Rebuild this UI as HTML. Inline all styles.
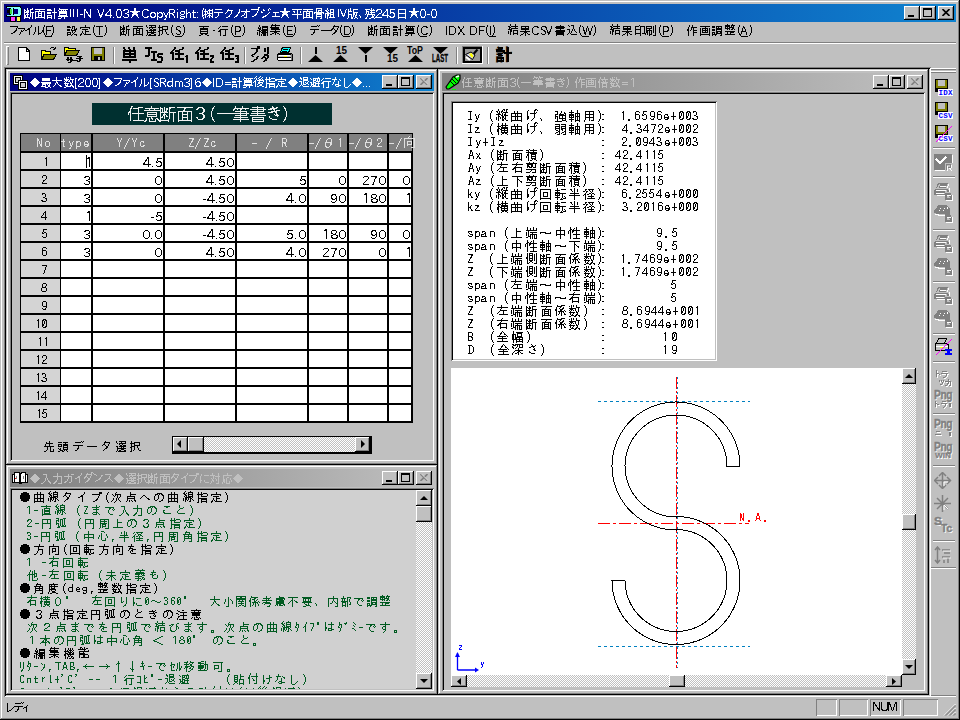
<!DOCTYPE html><html><head><meta charset="utf-8"><style>
html,body{margin:0;padding:0;}
body{width:960px;height:720px;overflow:hidden;position:relative;background:#c0c0c0;font-family:"Liberation Sans",sans-serif;font-size:12px;color:#000;}
div,svg{position:absolute;box-sizing:border-box;}
.t{white-space:pre;line-height:13px;}
.k{-webkit-text-stroke:0.15px currentColor;}
.j{font-family:"Liberation Sans",sans-serif;}
</style></head><body>
<div style="left:0px;top:0px;width:960px;height:720px;box-shadow:inset -1px -1px #000,inset 1px 1px #c0c0c0,inset -2px -2px #808080,inset 2px 2px #fff;background:#c0c0c0"></div>
<div style="left:4px;top:4px;width:952px;height:18px;background:linear-gradient(to right,#000080,#1084d0)"></div>
<svg style="left:5px;top:5px;width:17px;height:17px" viewBox="0 0 17 17" shape-rendering="crispEdges"><path d="M1 1 H14 Q17 1 17 5 V8 Q17 12 14 12 H1 V10 H4 V8 H2 V5 H4 V3 H1 Z" fill="#000"/><path d="M2 2 H13 Q16 2 16 5 V8 Q16 11 13 11 H2 V10 H6 V3 H2 Z" fill="#80ffff"/><rect x="9" y="4" width="4" height="5" fill="#000080"/><rect x="8" y="3" width="1" height="7" fill="#000"/><rect x="5" y="4" width="2" height="5" fill="#40e040"/><rect x="5" y="12" width="6" height="5" fill="#000"/><rect x="6" y="12" width="4" height="4" fill="#ff40ff"/><rect x="12" y="12" width="4" height="5" fill="#000"/><rect x="12" y="12" width="3" height="4" fill="#ffff40"/></svg>
<div style="left:904px;top:6px;width:16px;height:14px;box-shadow:inset -1px -1px #000,inset 1px 1px #fff,inset -2px -2px #808080,inset 2px 2px #c0c0c0;background:#c0c0c0;"></div>
<div style="left:908px;top:15px;width:6px;height:2px;background:#000"></div>
<div style="left:920px;top:6px;width:16px;height:14px;box-shadow:inset -1px -1px #000,inset 1px 1px #fff,inset -2px -2px #808080,inset 2px 2px #c0c0c0;background:#c0c0c0;"></div>
<div style="left:923px;top:8px;width:9px;height:9px;border:1px solid #000;border-top-width:2px;box-sizing:border-box"></div>
<div style="left:938px;top:6px;width:16px;height:14px;box-shadow:inset -1px -1px #000,inset 1px 1px #fff,inset -2px -2px #808080,inset 2px 2px #c0c0c0;background:#c0c0c0;"></div>
<svg style="left:942px;top:9px;width:8px;height:7px" viewBox="0 0 8 7"><path d="M0.5 0 L7.5 7 M7.5 0 L0.5 7" stroke="#000" stroke-width="1.6"/></svg>
<div style="left:4px;top:42px;width:952px;height:1px;background:#808080"></div>
<div style="left:4px;top:43px;width:952px;height:1px;background:#fff"></div>
<div style="left:6px;top:46px;width:3px;height:19px;box-shadow:inset 1px 1px #fff,inset -1px -1px #808080;"></div>
<div style="left:113px;top:47px;width:1px;height:17px;background:#808080"></div>
<div style="left:114px;top:47px;width:1px;height:17px;background:#fff"></div>
<div style="left:244px;top:47px;width:1px;height:17px;background:#808080"></div>
<div style="left:245px;top:47px;width:1px;height:17px;background:#fff"></div>
<div style="left:300px;top:47px;width:1px;height:17px;background:#808080"></div>
<div style="left:301px;top:47px;width:1px;height:17px;background:#fff"></div>
<div style="left:456px;top:47px;width:1px;height:17px;background:#808080"></div>
<div style="left:457px;top:47px;width:1px;height:17px;background:#fff"></div>
<div style="left:487px;top:47px;width:1px;height:17px;background:#808080"></div>
<div style="left:488px;top:47px;width:1px;height:17px;background:#fff"></div>
<svg style="left:18px;top:47px;width:12px;height:14px" viewBox="0 0 12 14" shape-rendering="crispEdges"><path d="M0.5 0.5 H8 L11.5 4 V13.5 H0.5 Z" fill="#fff" stroke="#000"/><path d="M8 0.5 V4 H11.5" fill="none" stroke="#000"/></svg>
<svg style="left:41px;top:47px;width:16px;height:14px" viewBox="0 0 16 14" shape-rendering="crispEdges"><path d="M9 2 C10 0 13 0 14 2 M14 2 l-2 0 M14 2 l0 -2" stroke="#000" fill="none"/><path d="M0.5 3.5 H4 L5 4.5 H9.5 V7.5 H3 L0.5 12.5 Z" fill="#ffff00" stroke="#000"/><path d="M3 7.5 H15.5 L12.5 12.5 H0.5 Z" fill="#808000" stroke="#000"/></svg>
<svg style="left:64px;top:47px;width:16px;height:10px" viewBox="0 0 16 10" shape-rendering="crispEdges"><path d="M0.5 0.5 H4 L5 1.5 H11.5 V3.5 H3 L0.5 8.5 Z" fill="#ffff00" stroke="#000"/><path d="M3 3.5 H15.5 L12.5 8.5 H0.5 Z" fill="#808000" stroke="#000"/></svg>
<svg style="left:91px;top:47px;width:14px;height:14px" viewBox="0 0 14 14" shape-rendering="crispEdges"><rect x="0" y="0" width="14" height="14" fill="#000"/><rect x="1" y="1" width="12" height="12" fill="#808000"/><rect x="3" y="1" width="8" height="6" fill="#c0c0c0"/><rect x="3" y="9" width="8" height="5" fill="#000"/><rect x="7" y="10" width="2" height="3" fill="#c0c0c0"/></svg>
<svg style="left:118px;top:44px;width:20px;height:20px" viewBox="0 0 20 20" shape-rendering="crispEdges"><path d="M5 3h2v2h-2zM10 3h2v2h-2zM15 3h2v2h-2zM6 5h2v1h-2zM11 5h2v1h-2zM15 5h2v1h-2zM5 6h13v8h-13zM4 15h15v2h-15zM11 17h2v2h-2z" fill="#000"/><path d="M7 8h4v1h-4z M13 8h3v1h-3z M7 11h4v1h-4z M13 11h3v1h-3z" fill="#c0c0c0"/></svg>
<svg style="left:142px;top:44px;width:22px;height:20px" viewBox="0 0 22 20" shape-rendering="crispEdges"><path d="M3 3h7v2h-7zM6 5h2v7h-2zM3 11h4v2h-4zM9 7h6v2h-6zM11 9h2v6h-2zM9 15h6v2h-6zM16 9h5v2h-5zM15 10h2v3h-2zM16 12h4v2h-4zM19 13h2v4h-2zM15 17h5v2h-5z" fill="#000"/></svg>
<svg style="left:168px;top:44px;width:22px;height:20px" viewBox="0 0 22 20" shape-rendering="crispEdges"><path d="M6 3h2v2h-2zM5 5h2v1h-2zM4 6h2v1h-2zM3 7h2v1h-2zM2 8h2v2h-2zM4 8h2v8h-2zM14 3h2v2h-2zM11 5h4v1h-4zM7 6h5v2h-5zM7 9h9v2h-9zM10 6h2v9h-2zM7 14h9v2h-9zM17 12h2v1h-2zM18 11h2v8h-2z" fill="#000"/></svg>
<svg style="left:193px;top:44px;width:22px;height:20px" viewBox="0 0 22 20" shape-rendering="crispEdges"><path d="M6 3h2v2h-2zM5 5h2v1h-2zM4 6h2v1h-2zM3 7h2v1h-2zM2 8h2v2h-2zM4 8h2v8h-2zM14 3h2v2h-2zM11 5h4v1h-4zM7 6h5v2h-5zM7 9h9v2h-9zM10 6h2v9h-2zM7 14h9v2h-9zM17 11h4v2h-4zM19 13h2v1h-2zM18 14h2v1h-2zM17 15h2v2h-2zM17 17h4v2h-4z" fill="#000"/></svg>
<svg style="left:218px;top:44px;width:22px;height:20px" viewBox="0 0 22 20" shape-rendering="crispEdges"><path d="M6 3h2v2h-2zM5 5h2v1h-2zM4 6h2v1h-2zM3 7h2v1h-2zM2 8h2v2h-2zM4 8h2v8h-2zM14 3h2v2h-2zM11 5h4v1h-4zM7 6h5v2h-5zM7 9h9v2h-9zM10 6h2v9h-2zM7 14h9v2h-9zM17 11h4v2h-4zM19 13h2v1h-2zM18 14h3v1h-3zM19 15h2v2h-2zM17 17h4v2h-4z" fill="#000"/></svg>
<svg style="left:492px;top:44px;width:21px;height:20px" viewBox="0 0 21 20" shape-rendering="crispEdges"><path d="M6 3h5v2h-5zM4 6h9v2h-9zM6 9h5v1h-5zM6 11h5v1h-5zM5 13h7v5h-7zM15 3h2v15h-2zM12 8h8v2h-8z" fill="#000"/><path d="M6 15h5v1h-5z" fill="#c0c0c0"/></svg>
<svg style="left:277px;top:47px;width:17px;height:15px" viewBox="0 0 17 15" shape-rendering="crispEdges"><path d="M5 0 H14 V1 L12 6 H3 V5 Z" fill="#000"/><path d="M6 1 H13 L11 5 H4 Z" fill="#00ffff"/><rect x="6" y="2" width="5" height="1" fill="#000"/><rect x="5" y="4" width="5" height="1" fill="#000"/><path d="M1 6 H14 L16 8 V14 H1 L0 13 V7 Z" fill="#000"/><rect x="1" y="8" width="13" height="2" fill="#c0c0c0"/><rect x="2" y="8" width="11" height="1" fill="#fff"/><rect x="7" y="9" width="3" height="1" fill="#ffff00"/><rect x="1" y="11" width="13" height="2" fill="#fff"/><rect x="14" y="7" width="1" height="6" fill="#808080"/></svg>
<svg style="left:308px;top:55px;width:15px;height:7px" viewBox="0 0 15 7"><path d="M7.5 0 L15 7 H0 Z" fill="#000"/></svg>
<div style="left:315px;top:47px;width:2px;height:7px;background:#000"></div>
<svg style="left:333px;top:55px;width:15px;height:7px" viewBox="0 0 15 7"><path d="M7.5 0 L15 7 H0 Z" fill="#000"/></svg>
<div id="t1" class="t" style="left:336px;top:46px;font-size:10px;line-height:9px;font-weight:bold;transform:scaleX(0.9888);transform-origin:0 0;">15</div>
<svg style="left:358px;top:47px;width:15px;height:7px" viewBox="0 0 15 7"><path d="M0 0 H15 L7.5 7 Z" fill="#000"/></svg>
<div style="left:365px;top:55px;width:2px;height:7px;background:#000"></div>
<svg style="left:383px;top:47px;width:15px;height:7px" viewBox="0 0 15 7"><path d="M0 0 H15 L7.5 7 Z" fill="#000"/></svg>
<div id="t2" class="t" style="left:387px;top:54px;font-size:10px;line-height:9px;font-weight:bold;transform:scaleX(0.9888);transform-origin:0 0;">15</div>
<div id="t3" class="t" style="left:407px;top:46px;font-size:10px;line-height:9px;font-weight:bold;transform:scaleX(0.8812);transform-origin:0 0;">ToP</div>
<svg style="left:408px;top:55px;width:15px;height:7px" viewBox="0 0 15 7"><path d="M7.5 0 L15 7 H0 Z" fill="#000"/></svg>
<svg style="left:433px;top:47px;width:15px;height:7px" viewBox="0 0 15 7"><path d="M0 0 H15 L7.5 7 Z" fill="#000"/></svg>
<div id="t4" class="t" style="left:432px;top:54px;font-size:10px;line-height:10px;font-weight:bold;-webkit-text-stroke:0.3px #000;transform:scaleX(0.6128);transform-origin:0 0;">LAST</div>
<div style="left:462px;top:46px;width:21px;height:18px;box-shadow:inset -1px -1px #fff,inset 1px 1px #808080;"></div>
<div style="left:463px;top:47px;width:19px;height:16px;border:2px solid #000;background:#989898"></div>
<svg style="left:465px;top:49px;width:15px;height:12px" viewBox="0 0 15 12"><path d="M12.5 0.5 L8.5 5" stroke="#000" stroke-width="2.2"/><path d="M0.5 5.5 L6 3 L10 6 L7.5 10.5 Z" fill="#d8d8f0" stroke="#000" stroke-width="1"/><path d="M1 8 L5 11" stroke="#fff" stroke-width="2"/><path d="M4 5 L6.5 4 L8.5 7 L7 9 Z" fill="#ffff00"/></svg>
<div id="t5" class="t" style="left:496px;top:46px;font-size:16px;line-height:17px;font-weight:bold;transform:scaleX(1.0000);transform-origin:0 0;"><span class="j">計</span></div>
<div style="left:4px;top:67px;width:927px;height:630px;box-shadow:inset 1px 1px #808080,inset -1px -1px #fff,inset 2px 2px #000,inset -2px -2px #c0c0c0"></div>
<div style="left:6px;top:69px;width:432px;height:396px;box-shadow:inset -1px -1px #000,inset 1px 1px #c0c0c0,inset -2px -2px #808080,inset 2px 2px #fff;background:#c0c0c0;"></div>
<div style="left:10px;top:73px;width:424px;height:18px;background:linear-gradient(to right,#000080,#1084d0)"></div>
<svg style="left:12px;top:74px;width:16px;height:16px" viewBox="0 0 16 16" shape-rendering="crispEdges"><rect x="1" y="1" width="10" height="10" fill="#000"/><rect x="2" y="2" width="8" height="8" fill="#fff"/><rect x="3" y="3" width="6" height="6" fill="#000"/><rect x="4" y="4" width="4" height="4" fill="#d0d0d0"/><rect x="6" y="6" width="10" height="10" fill="#000"/><rect x="7" y="7" width="8" height="8" fill="#fff"/><rect x="8" y="8" width="6" height="6" fill="#000"/><rect x="9" y="9" width="4" height="4" fill="#d0d0d0"/></svg>
<div style="left:382px;top:75px;width:16px;height:14px;box-shadow:inset -1px -1px #000,inset 1px 1px #fff,inset -2px -2px #808080,inset 2px 2px #c0c0c0;background:#c0c0c0;"></div>
<div style="left:386px;top:84px;width:6px;height:2px;background:#000"></div>
<div style="left:398px;top:75px;width:16px;height:14px;box-shadow:inset -1px -1px #000,inset 1px 1px #fff,inset -2px -2px #808080,inset 2px 2px #c0c0c0;background:#c0c0c0;"></div>
<div style="left:401px;top:77px;width:9px;height:9px;border:1px solid #000;border-top-width:2px;box-sizing:border-box"></div>
<div style="left:416px;top:75px;width:16px;height:14px;box-shadow:inset -1px -1px #000,inset 1px 1px #fff,inset -2px -2px #808080,inset 2px 2px #c0c0c0;background:#c0c0c0;"></div>
<svg style="left:420px;top:78px;width:8px;height:7px" viewBox="0 0 8 7"><path d="M0.5 0 L7.5 7 M7.5 0 L0.5 7" stroke="#808080" stroke-width="1.6"/><path d="M1.5 0 L8.5 7" stroke="#fff" stroke-width="0.8" opacity="0.9"/></svg>
<div style="left:10px;top:92px;width:424px;height:369px;box-shadow:inset 1px 1px #808080,inset -1px -1px #fff,inset 2px 2px #000,inset -2px -2px #c0c0c0;background:#c0c0c0"></div>
<div style="left:92px;top:103px;width:240px;height:22px;background:#003030"></div>
<div style="left:20px;top:133px;width:393px;height:290px;background:#000"></div>
<div style="left:21px;top:134px;width:391px;height:17px;background:#808080"></div>
<div style="left:60px;top:134px;width:1px;height:17px;background:#000"></div>
<div style="left:91px;top:134px;width:1px;height:17px;background:#000"></div>
<div style="left:92px;top:134px;width:1px;height:17px;background:#000"></div>
<div style="left:163px;top:134px;width:1px;height:17px;background:#000"></div>
<div style="left:164px;top:134px;width:1px;height:17px;background:#000"></div>
<div style="left:235px;top:134px;width:1px;height:17px;background:#000"></div>
<div style="left:236px;top:134px;width:1px;height:17px;background:#000"></div>
<div style="left:307px;top:134px;width:1px;height:17px;background:#000"></div>
<div style="left:308px;top:134px;width:1px;height:17px;background:#000"></div>
<div style="left:347px;top:134px;width:1px;height:17px;background:#000"></div>
<div style="left:348px;top:134px;width:1px;height:17px;background:#000"></div>
<div style="left:387px;top:134px;width:1px;height:17px;background:#000"></div>
<div style="left:388px;top:134px;width:1px;height:17px;background:#000"></div>
<div style="left:21px;top:153px;width:39px;height:16px;background:#d4d4d4"></div>
<div style="left:61px;top:153px;width:30px;height:16px;background:#fff"></div>
<div style="left:93px;top:153px;width:70px;height:16px;background:#fff"></div>
<div style="left:165px;top:153px;width:70px;height:16px;background:#fff"></div>
<div style="left:237px;top:153px;width:70px;height:16px;background:#fff"></div>
<div style="left:309px;top:153px;width:38px;height:16px;background:#fff"></div>
<div style="left:349px;top:153px;width:38px;height:16px;background:#fff"></div>
<div style="left:389px;top:153px;width:22px;height:16px;background:#fff"></div>
<div style="left:21px;top:171px;width:39px;height:16px;background:#d4d4d4"></div>
<div style="left:61px;top:171px;width:30px;height:16px;background:#fff"></div>
<div style="left:93px;top:171px;width:70px;height:16px;background:#fff"></div>
<div style="left:165px;top:171px;width:70px;height:16px;background:#fff"></div>
<div style="left:237px;top:171px;width:70px;height:16px;background:#fff"></div>
<div style="left:309px;top:171px;width:38px;height:16px;background:#fff"></div>
<div style="left:349px;top:171px;width:38px;height:16px;background:#fff"></div>
<div style="left:389px;top:171px;width:22px;height:16px;background:#fff"></div>
<div style="left:21px;top:189px;width:39px;height:16px;background:#d4d4d4"></div>
<div style="left:61px;top:189px;width:30px;height:16px;background:#fff"></div>
<div style="left:93px;top:189px;width:70px;height:16px;background:#fff"></div>
<div style="left:165px;top:189px;width:70px;height:16px;background:#fff"></div>
<div style="left:237px;top:189px;width:70px;height:16px;background:#fff"></div>
<div style="left:309px;top:189px;width:38px;height:16px;background:#fff"></div>
<div style="left:349px;top:189px;width:38px;height:16px;background:#fff"></div>
<div style="left:389px;top:189px;width:22px;height:16px;background:#fff"></div>
<div style="left:21px;top:207px;width:39px;height:16px;background:#d4d4d4"></div>
<div style="left:61px;top:207px;width:30px;height:16px;background:#fff"></div>
<div style="left:93px;top:207px;width:70px;height:16px;background:#fff"></div>
<div style="left:165px;top:207px;width:70px;height:16px;background:#fff"></div>
<div style="left:237px;top:207px;width:70px;height:16px;background:#fff"></div>
<div style="left:309px;top:207px;width:38px;height:16px;background:#fff"></div>
<div style="left:349px;top:207px;width:38px;height:16px;background:#fff"></div>
<div style="left:389px;top:207px;width:22px;height:16px;background:#fff"></div>
<div style="left:21px;top:225px;width:39px;height:16px;background:#d4d4d4"></div>
<div style="left:61px;top:225px;width:30px;height:16px;background:#fff"></div>
<div style="left:93px;top:225px;width:70px;height:16px;background:#fff"></div>
<div style="left:165px;top:225px;width:70px;height:16px;background:#fff"></div>
<div style="left:237px;top:225px;width:70px;height:16px;background:#fff"></div>
<div style="left:309px;top:225px;width:38px;height:16px;background:#fff"></div>
<div style="left:349px;top:225px;width:38px;height:16px;background:#fff"></div>
<div style="left:389px;top:225px;width:22px;height:16px;background:#fff"></div>
<div style="left:21px;top:243px;width:39px;height:16px;background:#d4d4d4"></div>
<div style="left:61px;top:243px;width:30px;height:16px;background:#fff"></div>
<div style="left:93px;top:243px;width:70px;height:16px;background:#fff"></div>
<div style="left:165px;top:243px;width:70px;height:16px;background:#fff"></div>
<div style="left:237px;top:243px;width:70px;height:16px;background:#fff"></div>
<div style="left:309px;top:243px;width:38px;height:16px;background:#fff"></div>
<div style="left:349px;top:243px;width:38px;height:16px;background:#fff"></div>
<div style="left:389px;top:243px;width:22px;height:16px;background:#fff"></div>
<div style="left:21px;top:261px;width:39px;height:16px;background:#d4d4d4"></div>
<div style="left:61px;top:261px;width:30px;height:16px;background:#fff"></div>
<div style="left:93px;top:261px;width:70px;height:16px;background:#fff"></div>
<div style="left:165px;top:261px;width:70px;height:16px;background:#fff"></div>
<div style="left:237px;top:261px;width:70px;height:16px;background:#fff"></div>
<div style="left:309px;top:261px;width:38px;height:16px;background:#fff"></div>
<div style="left:349px;top:261px;width:38px;height:16px;background:#fff"></div>
<div style="left:389px;top:261px;width:22px;height:16px;background:#fff"></div>
<div style="left:21px;top:279px;width:39px;height:16px;background:#d4d4d4"></div>
<div style="left:61px;top:279px;width:30px;height:16px;background:#fff"></div>
<div style="left:93px;top:279px;width:70px;height:16px;background:#fff"></div>
<div style="left:165px;top:279px;width:70px;height:16px;background:#fff"></div>
<div style="left:237px;top:279px;width:70px;height:16px;background:#fff"></div>
<div style="left:309px;top:279px;width:38px;height:16px;background:#fff"></div>
<div style="left:349px;top:279px;width:38px;height:16px;background:#fff"></div>
<div style="left:389px;top:279px;width:22px;height:16px;background:#fff"></div>
<div style="left:21px;top:297px;width:39px;height:16px;background:#d4d4d4"></div>
<div style="left:61px;top:297px;width:30px;height:16px;background:#fff"></div>
<div style="left:93px;top:297px;width:70px;height:16px;background:#fff"></div>
<div style="left:165px;top:297px;width:70px;height:16px;background:#fff"></div>
<div style="left:237px;top:297px;width:70px;height:16px;background:#fff"></div>
<div style="left:309px;top:297px;width:38px;height:16px;background:#fff"></div>
<div style="left:349px;top:297px;width:38px;height:16px;background:#fff"></div>
<div style="left:389px;top:297px;width:22px;height:16px;background:#fff"></div>
<div style="left:21px;top:315px;width:39px;height:16px;background:#d4d4d4"></div>
<div style="left:61px;top:315px;width:30px;height:16px;background:#fff"></div>
<div style="left:93px;top:315px;width:70px;height:16px;background:#fff"></div>
<div style="left:165px;top:315px;width:70px;height:16px;background:#fff"></div>
<div style="left:237px;top:315px;width:70px;height:16px;background:#fff"></div>
<div style="left:309px;top:315px;width:38px;height:16px;background:#fff"></div>
<div style="left:349px;top:315px;width:38px;height:16px;background:#fff"></div>
<div style="left:389px;top:315px;width:22px;height:16px;background:#fff"></div>
<div style="left:21px;top:333px;width:39px;height:16px;background:#d4d4d4"></div>
<div style="left:61px;top:333px;width:30px;height:16px;background:#fff"></div>
<div style="left:93px;top:333px;width:70px;height:16px;background:#fff"></div>
<div style="left:165px;top:333px;width:70px;height:16px;background:#fff"></div>
<div style="left:237px;top:333px;width:70px;height:16px;background:#fff"></div>
<div style="left:309px;top:333px;width:38px;height:16px;background:#fff"></div>
<div style="left:349px;top:333px;width:38px;height:16px;background:#fff"></div>
<div style="left:389px;top:333px;width:22px;height:16px;background:#fff"></div>
<div style="left:21px;top:351px;width:39px;height:16px;background:#d4d4d4"></div>
<div style="left:61px;top:351px;width:30px;height:16px;background:#fff"></div>
<div style="left:93px;top:351px;width:70px;height:16px;background:#fff"></div>
<div style="left:165px;top:351px;width:70px;height:16px;background:#fff"></div>
<div style="left:237px;top:351px;width:70px;height:16px;background:#fff"></div>
<div style="left:309px;top:351px;width:38px;height:16px;background:#fff"></div>
<div style="left:349px;top:351px;width:38px;height:16px;background:#fff"></div>
<div style="left:389px;top:351px;width:22px;height:16px;background:#fff"></div>
<div style="left:21px;top:369px;width:39px;height:16px;background:#d4d4d4"></div>
<div style="left:61px;top:369px;width:30px;height:16px;background:#fff"></div>
<div style="left:93px;top:369px;width:70px;height:16px;background:#fff"></div>
<div style="left:165px;top:369px;width:70px;height:16px;background:#fff"></div>
<div style="left:237px;top:369px;width:70px;height:16px;background:#fff"></div>
<div style="left:309px;top:369px;width:38px;height:16px;background:#fff"></div>
<div style="left:349px;top:369px;width:38px;height:16px;background:#fff"></div>
<div style="left:389px;top:369px;width:22px;height:16px;background:#fff"></div>
<div style="left:21px;top:387px;width:39px;height:16px;background:#d4d4d4"></div>
<div style="left:61px;top:387px;width:30px;height:16px;background:#fff"></div>
<div style="left:93px;top:387px;width:70px;height:16px;background:#fff"></div>
<div style="left:165px;top:387px;width:70px;height:16px;background:#fff"></div>
<div style="left:237px;top:387px;width:70px;height:16px;background:#fff"></div>
<div style="left:309px;top:387px;width:38px;height:16px;background:#fff"></div>
<div style="left:349px;top:387px;width:38px;height:16px;background:#fff"></div>
<div style="left:389px;top:387px;width:22px;height:16px;background:#fff"></div>
<div style="left:21px;top:405px;width:39px;height:16px;background:#d4d4d4"></div>
<div style="left:61px;top:405px;width:30px;height:16px;background:#fff"></div>
<div style="left:93px;top:405px;width:70px;height:16px;background:#fff"></div>
<div style="left:165px;top:405px;width:70px;height:16px;background:#fff"></div>
<div style="left:237px;top:405px;width:70px;height:16px;background:#fff"></div>
<div style="left:309px;top:405px;width:38px;height:16px;background:#fff"></div>
<div style="left:349px;top:405px;width:38px;height:16px;background:#fff"></div>
<div style="left:389px;top:405px;width:22px;height:16px;background:#fff"></div>
<div style="left:86px;top:155px;width:1px;height:13px;background:#000"></div>
<div style="left:172px;top:436px;width:200px;height:18px;background:#000"></div>
<div style="left:173px;top:437px;width:197px;height:15px;background-color:#fff;background-image:repeating-conic-gradient(#c0c0c0 0 25%,#fff 0 50%);background-size:2px 2px;"></div>
<div style="left:173px;top:437px;width:15px;height:15px;box-shadow:inset -1px -1px #000,inset 1px 1px #fff,inset -2px -2px #808080,inset 2px 2px #c0c0c0;background:#c0c0c0;"></div>
<svg style="left:177px;top:440px;width:6px;height:8px"><path d="M4 0 L0 4 L4 8z" fill="#000"/></svg>
<div style="left:188px;top:437px;width:16px;height:15px;box-shadow:inset -1px -1px #000,inset 1px 1px #fff,inset -2px -2px #808080,inset 2px 2px #c0c0c0;background:#c0c0c0;"></div>
<div style="left:355px;top:437px;width:15px;height:15px;box-shadow:inset -1px -1px #000,inset 1px 1px #fff,inset -2px -2px #808080,inset 2px 2px #c0c0c0;background:#c0c0c0;"></div>
<svg style="left:361px;top:440px;width:6px;height:8px"><path d="M0 0 L4 4 L0 8z" fill="#000"/></svg>
<div style="left:6px;top:465px;width:432px;height:230px;box-shadow:inset -1px -1px #000,inset 1px 1px #c0c0c0,inset -2px -2px #808080,inset 2px 2px #fff;background:#c0c0c0;"></div>
<div style="left:10px;top:469px;width:424px;height:18px;background:linear-gradient(to right,#808080,#c0c0c0)"></div>
<svg style="left:12px;top:471px;width:16px;height:14px" viewBox="0 0 16 14" shape-rendering="crispEdges"><path d="M2 1 H7 L8 2 L9 1 H14 V3 H16 V12 H10 L9 13 H7 L6 12 H0 V3 H2 Z" fill="#000"/><path d="M3 2 H6 L7 3 V11 H3 Z M9 3 L10 2 H13 V11 H9 Z" fill="#fff"/><path d="M1 4 H2 V11 H1 Z M14 4 H15 V11 H14 Z" fill="#fff"/><rect x="4" y="5" width="1" height="3" fill="#808080"/><rect x="11" y="5" width="1" height="3" fill="#808080"/><rect x="3" y="7" width="1" height="1" fill="#f00"/></svg>
<div style="left:382px;top:471px;width:16px;height:14px;box-shadow:inset -1px -1px #000,inset 1px 1px #fff,inset -2px -2px #808080,inset 2px 2px #c0c0c0;background:#c0c0c0;"></div>
<div style="left:386px;top:480px;width:6px;height:2px;background:#000"></div>
<div style="left:398px;top:471px;width:16px;height:14px;box-shadow:inset -1px -1px #000,inset 1px 1px #fff,inset -2px -2px #808080,inset 2px 2px #c0c0c0;background:#c0c0c0;"></div>
<div style="left:401px;top:473px;width:9px;height:9px;border:1px solid #000;border-top-width:2px;box-sizing:border-box"></div>
<div style="left:416px;top:471px;width:16px;height:14px;box-shadow:inset -1px -1px #000,inset 1px 1px #fff,inset -2px -2px #808080,inset 2px 2px #c0c0c0;background:#c0c0c0;"></div>
<svg style="left:420px;top:474px;width:8px;height:7px" viewBox="0 0 8 7"><path d="M0.5 0 L7.5 7 M7.5 0 L0.5 7" stroke="#808080" stroke-width="1.6"/><path d="M1.5 0 L8.5 7" stroke="#fff" stroke-width="0.8" opacity="0.9"/></svg>
<div style="left:10px;top:488px;width:424px;height:203px;box-shadow:inset 1px 1px #808080,inset -1px -1px #fff,inset 2px 2px #000,inset -2px -2px #c0c0c0;background:#d0d0d0"></div>
<div style="left:416px;top:490px;width:16px;height:199px;background-color:#fff;background-image:repeating-conic-gradient(#c0c0c0 0 25%,#fff 0 50%);background-size:2px 2px;"></div>
<div style="left:416px;top:490px;width:16px;height:16px;box-shadow:inset -1px -1px #000,inset 1px 1px #fff,inset -2px -2px #808080,inset 2px 2px #c0c0c0;background:#c0c0c0;"></div>
<svg style="left:420px;top:496px;width:8px;height:5px"><path d="M0 4 L4 0 L8 4z" fill="#000"/></svg>
<div style="left:416px;top:506px;width:16px;height:16px;box-shadow:inset -1px -1px #000,inset 1px 1px #fff,inset -2px -2px #808080,inset 2px 2px #c0c0c0;background:#c0c0c0;"></div>
<div style="left:416px;top:673px;width:16px;height:16px;box-shadow:inset -1px -1px #000,inset 1px 1px #fff,inset -2px -2px #808080,inset 2px 2px #c0c0c0;background:#c0c0c0;"></div>
<svg style="left:420px;top:679px;width:8px;height:5px"><path d="M0 0 L4 4 L8 0z" fill="#000"/></svg>
<div style="left:438px;top:69px;width:491px;height:626px;box-shadow:inset -1px -1px #000,inset 1px 1px #c0c0c0,inset -2px -2px #808080,inset 2px 2px #fff;background:#c0c0c0;"></div>
<div style="left:442px;top:73px;width:483px;height:18px;background:linear-gradient(to right,#808080,#c0c0c0)"></div>
<svg style="left:444px;top:73px;width:17px;height:17px" viewBox="0 0 17 17"><path d="M3 16 L2 14 L9 4 L13 2 L16 2 L16 6 L14 10 L5 16 Z" fill="#00ff00" stroke="#000" stroke-width="1.2"/><path d="M6 8 L11 13 M8 6 L12 10 M10 4 L14 8" stroke="#000" stroke-width="1"/><path d="M12 4 L15 3" stroke="#fff" stroke-width="1.5"/><rect x="8" y="16" width="4" height="1" fill="#00ff00"/></svg>
<div style="left:873px;top:75px;width:16px;height:14px;box-shadow:inset -1px -1px #000,inset 1px 1px #fff,inset -2px -2px #808080,inset 2px 2px #c0c0c0;background:#c0c0c0;"></div>
<div style="left:877px;top:84px;width:6px;height:2px;background:#000"></div>
<div style="left:889px;top:75px;width:16px;height:14px;box-shadow:inset -1px -1px #000,inset 1px 1px #fff,inset -2px -2px #808080,inset 2px 2px #c0c0c0;background:#c0c0c0;"></div>
<div style="left:892px;top:77px;width:9px;height:9px;border:1px solid #000;border-top-width:2px;box-sizing:border-box"></div>
<div style="left:907px;top:75px;width:16px;height:14px;box-shadow:inset -1px -1px #000,inset 1px 1px #fff,inset -2px -2px #808080,inset 2px 2px #c0c0c0;background:#c0c0c0;"></div>
<svg style="left:911px;top:78px;width:8px;height:7px" viewBox="0 0 8 7"><path d="M0.5 0 L7.5 7 M7.5 0 L0.5 7" stroke="#808080" stroke-width="1.6"/><path d="M1.5 0 L8.5 7" stroke="#fff" stroke-width="0.8" opacity="0.9"/></svg>
<div style="left:442px;top:92px;width:483px;height:599px;box-shadow:inset 1px 1px #808080,inset -1px -1px #fff,inset 2px 2px #000,inset -2px -2px #c0c0c0;background:#c0c0c0"></div>
<div style="left:451px;top:101px;width:266px;height:260px;box-shadow:inset 1px 1px #808080,inset -1px -1px #fff,inset 2px 2px #000,inset -2px -2px #c0c0c0;background:#fff"></div>
<div style="left:451px;top:368px;width:451px;height:307px;background:#fff"></div>
<div style="left:902px;top:368px;width:14px;height:307px;background-color:#fff;background-image:repeating-conic-gradient(#c0c0c0 0 25%,#fff 0 50%);background-size:2px 2px;"></div>
<div style="left:902px;top:368px;width:14px;height:16px;box-shadow:inset -1px -1px #000,inset 1px 1px #fff,inset -2px -2px #808080,inset 2px 2px #c0c0c0;background:#c0c0c0;"></div>
<svg style="left:905px;top:374px;width:8px;height:5px"><path d="M0 4 L4 0 L8 4z" fill="#000"/></svg>
<div style="left:902px;top:514px;width:14px;height:16px;box-shadow:inset -1px -1px #000,inset 1px 1px #fff,inset -2px -2px #808080,inset 2px 2px #c0c0c0;background:#c0c0c0;"></div>
<div style="left:902px;top:659px;width:14px;height:16px;box-shadow:inset -1px -1px #000,inset 1px 1px #fff,inset -2px -2px #808080,inset 2px 2px #c0c0c0;background:#c0c0c0;"></div>
<svg style="left:905px;top:665px;width:8px;height:5px"><path d="M0 0 L4 4 L8 0z" fill="#000"/></svg>
<div style="left:451px;top:675px;width:451px;height:12px;background-color:#fff;background-image:repeating-conic-gradient(#c0c0c0 0 25%,#fff 0 50%);background-size:2px 2px;"></div>
<div style="left:451px;top:675px;width:16px;height:12px;box-shadow:inset -1px -1px #000,inset 1px 1px #fff,inset -2px -2px #808080,inset 2px 2px #c0c0c0;background:#c0c0c0;"></div>
<svg style="left:457px;top:678px;width:5px;height:7px"><path d="M4 0 L0 3.5 L4 7z" fill="#000"/></svg>
<div style="left:669px;top:675px;width:16px;height:12px;box-shadow:inset -1px -1px #000,inset 1px 1px #fff,inset -2px -2px #808080,inset 2px 2px #c0c0c0;background:#c0c0c0;"></div>
<div style="left:886px;top:675px;width:16px;height:12px;box-shadow:inset -1px -1px #000,inset 1px 1px #fff,inset -2px -2px #808080,inset 2px 2px #c0c0c0;background:#c0c0c0;"></div>
<svg style="left:892px;top:678px;width:5px;height:7px"><path d="M0 0 L4 3.5 L0 7z" fill="#000"/></svg>
<svg style="left:0;top:0;width:960px;height:720px" viewBox="0 0 960 720"><line x1="598" y1="401.5" x2="750" y2="401.5" stroke="#0080c0" stroke-width="1" stroke-dasharray="3 3"/><line x1="598" y1="646.5" x2="750" y2="646.5" stroke="#0080c0" stroke-width="1" stroke-dasharray="3 3"/><line x1="677.5" y1="377" x2="677.5" y2="668" stroke="#0080c0" stroke-width="1" stroke-dasharray="2 3"/><line x1="676.5" y1="377" x2="676.5" y2="668" stroke="#ff0000" stroke-width="1" stroke-dasharray="12 2 2 2"/><line x1="598" y1="523.5" x2="749" y2="523.5" stroke="#ff0000" stroke-width="1" stroke-dasharray="12 3 3 3"/><path d="M740.0 466.0 L739.9 461.8 L739.5 457.6 L738.8 453.5 L737.8 449.4 L736.6 445.4 L735.1 441.5 L733.4 437.7 L731.4 434.0 L729.2 430.4 L726.8 427.0 L724.1 423.8 L721.3 420.7 L718.2 417.9 L715.0 415.2 L711.6 412.8 L708.0 410.6 L704.3 408.6 L700.5 406.9 L696.6 405.4 L692.6 404.2 L688.5 403.2 L684.4 402.5 L680.2 402.1 L676.0 402.0 L671.8 402.1 L667.6 402.5 L663.5 403.2 L659.4 404.2 L655.4 405.4 L651.5 406.9 L647.7 408.6 L644.0 410.6 L640.4 412.8 L637.0 415.2 L633.8 417.9 L630.7 420.7 L627.9 423.8 L625.2 427.0 L622.8 430.4 L620.6 434.0 L618.6 437.7 L616.9 441.5 L615.4 445.4 L614.2 449.4 L613.2 453.5 L612.5 457.6 L612.1 461.8 L612.0 466.0 L612.1 470.2 L612.5 474.4 L613.2 478.5 L614.2 482.6 L615.4 486.6 L616.9 490.5 L618.6 494.3 L620.6 498.0 L622.8 501.6 L625.2 505.0 L627.9 508.2 L630.7 511.3 L633.8 514.1 L637.0 516.8 L640.4 519.2 L644.0 521.4 L647.7 523.4 L651.5 525.1 L655.4 526.6 L659.4 527.8 L663.5 528.8 L667.6 529.5 L671.8 529.9 L676.0 530.0 L676.0 529.5 L679.3 529.6 L682.7 529.9 L685.9 530.5 L689.2 531.2 L692.4 532.2 L695.5 533.4 L698.6 534.8 L701.5 536.3 L704.3 538.1 L707.0 540.0 L709.6 542.2 L712.1 544.4 L714.3 546.9 L716.5 549.5 L718.4 552.2 L720.2 555.0 L721.7 557.9 L723.1 561.0 L724.3 564.1 L725.3 567.3 L726.0 570.6 L726.6 573.8 L726.9 577.2 L727.0 580.5 L726.9 583.8 L726.6 587.2 L726.0 590.4 L725.3 593.7 L724.3 596.9 L723.1 600.0 L721.7 603.1 L720.2 606.0 L718.4 608.8 L716.5 611.5 L714.3 614.1 L712.1 616.6 L709.6 618.8 L707.0 621.0 L704.3 622.9 L701.5 624.7 L698.6 626.2 L695.5 627.6 L692.4 628.8 L689.2 629.8 L685.9 630.5 L682.7 631.1 L679.3 631.4 L676.0 631.5 L672.7 631.4 L669.3 631.1 L666.1 630.5 L662.8 629.8 L659.6 628.8 L656.5 627.6 L653.4 626.2 L650.5 624.7 L647.7 622.9 L645.0 621.0 L642.4 618.8 L639.9 616.6 L637.7 614.1 L635.5 611.5 L633.6 608.8 L631.8 606.0 L630.3 603.1 L628.9 600.0 L627.7 596.9 L626.7 593.7 L626.0 590.4 L625.4 587.2 L625.1 583.8 L625.0 580.5 L612.0 580.5 L612.1 584.7 L612.5 588.9 L613.2 593.0 L614.2 597.1 L615.4 601.1 L616.9 605.0 L618.6 608.8 L620.6 612.5 L622.8 616.1 L625.2 619.5 L627.9 622.7 L630.7 625.8 L633.8 628.6 L637.0 631.3 L640.4 633.7 L644.0 635.9 L647.7 637.9 L651.5 639.6 L655.4 641.1 L659.4 642.3 L663.5 643.3 L667.6 644.0 L671.8 644.4 L676.0 644.5 L680.2 644.4 L684.4 644.0 L688.5 643.3 L692.6 642.3 L696.6 641.1 L700.5 639.6 L704.3 637.9 L708.0 635.9 L711.6 633.7 L715.0 631.3 L718.2 628.6 L721.3 625.8 L724.1 622.7 L726.8 619.5 L729.2 616.1 L731.4 612.5 L733.4 608.8 L735.1 605.0 L736.6 601.1 L737.8 597.1 L738.8 593.0 L739.5 588.9 L739.9 584.7 L740.0 580.5 L739.9 576.3 L739.5 572.1 L738.8 568.0 L737.8 563.9 L736.6 559.9 L735.1 556.0 L733.4 552.2 L731.4 548.5 L729.2 544.9 L726.8 541.5 L724.1 538.3 L721.3 535.2 L718.2 532.4 L715.0 529.7 L711.6 527.3 L708.0 525.1 L704.3 523.1 L700.5 521.4 L696.6 519.9 L692.6 518.7 L688.5 517.7 L684.4 517.0 L680.2 516.6 L676.0 516.5 L676.0 517.0 L672.7 516.9 L669.3 516.6 L666.1 516.0 L662.8 515.3 L659.6 514.3 L656.5 513.1 L653.4 511.7 L650.5 510.2 L647.7 508.4 L645.0 506.5 L642.4 504.3 L639.9 502.1 L637.7 499.6 L635.5 497.0 L633.6 494.3 L631.8 491.5 L630.3 488.6 L628.9 485.5 L627.7 482.4 L626.7 479.2 L626.0 475.9 L625.4 472.7 L625.1 469.3 L625.0 466.0 L625.1 462.7 L625.4 459.3 L626.0 456.1 L626.7 452.8 L627.7 449.6 L628.9 446.5 L630.3 443.4 L631.8 440.5 L633.6 437.7 L635.5 435.0 L637.7 432.4 L639.9 429.9 L642.4 427.7 L645.0 425.5 L647.7 423.6 L650.5 421.8 L653.4 420.3 L656.5 418.9 L659.6 417.7 L662.8 416.7 L666.1 416.0 L669.3 415.4 L672.7 415.1 L676.0 415.0 L679.3 415.1 L682.7 415.4 L685.9 416.0 L689.2 416.7 L692.4 417.7 L695.5 418.9 L698.6 420.3 L701.5 421.8 L704.3 423.6 L707.0 425.5 L709.6 427.7 L712.1 429.9 L714.3 432.4 L716.5 435.0 L718.4 437.7 L720.2 440.5 L721.7 443.4 L723.1 446.5 L724.3 449.6 L725.3 452.8 L726.0 456.1 L726.6 459.3 L726.9 462.7 L727.0 466.0 Z" fill="none" stroke="#000" stroke-width="1" shape-rendering="crispEdges"/></svg>
<svg style="left:450px;top:640px;width:40px;height:34px" viewBox="0 0 40 34"><path d="M7.5 30 V13 M7.5 30 H26" stroke="#0000ff" stroke-width="1.3" fill="none"/><path d="M5 17 L7.5 12 L10 17z M25 27.5 L29 30 L25 32.5z" fill="#0000ff"/></svg>
<div style="left:931px;top:567px;width:25px;height:1px;background:#808080"></div>
<div style="left:931px;top:568px;width:25px;height:1px;background:#fff"></div>
<div style="left:816px;top:699px;width:21px;height:17px;box-shadow:inset 1px 1px #808080,inset -1px -1px #fff;"></div>
<div style="left:839px;top:699px;width:29px;height:17px;box-shadow:inset 1px 1px #808080,inset -1px -1px #fff;"></div>
<div style="left:870px;top:699px;width:31px;height:17px;box-shadow:inset 1px 1px #808080,inset -1px -1px #fff;"></div>
<div style="left:903px;top:699px;width:35px;height:17px;box-shadow:inset 1px 1px #808080,inset -1px -1px #fff;"></div>
<div style="left:931px;top:68px;width:25px;height:1px;background:#fff"></div>
<div style="left:931px;top:69px;width:25px;height:1px;background:#808080"></div>
<div style="left:931px;top:71px;width:25px;height:1px;background:#fff"></div>
<div style="left:931px;top:72px;width:25px;height:1px;background:#808080"></div>
<svg style="left:935px;top:79px;width:18px;height:17px" viewBox="0 0 18 17" shape-rendering="crispEdges"><rect x="0" y="0" width="13" height="13" fill="#000"/><rect x="1" y="1" width="11" height="11" fill="#808000"/><rect x="3" y="1" width="7" height="6" fill="#c0c0c0"/><rect x="1" y="9" width="11" height="4" fill="#000"/><rect x="3" y="10" width="15" height="7" fill="#fff"/><text x="3.5" y="16.3" font-family="Liberation Mono" font-weight="bold" font-size="7.5" fill="#0000ff" textLength="14">IDX</text></svg>
<svg style="left:935px;top:102px;width:18px;height:17px" viewBox="0 0 18 17" shape-rendering="crispEdges"><rect x="0" y="0" width="13" height="13" fill="#000"/><rect x="1" y="1" width="11" height="11" fill="#808000"/><rect x="3" y="1" width="7" height="6" fill="#c0c0c0"/><rect x="1" y="9" width="11" height="4" fill="#000"/><rect x="3" y="10" width="15" height="7" fill="#fff"/><text x="3.5" y="16.3" font-family="Liberation Mono" font-weight="bold" font-size="7.5" fill="#0000ff" textLength="14">CSV</text></svg>
<svg style="left:935px;top:125px;width:18px;height:17px" viewBox="0 0 18 17" shape-rendering="crispEdges"><rect x="0" y="0" width="13" height="13" fill="#000"/><rect x="1" y="1" width="11" height="11" fill="#808000"/><rect x="3" y="1" width="7" height="6" fill="#c0c0c0"/><rect x="1" y="9" width="11" height="4" fill="#000"/><rect x="3" y="10" width="15" height="7" fill="#fff"/><text x="3.5" y="16.3" font-family="Liberation Mono" font-weight="bold" font-size="7.5" fill="#0000ff" textLength="14">CSV</text><path d="M1 17 L17 1" stroke="#ff00ff" stroke-width="1" shape-rendering="auto"/></svg>
<div style="left:933px;top:147px;width:22px;height:1px;background:#808080"></div>
<div style="left:933px;top:148px;width:22px;height:1px;background:#fff"></div>
<svg style="left:934px;top:154px;width:19px;height:17px" viewBox="0 0 19 17" shape-rendering="crispEdges"><rect x="0" y="0" width="18" height="16" fill="#808080"/><rect x="18" y="1" width="1" height="16" fill="#fff"/><rect x="1" y="16" width="18" height="1" fill="#fff"/><path d="M2 5 L6 9 L12 3" stroke="#fff" stroke-width="2" fill="none"/><rect x="11" y="9" width="8" height="8" fill="#c0c0c0"/><path d="M12.5 16 V10.5 H16.5 V13 H12.5 M14.5 13 L17 16" stroke="#808080" fill="none"/><path d="M13.5 17 V11.5 M17.5 11 V14 M15.5 14 L18 17" stroke="#fff" fill="none"/></svg>
<div style="left:933px;top:176px;width:22px;height:1px;background:#808080"></div>
<div style="left:933px;top:177px;width:22px;height:1px;background:#fff"></div>
<svg style="left:934px;top:183px;width:19px;height:18px" viewBox="0 0 19 18" shape-rendering="crispEdges"><path d="M4 0 H14 V1 H5 L3 5 H2 Z" fill="#808080"/><path d="M6 2 H13 M5 4 H12" stroke="#808080" stroke-width="1.2"/><path d="M6 3 H12 M15 1 L13 5" stroke="#fff"/><path d="M1 6 H14 V7 H1 Z M0 7 H2 V12 H0 Z M2 8 H11 V10 H2 Z M2 11 H11 V12 H2 Z M13 7 H15 V9 H13Z" fill="#808080"/><path d="M2 7.5 H12 M2 10.5 H10 M3 12.5 H11 M15 5 V9" stroke="#fff"/><path d="M11 10 H18 V17 H11 Z" fill="#c0c0c0"/><path d="M17 11 H12 V16 H17 V13 H15" stroke="#808080" stroke-width="1.3" fill="none"/><path d="M18 12 V17 H12 M13 12 H17" stroke="#fff" fill="none"/></svg>
<svg style="left:934px;top:205px;width:19px;height:18px" viewBox="0 0 19 18" shape-rendering="crispEdges"><path d="M4 0 H13 L14 2 L16 4 V12 H11 V9 H4 L0 8 V5 L3 2 Z" fill="#808080"/><rect x="6" y="3" width="1" height="1" fill="#fff"/><rect x="5" y="5" width="1" height="1" fill="#fff"/><rect x="10" y="3" width="1" height="1" fill="#fff"/><rect x="9" y="5" width="1" height="1" fill="#fff"/><rect x="13" y="2" width="1" height="2" fill="#fff"/><path d="M1 9 H5 M4 10 H11" stroke="#fff"/><path d="M11 10 H18 V17 H11 Z" fill="#c0c0c0"/><path d="M17 11 H12 V16 H17 V13 H15" stroke="#808080" stroke-width="1.3" fill="none"/><path d="M18 12 V17 H12 M13 12 H17" stroke="#fff" fill="none"/></svg>
<div style="left:933px;top:229px;width:22px;height:1px;background:#808080"></div>
<div style="left:933px;top:230px;width:22px;height:1px;background:#fff"></div>
<svg style="left:934px;top:235px;width:19px;height:18px" viewBox="0 0 19 18" shape-rendering="crispEdges"><path d="M4 0 H14 V1 H5 L3 5 H2 Z" fill="#808080"/><path d="M6 2 H13 M5 4 H12" stroke="#808080" stroke-width="1.2"/><path d="M6 3 H12 M15 1 L13 5" stroke="#fff"/><path d="M1 6 H14 V7 H1 Z M0 7 H2 V12 H0 Z M2 8 H11 V10 H2 Z M2 11 H11 V12 H2 Z M13 7 H15 V9 H13Z" fill="#808080"/><path d="M2 7.5 H12 M2 10.5 H10 M3 12.5 H11 M15 5 V9" stroke="#fff"/><path d="M11 10 H18 V17 H11 Z" fill="#c0c0c0"/><path d="M17 11 H12 V16 H17 V13 H15" stroke="#808080" stroke-width="1.3" fill="none"/><path d="M18 12 V17 H12 M13 12 H17" stroke="#fff" fill="none"/></svg>
<svg style="left:934px;top:258px;width:19px;height:18px" viewBox="0 0 19 18" shape-rendering="crispEdges"><path d="M4 0 H13 L14 2 L16 4 V12 H11 V9 H4 L0 8 V5 L3 2 Z" fill="#808080"/><rect x="6" y="3" width="1" height="1" fill="#fff"/><rect x="5" y="5" width="1" height="1" fill="#fff"/><rect x="10" y="3" width="1" height="1" fill="#fff"/><rect x="9" y="5" width="1" height="1" fill="#fff"/><rect x="13" y="2" width="1" height="2" fill="#fff"/><path d="M1 9 H5 M4 10 H11" stroke="#fff"/><path d="M11 10 H18 V17 H11 Z" fill="#c0c0c0"/><path d="M17 11 H12 V16 H17 V13 H15" stroke="#808080" stroke-width="1.3" fill="none"/><path d="M18 12 V17 H12 M13 12 H17" stroke="#fff" fill="none"/></svg>
<div style="left:933px;top:281px;width:22px;height:1px;background:#808080"></div>
<div style="left:933px;top:282px;width:22px;height:1px;background:#fff"></div>
<svg style="left:934px;top:287px;width:19px;height:18px" viewBox="0 0 19 18" shape-rendering="crispEdges"><path d="M4 0 H14 V1 H5 L3 5 H2 Z" fill="#808080"/><path d="M6 2 H13 M5 4 H12" stroke="#808080" stroke-width="1.2"/><path d="M6 3 H12 M15 1 L13 5" stroke="#fff"/><path d="M1 6 H14 V7 H1 Z M0 7 H2 V12 H0 Z M2 8 H11 V10 H2 Z M2 11 H11 V12 H2 Z M13 7 H15 V9 H13Z" fill="#808080"/><path d="M2 7.5 H12 M2 10.5 H10 M3 12.5 H11 M15 5 V9" stroke="#fff"/><path d="M11 10 H18 V17 H11 Z" fill="#c0c0c0"/><path d="M17 11 H12 V16 H17 V13 H15" stroke="#808080" stroke-width="1.3" fill="none"/><path d="M18 12 V17 H12 M13 12 H17" stroke="#fff" fill="none"/></svg>
<svg style="left:934px;top:310px;width:19px;height:18px" viewBox="0 0 19 18" shape-rendering="crispEdges"><path d="M4 0 H13 L14 2 L16 4 V12 H11 V9 H4 L0 8 V5 L3 2 Z" fill="#808080"/><rect x="6" y="3" width="1" height="1" fill="#fff"/><rect x="5" y="5" width="1" height="1" fill="#fff"/><rect x="10" y="3" width="1" height="1" fill="#fff"/><rect x="9" y="5" width="1" height="1" fill="#fff"/><rect x="13" y="2" width="1" height="2" fill="#fff"/><path d="M1 9 H5 M4 10 H11" stroke="#fff"/><path d="M11 10 H18 V17 H11 Z" fill="#c0c0c0"/><path d="M17 11 H12 V16 H17 V13 H15" stroke="#808080" stroke-width="1.3" fill="none"/><path d="M18 12 V17 H12 M13 12 H17" stroke="#fff" fill="none"/></svg>
<div style="left:933px;top:333px;width:22px;height:1px;background:#808080"></div>
<div style="left:933px;top:334px;width:22px;height:1px;background:#fff"></div>
<svg style="left:934px;top:338px;width:19px;height:17px" viewBox="0 0 19 17" shape-rendering="crispEdges"><path d="M4.5 0.5 H12.5 L10.5 5.5 H2.5 Z" fill="#c0c0c0" stroke="#000"/><path d="M1.5 5.5 H13.5 L14.5 7.5 V12.5 H1.5 V7.5 Z" fill="#c0c0c0" stroke="#000"/><rect x="2" y="8" width="12" height="1" fill="#fff"/><rect x="6" y="9" width="4" height="1" fill="#ffff00"/><rect x="11" y="11" width="7" height="2" fill="#0000ff"/><rect x="13" y="13" width="3" height="2" fill="#0000ff"/><rect x="11" y="15" width="7" height="2" fill="#0000ff"/><path d="M2 17 L18 1" stroke="#ff00ff" stroke-width="1" shape-rendering="auto"/></svg>
<div style="left:933px;top:361px;width:22px;height:1px;background:#808080"></div>
<div style="left:933px;top:362px;width:22px;height:1px;background:#fff"></div>
<div id="t6" class="t" style="left:934px;top:390px;color:#808080;text-shadow:1px 1px #fff;font-weight:bold;-webkit-text-stroke:0.4px #808080;font-family:'Liberation Sans';font-size:12px;line-height:11px;letter-spacing:-0.5px;transform:scaleX(0.8502);transform-origin:0 0;">Png</div>
<div style="left:933px;top:413px;width:22px;height:1px;background:#808080"></div>
<div style="left:933px;top:414px;width:22px;height:1px;background:#fff"></div>
<div id="t7" class="t" style="left:934px;top:419px;color:#808080;text-shadow:1px 1px #fff;font-weight:bold;-webkit-text-stroke:0.4px #808080;font-family:'Liberation Sans';font-size:12px;line-height:11px;letter-spacing:-0.5px;transform:scaleX(0.8502);transform-origin:0 0;">Png</div>
<div id="t8" class="t" style="left:934px;top:442px;color:#808080;text-shadow:1px 1px #fff;font-weight:bold;-webkit-text-stroke:0.4px #808080;font-family:'Liberation Sans';font-size:12px;line-height:11px;letter-spacing:-0.5px;transform:scaleX(0.8502);transform-origin:0 0;">Png</div>
<div id="t9" class="t" style="left:935px;top:452px;color:#808080;text-shadow:1px 1px #fff;font-weight:bold;-webkit-text-stroke:0.4px #808080;font-size:8px;line-height:8px;-webkit-text-stroke:0.2px #808080;transform:scaleX(1.0281);transform-origin:0 0;">WIN</div>
<div style="left:933px;top:465px;width:22px;height:1px;background:#808080"></div>
<div style="left:933px;top:466px;width:22px;height:1px;background:#fff"></div>
<svg style="left:934px;top:472px;width:18px;height:17px" viewBox="0 0 18 17"><path d="M8.5 1 V16 M1 8.5 H16" stroke="#808080" stroke-width="1.5"/><path d="M5 4 L8.5 0.5 L12 4 M5 13 L8.5 16.5 L12 13 M4 5 L0.5 8.5 L4 12 M13 5 L16.5 8.5 L13 12" stroke="#808080" stroke-width="1.5" fill="none"/><path d="M10 10 V14 M10 10 H14" stroke="#fff"/></svg>
<svg style="left:934px;top:495px;width:18px;height:17px" viewBox="0 0 18 17"><path d="M8.5 0 V17 M0 8.5 H17 M3 3 L14 14 M14 3 L3 14" stroke="#808080" stroke-width="1.5"/><path d="M10 10 L14 14 M10 10 V15" stroke="#fff"/></svg>
<div id="t10" class="t" style="left:934px;top:517px;color:#808080;text-shadow:1px 1px #fff;font-weight:bold;-webkit-text-stroke:0.4px #808080;font-family:'Liberation Sans';font-size:10px;line-height:10px;transform:scaleX(1.1991);transform-origin:0 0;">S</div>
<div id="t11" class="t" style="left:941px;top:523px;color:#808080;text-shadow:1px 1px #fff;font-weight:bold;-webkit-text-stroke:0.4px #808080;font-family:'Liberation Sans';font-size:10px;line-height:11px;transform:scaleX(1.0057);transform-origin:0 0;">Tc</div>
<div style="left:933px;top:540px;width:22px;height:1px;background:#808080"></div>
<div style="left:933px;top:541px;width:22px;height:1px;background:#fff"></div>
<svg style="left:934px;top:546px;width:18px;height:18px" viewBox="0 0 18 18"><path d="M3.5 1 V17 M1 4 L3.5 1 L6 4 M1 14 L3.5 17 L6 14" stroke="#808080" stroke-width="1.5" fill="none"/><path d="M8 4 H16 M10 7 H16 M8 11 H16 M10 14 V17 M14 11 V17" stroke="#808080" stroke-width="1.5"/><path d="M9 5 H17 M9 12 H17" stroke="#fff" stroke-width="0.8"/></svg>
<div style="left:931px;top:695px;width:25px;height:1px;background:#808080"></div>
<div style="left:930px;top:696px;width:26px;height:1px;background:#fff"></div>
<svg style="left:943px;top:703px;width:13px;height:13px" viewBox="0 0 13 13"><path d="M1 12.5 L12.5 1 M5 12.5 L12.5 5 M9 12.5 L12.5 9" stroke="#fff" stroke-width="1"/><path d="M2 12.5 L12.5 2 M3 12.5 L12.5 3 M6 12.5 L12.5 6 M7 12.5 L12.5 7 M10 12.5 L12.5 10 M11 12.5 L12.5 11" stroke="#808080" stroke-width="1"/></svg><svg style="left:0;top:0;width:960px;height:720px" viewBox="0 0 960 720" shape-rendering="crispEdges"><defs><path id="g0" d="M4 -10h1v2h-1zM9 -10h1v1h-1zM1 -9h1v1h-1zM7 -9h3v1h-3zM1 -8h2v1h-2zM4 -8h2v1h-2zM7 -8h1v2h-1zM1 -7h1v1h-1zM3 -7h3v1h-3zM1 -6h5v1h-5zM7 -6h4v1h-4zM1 -5h1v2h-1zM4 -5h1v1h-1zM7 -5h1v4h-1zM9 -5h1v6h-1zM3 -4h3v1h-3zM1 -3h2v2h-2zM4 -3h1v2h-1zM1 -1h6v1h-6zM1 0h1v1h-1zM6 0h1v1h-1z"/><path id="g1" d="M1 -9h10v1h-10zM5 -8h1v1h-1zM1 -7h10v1h-10zM1 -6h1v5h-1zM4 -6h1v1h-1zM7 -6h1v1h-1zM10 -6h1v5h-1zM4 -5h4v1h-4zM4 -4h1v1h-1zM7 -4h1v1h-1zM4 -3h4v1h-4zM4 -2h1v1h-1zM7 -2h1v1h-1zM1 -1h10v1h-10zM1 0h1v1h-1zM10 0h1v1h-1z"/><path id="g2" d="M8 -10h1v4h-1zM1 -9h4v1h-4zM1 -8h5v1h-5zM1 -6h4v2h-4zM6 -6h5v1h-5zM8 -5h1v6h-1zM1 -3h5v1h-5zM1 -2h1v1h-1zM5 -2h1v1h-1zM1 -1h5v1h-5zM1 0h1v1h-1zM5 0h1v1h-1z"/><path id="g3" d="M2 -10h1v1h-1zM2 -9h9v1h-9zM1 -8h1v1h-1zM4 -8h1v1h-1zM6 -8h1v1h-1zM8 -8h1v1h-1zM2 -7h8v3h-8zM2 -4h1v1h-1zM9 -4h1v1h-1zM2 -3h8v1h-8zM1 -2h10v1h-10zM4 -1h1v1h-1zM7 -1h1v2h-1zM1 0h3v1h-3z"/><path id="g4" d="M2 -9h1v8h-1zM5 -9h1v8h-1zM9 -9h1v8h-1z"/><path id="g5" d="M1 -4h3v1h-3z"/><path id="g6" d="M1 -9h2v2h-2zM7 -9h1v6h-1zM1 -7h1v7h-1zM3 -7h1v1h-1zM3 -6h2v1h-2zM4 -5h1v1h-1zM5 -4h1v1h-1zM5 -3h3v1h-3zM6 -2h2v1h-2zM7 -1h1v1h-1z"/><path id="g7" d="M-1 -9h1v1h-1zM5 -9h1v3h-1zM0 -8h1v3h-1zM4 -6h1v2h-1zM1 -5h1v2h-1zM3 -4h2v1h-2zM1 -3h3v1h-3zM2 -2h2v1h-2zM2 -1h1v1h-1z"/><path id="g8" d="M4 -9h2v2h-2zM3 -7h1v1h-1zM5 -7h1v4h-1zM2 -6h1v1h-1zM1 -5h1v1h-1zM0 -4h2v1h-2zM0 -3h7v1h-7zM5 -2h1v2h-1z"/><path id="g9" d="M1 -1h1v1h-1z"/><path id="g10" d="M2 -9h4v1h-4zM2 -8h1v1h-1zM5 -8h1v1h-1zM1 -7h1v5h-1zM6 -7h1v5h-1zM2 -2h1v1h-1zM5 -2h1v1h-1zM2 -1h4v1h-4z"/><path id="g11" d="M2 -9h4v1h-4zM1 -8h2v1h-2zM6 -8h1v2h-1zM5 -6h2v1h-2zM3 -5h2v1h-2zM5 -4h2v1h-2zM6 -3h1v2h-1zM1 -2h1v1h-1zM2 -1h4v1h-4z"/><path id="g12" d="M5 -10h2v3h-2zM1 -7h10v1h-10zM3 -6h6v1h-6zM4 -5h4v1h-4zM3 -4h6v1h-6zM3 -3h2v1h-2zM7 -3h2v1h-2zM3 -2h1v1h-1zM8 -2h1v1h-1zM2 -1h1v1h-1zM9 -1h1v1h-1z"/><path id="g13" d="M3 -9h4v1h-4zM2 -8h1v1h-1zM6 -8h2v1h-2zM1 -7h1v5h-1zM2 -2h1v1h-1zM6 -2h2v1h-2zM3 -1h4v1h-4z"/><path id="g14" d="M2 -6h4v1h-4zM1 -5h2v1h-2zM5 -5h2v1h-2zM1 -4h1v2h-1zM6 -4h1v2h-1zM1 -2h2v1h-2zM5 -2h2v1h-2zM2 -1h4v1h-4z"/><path id="g15" d="M1 -6h1v1h-1zM3 -6h3v1h-3zM1 -5h2v1h-2zM5 -5h2v1h-2zM1 -4h1v2h-1zM6 -4h1v2h-1zM1 -2h2v1h-2zM5 -2h2v1h-2zM1 -1h1v3h-1zM3 -1h3v1h-3z"/><path id="g16" d="M0 -6h1v1h-1zM5 -6h1v1h-1zM1 -5h1v2h-1zM4 -5h1v2h-1zM2 -3h2v2h-2zM3 -1h1v1h-1zM2 0h1v1h-1zM1 1h2v1h-2z"/><path id="g17" d="M1 -9h5v1h-5zM1 -8h1v3h-1zM6 -8h1v2h-1zM5 -6h2v1h-2zM1 -5h4v1h-4zM1 -4h1v4h-1zM4 -4h2v1h-2zM5 -3h1v1h-1zM6 -2h1v2h-1z"/><path id="g18" d="M1 -9h1v1h-1zM1 -6h1v6h-1z"/><path id="g19" d="M2 -7h4v1h-4zM1 -6h1v2h-1zM5 -6h1v2h-1zM2 -4h3v1h-3zM1 -3h1v1h-1zM2 -2h4v1h-4zM1 -1h1v1h-1zM5 -1h1v1h-1zM1 0h4v1h-4z"/><path id="g20" d="M1 -9h1v4h-1zM3 -6h2v1h-2zM1 -5h2v1h-2zM5 -5h1v5h-1zM1 -4h1v4h-1z"/><path id="g21" d="M1 -8h1v2h-1zM0 -6h4v1h-4zM1 -5h1v4h-1zM1 -1h3v1h-3z"/><path id="g22" d="M1 -6h1v1h-1zM1 -1h1v1h-1z"/><path id="g23" d="M1 -10h1v2h-1zM3 -9h1v2h-1zM7 -9h1v1h-1zM10 -9h1v1h-1zM0 -8h1v5h-1zM6 -8h5v1h-5zM2 -7h4v1h-4zM7 -7h1v2h-1zM10 -7h1v2h-1zM3 -6h1v2h-1zM5 -6h1v1h-1zM5 -5h6v1h-6zM2 -4h3v1h-3zM7 -4h1v1h-1zM10 -4h1v2h-1zM0 -3h2v1h-2zM3 -3h1v3h-1zM6 -3h3v1h-3zM0 -2h1v1h-1zM5 -2h1v1h-1zM7 -2h1v2h-1zM9 -2h2v1h-2zM1 -1h1v2h-1zM10 -1h1v1h-1z"/><path id="g24" d="M2 -9h7v1h-7zM1 -6h9v1h-9zM5 -5h1v3h-1zM4 -2h1v1h-1zM2 -1h2v1h-2z"/><path id="g25" d="M4 -9h1v1h-1zM3 -8h6v1h-6zM3 -7h1v1h-1zM7 -7h1v3h-1zM2 -6h1v1h-1zM1 -5h1v1h-1zM6 -4h1v1h-1zM5 -3h1v1h-1zM4 -2h2v1h-2zM2 -1h2v1h-2z"/><path id="g26" d="M6 -9h1v3h-1zM5 -6h2v1h-2zM5 -5h1v1h-1zM4 -4h1v1h-1zM3 -3h2v1h-2zM2 -2h2v1h-2zM1 -1h1v1h-1z"/><path id="g27" d="M6 -9h1v2h-1zM1 -7h9v1h-9zM5 -6h2v1h-2zM4 -5h1v2h-1zM6 -5h1v4h-1zM2 -3h2v1h-2zM1 -2h1v1h-1zM4 -1h3v1h-3z"/><path id="g28" d="M8 -11h2v1h-2zM8 -10h1v1h-1zM1 -9h8v1h-8zM8 -8h1v1h-1zM7 -7h1v2h-1zM6 -5h1v1h-1zM5 -4h2v1h-2zM4 -3h2v1h-2zM2 -2h2v1h-2z"/><path id="g29" d="M9 -10h1v1h-1zM3 -9h1v1h-1zM8 -9h1v2h-1zM10 -9h1v1h-1zM3 -8h2v1h-2zM1 -7h1v1h-1zM1 -6h2v1h-2zM9 -6h1v1h-1zM8 -5h1v1h-1zM7 -4h1v1h-1zM5 -3h2v1h-2zM3 -2h3v1h-3zM2 -1h2v1h-2z"/><path id="g30" d="M2 -6h6v1h-6zM4 -5h1v3h-1zM1 -2h8v1h-8z"/><path id="g31" d="M1 -9h10v1h-10zM6 -8h1v4h-1zM2 -7h2v1h-2zM9 -7h1v2h-1zM3 -6h1v1h-1zM1 -4h10v1h-10zM6 -3h1v4h-1z"/><path id="g32" d="M3 -10h6v1h-6zM3 -9h1v3h-1zM8 -9h1v1h-1zM5 -8h4v1h-4zM5 -7h1v1h-1zM8 -7h1v1h-1zM1 -6h10v1h-10zM1 -5h1v1h-1zM3 -5h6v2h-6zM10 -5h1v1h-1zM3 -3h1v1h-1zM8 -3h1v1h-1zM3 -2h6v1h-6zM3 -1h1v2h-1zM8 -1h1v1h-1zM7 0h2v1h-2z"/><path id="g33" d="M3 -10h1v2h-1zM6 -9h4v1h-4zM1 -8h2v1h-2zM4 -8h1v1h-1zM6 -8h1v2h-1zM9 -8h1v2h-1zM2 -7h2v1h-2zM3 -6h2v1h-2zM6 -6h4v1h-4zM1 -5h6v1h-6zM9 -5h1v1h-1zM1 -4h1v4h-1zM3 -4h2v2h-2zM6 -4h4v1h-4zM6 -3h1v2h-1zM9 -3h1v2h-1zM3 -2h1v3h-1zM5 -1h6v1h-6z"/><path id="g34" d="M2 -9h1v8h-1zM4 -9h1v2h-1zM10 -9h1v1h-1zM9 -8h1v3h-1zM5 -7h1v2h-1zM5 -5h2v1h-2zM8 -5h1v2h-1zM6 -4h1v1h-1zM6 -3h3v1h-3zM7 -2h1v1h-1z"/><path id="g35" d="M3 -10h1v3h-1zM1 -9h1v2h-1zM6 -9h5v1h-5zM6 -8h1v2h-1zM1 -7h4v1h-4zM1 -6h1v2h-1zM6 -6h5v1h-5zM6 -5h2v2h-2zM9 -5h1v2h-1zM1 -4h4v1h-4zM1 -3h1v3h-1zM4 -3h1v2h-1zM6 -3h1v2h-1zM8 -3h2v1h-2zM8 -2h1v1h-1zM4 -1h2v2h-2zM8 -1h2v1h-2zM0 0h1v1h-1zM7 0h1v1h-1zM10 0h1v1h-1z"/><path id="g36" d="M1 -3h1v1h-1zM2 -2h1v2h-1z"/><path id="g37" d="M7 -10h1v2h-1zM1 -9h5v1h-5zM9 -9h1v1h-1zM2 -8h1v1h-1zM6 -8h5v1h-5zM2 -7h3v1h-3zM7 -7h1v1h-1zM2 -6h1v2h-1zM4 -6h1v2h-1zM6 -6h5v1h-5zM7 -5h1v1h-1zM1 -4h1v1h-1zM3 -4h8v1h-8zM3 -3h1v2h-1zM8 -3h1v1h-1zM10 -3h1v1h-1zM8 -2h2v1h-2zM2 -1h1v1h-1zM7 -1h3v1h-3zM11 -1h1v1h-1zM1 0h2v1h-2zM5 0h2v1h-2zM10 0h1v1h-1z"/><path id="g38" d="M2 -9h4v1h-4zM1 -8h2v1h-2zM6 -8h1v3h-1zM1 -7h1v1h-1zM4 -5h2v1h-2zM3 -4h1v1h-1zM2 -3h1v1h-1zM1 -2h1v1h-1zM1 -1h6v1h-6z"/><path id="g39" d="M1 -9h5v1h-5zM1 -8h1v2h-1zM1 -6h4v1h-4zM1 -5h1v1h-1zM4 -5h2v1h-2zM5 -4h1v2h-1zM0 -2h2v1h-2zM4 -2h2v1h-2zM1 -1h4v1h-4z"/><path id="g40" d="M2 -9h8v1h-8zM2 -8h1v3h-1zM9 -8h1v3h-1zM2 -5h8v1h-8zM2 -4h1v3h-1zM9 -4h1v3h-1zM2 -1h8v1h-8zM2 0h1v1h-1zM9 0h1v1h-1z"/><path id="g41" d="M1 -9h8v1h-8zM8 -8h1v1h-1zM7 -7h1v2h-1zM6 -5h2v1h-2zM5 -4h2v1h-2zM4 -3h2v1h-2zM2 -2h2v1h-2z"/><path id="g42" d="M1 -7h7v1h-7zM7 -6h1v1h-1zM4 -5h1v1h-1zM6 -5h1v1h-1zM4 -4h2v1h-2zM3 -3h1v2h-1zM2 -1h1v1h-1z"/><path id="g43" d="M7 -10h1v2h-1zM6 -8h1v1h-1zM4 -7h2v1h-2zM3 -6h3v1h-3zM1 -5h2v1h-2zM5 -5h1v5h-1z"/><path id="g44" d="M6 -9h1v7h-1zM3 -8h1v5h-1zM10 -5h1v2h-1zM2 -3h1v2h-1zM9 -3h1v1h-1zM6 -2h3v1h-3zM1 -1h1v1h-1zM6 -1h1v1h-1z"/><path id="g45" d="M2 -10h1v2h-1zM1 -8h1v6h-1zM2 -2h1v2h-1zM3 0h1v1h-1z"/><path id="g46" d="M1 -9h6v1h-6zM1 -8h1v3h-1zM1 -5h5v1h-5zM1 -4h1v4h-1z"/><path id="g47" d="M1 -10h1v2h-1zM2 -8h1v6h-1zM1 -2h1v2h-1zM0 0h1v1h-1z"/><path id="g48" d="M1 -9h3v1h-3zM6 -9h3v1h-3zM1 -8h4v1h-4zM6 -8h1v2h-1zM8 -8h1v2h-1zM10 -7h1v1h-1zM1 -6h3v2h-3zM5 -6h1v1h-1zM8 -6h3v1h-3zM5 -5h5v1h-5zM6 -4h1v2h-1zM9 -4h1v1h-1zM1 -3h4v1h-4zM8 -3h1v1h-1zM1 -2h1v1h-1zM4 -2h1v1h-1zM7 -2h1v1h-1zM1 -1h4v1h-4zM6 -1h1v1h-1zM8 -1h3v1h-3zM1 0h1v1h-1zM5 0h1v1h-1zM10 0h1v1h-1z"/><path id="g49" d="M6 -10h1v2h-1zM1 -8h10v1h-10zM1 -7h1v1h-1zM10 -7h1v1h-1zM3 -6h6v1h-6zM6 -5h1v1h-1zM3 -4h1v2h-1zM6 -4h4v1h-4zM6 -3h1v2h-1zM2 -2h1v1h-1zM4 -2h1v1h-1zM1 -1h2v1h-2zM5 -1h7v1h-7zM1 0h1v1h-1z"/><path id="g50" d="M0 -9h7v1h-7zM3 -8h1v8h-1z"/><path id="g51" d="M1 -10h1v2h-1zM4 -10h7v1h-7zM6 -9h1v1h-1zM10 -9h1v1h-1zM2 -8h1v1h-1zM4 -8h7v1h-7zM4 -7h1v1h-1zM7 -7h1v1h-1zM5 -6h2v1h-2zM8 -6h3v1h-3zM1 -5h2v1h-2zM4 -5h7v1h-7zM2 -4h1v1h-1zM6 -4h1v1h-1zM8 -4h1v1h-1zM2 -3h9v1h-9zM2 -2h1v2h-1zM6 -2h3v1h-3zM4 -1h2v1h-2zM9 -1h2v1h-2zM1 0h1v1h-1zM3 0h8v1h-8z"/><path id="g52" d="M2 -10h1v2h-1zM5 -9h6v1h-6zM1 -8h5v1h-5zM10 -8h1v2h-1zM2 -7h1v2h-1zM5 -7h1v1h-1zM5 -6h6v1h-6zM2 -5h4v1h-4zM8 -5h1v2h-1zM1 -4h2v1h-2zM5 -4h1v3h-1zM2 -3h1v3h-1zM9 -3h1v2h-1zM4 -1h1v1h-1zM10 -1h2v1h-2zM1 0h2v1h-2z"/><path id="g53" d="M2 -9h3v1h-3zM1 -8h1v2h-1zM5 -8h1v1h-1zM1 -6h2v1h-2zM3 -5h2v1h-2zM4 -4h2v1h-2zM5 -3h1v2h-1zM1 -2h1v1h-1zM2 -1h3v1h-3z"/><path id="g54" d="M1 -9h10v1h-10zM5 -8h1v1h-1zM2 -7h8v2h-8zM2 -5h1v1h-1zM9 -5h1v1h-1zM2 -4h8v1h-8zM2 -3h1v1h-1zM9 -3h1v1h-1zM2 -2h8v1h-8zM3 -1h2v1h-2zM7 -1h2v1h-2zM1 0h2v1h-2zM9 0h2v1h-2z"/><path id="g55" d="M2 -5h2v1h-2z"/><path id="g56" d="M3 -9h1v1h-1zM5 -9h6v1h-6zM2 -8h1v1h-1zM1 -7h1v1h-1zM3 -6h8v1h-8zM2 -5h2v1h-2zM8 -5h1v5h-1zM1 -4h3v1h-3zM3 -3h1v4h-1zM6 0h3v1h-3z"/><path id="g57" d="M1 -9h5v1h-5zM1 -8h1v4h-1zM5 -8h2v1h-2zM6 -7h1v2h-1zM5 -5h2v1h-2zM1 -4h5v1h-5zM1 -3h1v3h-1z"/><path id="g58" d="M2 -10h1v2h-1zM5 -9h6v2h-6zM1 -8h1v1h-1zM3 -8h1v1h-1zM1 -7h3v1h-3zM5 -7h1v1h-1zM10 -7h1v1h-1zM2 -6h2v1h-2zM5 -6h6v1h-6zM0 -5h3v1h-3zM4 -5h7v1h-7zM2 -4h2v1h-2zM5 -4h4v1h-4zM10 -4h1v1h-1zM0 -3h1v3h-1zM2 -3h1v4h-1zM4 -3h7v1h-7zM5 -2h4v1h-4zM10 -2h1v3h-1zM4 -1h1v2h-1zM6 -1h3v2h-3z"/><path id="g59" d="M3 -11h1v1h-1zM6 -11h1v1h-1zM2 -10h9v1h-9zM2 -9h1v1h-1zM6 -9h1v1h-1zM1 -8h9v1h-9zM2 -7h8v1h-8zM2 -6h9v1h-9zM6 -5h1v1h-1zM1 -4h10v1h-10zM5 -3h3v1h-3zM3 -2h2v1h-2zM6 -2h1v2h-1zM8 -2h2v1h-2zM1 -1h2v1h-2zM10 -1h1v1h-1z"/><path id="g60" d="M1 -9h6v1h-6zM1 -8h1v3h-1zM1 -5h5v1h-5zM1 -4h1v3h-1zM1 -1h6v1h-6z"/><path id="g61" d="M8 -10h1v1h-1zM10 -10h1v1h-1zM2 -9h6v1h-6zM9 -9h1v1h-1zM1 -6h9v1h-9zM5 -5h1v2h-1zM4 -3h2v1h-2zM4 -2h1v1h-1zM2 -1h2v1h-2z"/><path id="g62" d="M1 -5h10v1h-10z"/><path id="g63" d="M4 -10h1v1h-1zM3 -9h6v1h-6zM3 -8h1v1h-1zM8 -8h1v1h-1zM2 -7h2v1h-2zM7 -7h1v2h-1zM1 -6h2v1h-2zM4 -6h1v1h-1zM1 -5h1v1h-1zM5 -5h2v2h-2zM4 -3h2v1h-2zM3 -2h2v1h-2zM2 -1h1v1h-1z"/><path id="g64" d="M1 -9h5v1h-5zM1 -8h1v7h-1zM6 -8h1v1h-1zM7 -7h1v5h-1zM6 -2h1v1h-1zM1 -1h5v1h-5z"/><path id="g65" d="M1 -9h1v9h-1z"/><path id="g66" d="M1 -9h1v1h-1zM6 -9h1v2h-1zM1 -8h2v1h-2zM2 -7h1v1h-1zM5 -7h1v1h-1zM3 -6h2v3h-2zM2 -3h1v1h-1zM5 -3h1v1h-1zM1 -2h2v1h-2zM6 -2h1v1h-1zM1 -1h1v1h-1zM6 -1h2v1h-2z"/><path id="g67" d="M3 -11h1v2h-1zM8 -11h1v2h-1zM1 -9h2v1h-2zM4 -9h7v1h-7zM2 -8h2v1h-2zM8 -8h1v1h-1zM2 -7h1v1h-1zM4 -7h7v1h-7zM1 -6h4v1h-4zM3 -5h2v2h-2zM6 -5h5v1h-5zM1 -4h1v3h-1zM6 -4h1v2h-1zM10 -4h1v2h-1zM3 -3h1v3h-1zM6 -2h5v1h-5zM6 -1h1v1h-1zM10 -1h1v1h-1z"/><path id="g68" d="M2 -9h8v1h-8zM2 -8h1v1h-1zM6 -8h1v1h-1zM9 -8h1v1h-1zM2 -7h8v2h-8zM6 -5h1v1h-1zM1 -4h10v1h-10zM5 -3h3v1h-3zM4 -2h1v1h-1zM6 -2h1v3h-1zM8 -2h1v1h-1zM2 -1h2v1h-2zM9 -1h2v1h-2zM1 0h1v1h-1z"/><path id="g69" d="M6 -10h1v1h-1zM2 -9h8v1h-8zM1 -8h10v1h-10zM2 -7h8v1h-8zM6 -6h1v1h-1zM2 -5h9v1h-9zM1 -4h10v1h-10zM2 -3h8v3h-8zM2 0h1v1h-1zM9 0h1v1h-1z"/><path id="g70" d="M2 -10h1v1h-1zM5 -10h3v1h-3zM3 -9h1v1h-1zM7 -9h1v3h-1zM1 -6h3v1h-3zM6 -6h1v2h-1zM8 -6h1v2h-1zM3 -5h1v3h-1zM5 -4h1v2h-1zM9 -4h1v1h-1zM10 -3h1v1h-1zM2 -2h1v1h-1zM4 -2h1v1h-1zM1 -1h1v1h-1zM5 -1h6v1h-6z"/><path id="g71" d="M0 -9h1v1h-1zM5 -9h1v2h-1zM10 -9h1v2h-1zM1 -8h1v3h-1zM4 -7h1v4h-1zM6 -7h1v3h-1zM9 -7h1v3h-1zM1 -5h2v1h-2zM2 -4h1v1h-1zM7 -4h2v4h-2zM2 -3h2v2h-2zM3 -1h1v1h-1z"/><path id="g72" d="M5 -10h1v1h-1zM1 -9h4v1h-4zM6 -9h5v1h-5zM1 -8h1v2h-1zM6 -8h1v2h-1zM10 -8h1v6h-1zM1 -6h6v1h-6zM1 -5h1v3h-1zM6 -5h1v3h-1zM1 -2h6v1h-6zM8 -2h3v1h-3zM1 -1h1v1h-1zM6 -1h1v2h-1z"/><path id="g73" d="M9 -10h1v10h-1zM0 -9h6v1h-6zM7 -9h1v7h-1zM0 -8h1v1h-1zM5 -8h1v1h-1zM0 -7h6v1h-6zM0 -6h1v1h-1zM3 -6h1v1h-1zM0 -5h6v1h-6zM0 -4h2v2h-2zM3 -4h1v3h-1zM5 -4h1v3h-1zM-1 -2h1v2h-1zM1 -2h1v2h-1zM3 -1h3v1h-3zM3 0h1v1h-1zM7 0h3v1h-3z"/><path id="g74" d="M3 -10h1v2h-1zM6 -10h1v2h-1zM2 -8h1v2h-1zM5 -8h6v1h-6zM5 -7h1v2h-1zM7 -7h1v2h-1zM1 -6h2v2h-2zM4 -5h1v1h-1zM7 -5h4v1h-4zM2 -4h1v5h-1zM7 -4h1v1h-1zM7 -3h4v1h-4zM7 -2h1v3h-1z"/><path id="g75" d="M1 -9h10v1h-10zM6 -8h1v1h-1zM1 -7h1v6h-1zM3 -7h6v1h-6zM10 -7h1v6h-1zM3 -6h1v1h-1zM6 -6h1v1h-1zM8 -6h1v1h-1zM3 -5h6v1h-6zM3 -4h1v1h-1zM6 -4h1v1h-1zM8 -4h1v1h-1zM3 -3h6v1h-6zM1 -1h10v1h-10zM1 0h1v1h-1zM10 0h1v1h-1z"/><path id="g76" d="M1 -9h3v2h-3zM5 -9h6v1h-6zM5 -8h1v1h-1zM7 -8h1v1h-1zM10 -8h1v1h-1zM5 -7h6v2h-6zM1 -6h3v2h-3zM5 -5h1v1h-1zM10 -5h1v1h-1zM5 -4h6v1h-6zM1 -3h3v1h-3zM5 -3h2v1h-2zM9 -3h2v1h-2zM1 -2h1v1h-1zM3 -2h1v1h-1zM5 -2h6v1h-6zM1 -1h5v1h-5zM10 -1h1v1h-1zM1 0h1v1h-1zM4 0h1v1h-1zM9 0h2v1h-2z"/><path id="g77" d="M3 -11h1v1h-1zM8 -11h1v1h-1zM1 -10h5v2h-5zM7 -10h4v1h-4zM7 -9h1v1h-1zM9 -9h1v1h-1zM1 -8h1v1h-1zM3 -8h1v1h-1zM5 -8h5v1h-5zM1 -7h5v1h-5zM8 -7h2v1h-2zM3 -6h1v1h-1zM5 -6h1v1h-1zM7 -6h2v1h-2zM10 -6h1v1h-1zM1 -4h10v1h-10zM3 -3h1v2h-1zM6 -3h4v1h-4zM6 -2h1v1h-1zM1 -1h10v1h-10z"/><path id="g78" d="M2 -9h1v1h-1zM2 -8h2v1h-2zM1 -7h1v3h-1zM3 -7h1v1h-1zM4 -6h1v2h-1zM0 -4h5v1h-5zM0 -3h1v2h-1zM5 -3h1v3h-1zM-1 -1h1v1h-1z"/><path id="g79" d="M2 -6h2v2h-2zM5 -6h2v2h-2zM1 -4h7v1h-7zM2 -3h2v1h-2zM5 -3h2v2h-2zM3 -1h3v1h-3z"/><path id="g80" d="M1 -3h7v1h-7z"/><path id="g81" d="M2 -7h5v1h-5zM4 -6h2v1h-2zM1 -5h7v1h-7zM4 -4h2v2h-2zM2 -2h3v1h-3z"/><path id="g82" d="M8 -9h3v2h-3zM2 -7h9v1h-9zM7 -6h2v3h-2zM6 -3h2v1h-2zM5 -2h2v1h-2zM3 -1h3v1h-3z"/><path id="g83" d="M6 -8h2v7h-2zM3 -7h2v4h-2zM5 -1h2v1h-2z"/><path id="g84" d="M2 -8h2v1h-2zM3 -7h2v1h-2zM8 -7h2v1h-2zM7 -6h2v2h-2zM5 -4h3v1h-3zM4 -3h2v1h-2zM2 -2h3v1h-3z"/><path id="g85" d="M4 -9h2v1h-2zM4 -8h5v1h-5zM3 -7h2v1h-2zM7 -7h2v2h-2zM2 -6h4v1h-4zM1 -5h2v1h-2zM5 -5h3v1h-3zM5 -4h2v1h-2zM4 -3h3v1h-3zM3 -2h2v1h-2z"/><path id="g86" d="M5 -9h2v1h-2zM4 -8h4v1h-4zM3 -7h6v1h-6zM2 -6h8v1h-8zM1 -5h10v1h-10zM2 -4h8v1h-8zM3 -3h6v1h-6zM4 -2h4v1h-4zM5 -1h2v1h-2z"/><path id="g87" d="M2 -9h8v3h-8zM1 -5h10v1h-10zM2 -4h9v1h-9zM2 -3h4v1h-4zM7 -3h1v1h-1zM9 -3h1v1h-1zM2 -2h1v1h-1zM5 -2h1v1h-1zM8 -2h2v2h-2zM1 -1h5v1h-5zM5 0h3v1h-3zM10 0h1v1h-1z"/><path id="g88" d="M5 -10h1v3h-1zM1 -7h10v1h-10zM5 -6h1v1h-1zM5 -5h2v1h-2zM4 -4h1v2h-1zM6 -4h1v1h-1zM7 -3h1v1h-1zM3 -2h1v1h-1zM8 -2h2v1h-2zM2 -1h1v1h-1zM9 -1h2v1h-2z"/><path id="g89" d="M3 -10h1v2h-1zM5 -10h1v1h-1zM7 -10h1v2h-1zM1 -9h1v1h-1zM1 -8h5v1h-5zM7 -8h4v1h-4zM2 -7h3v1h-3zM6 -7h1v1h-1zM9 -7h1v3h-1zM1 -6h1v1h-1zM3 -6h1v1h-1zM5 -6h2v1h-2zM2 -5h1v1h-1zM7 -5h1v1h-1zM1 -4h5v1h-5zM7 -4h2v1h-2zM2 -3h1v1h-1zM4 -3h1v1h-1zM8 -3h1v1h-1zM2 -2h3v1h-3zM7 -2h3v1h-3zM3 -1h5v1h-5zM9 -1h2v1h-2zM1 0h2v1h-2zM10 0h1v1h-1z"/><path id="g90" d="M1 -9h2v1h-2zM1 -8h1v9h-1zM1 1h2v1h-2z"/><path id="g91" d="M0 -9h2v1h-2zM1 -8h1v9h-1zM0 1h2v1h-2z"/><path id="g92" d="M5 -9h1v3h-1zM1 -6h5v1h-5zM0 -5h2v1h-2zM5 -5h1v3h-1zM0 -4h1v2h-1zM0 -2h2v1h-2zM4 -2h2v1h-2zM1 -1h3v1h-3zM5 -1h1v1h-1z"/><path id="g93" d="M1 -6h4v1h-4zM6 -6h2v1h-2zM1 -5h1v5h-1zM5 -5h1v5h-1zM8 -5h1v5h-1z"/><path id="g94" d="M3 -9h3v1h-3zM2 -8h1v1h-1zM1 -7h1v2h-1zM3 -6h3v1h-3zM1 -5h2v1h-2zM5 -5h2v1h-2zM1 -4h1v2h-1zM6 -4h1v2h-1zM2 -2h1v1h-1zM5 -2h2v1h-2zM2 -1h4v1h-4z"/><path id="g95" d="M1 -5h6v1h-6zM1 -3h6v1h-6z"/><path id="g96" d="M3 -11h1v1h-1zM7 -11h1v1h-1zM2 -10h1v1h-1zM6 -10h1v1h-1zM9 -10h1v1h-1zM1 -9h1v1h-1zM3 -9h1v2h-1zM5 -9h1v1h-1zM8 -9h1v1h-1zM6 -8h2v1h-2zM9 -8h1v1h-1zM2 -7h1v1h-1zM4 -7h7v1h-7zM1 -6h2v1h-2zM6 -6h1v1h-1zM10 -6h1v1h-1zM0 -5h1v1h-1zM2 -5h1v5h-1zM5 -5h5v1h-5zM5 -4h2v1h-2zM9 -4h1v1h-1zM4 -3h1v1h-1zM7 -3h2v1h-2zM6 -2h3v1h-3zM4 -1h2v1h-2zM9 -1h2v1h-2z"/><path id="g97" d="M2 -10h1v2h-1zM5 -10h1v2h-1zM7 -9h4v1h-4zM1 -8h6v1h-6zM11 -8h1v2h-1zM2 -7h1v3h-1zM5 -7h1v1h-1zM5 -6h6v1h-6zM2 -4h9v1h-9zM2 -3h1v3h-1zM5 -3h6v1h-6zM5 -2h1v1h-1zM10 -2h1v1h-1zM5 -1h6v1h-6zM1 0h2v1h-2zM5 0h1v1h-1zM10 0h1v1h-1z"/><path id="g98" d="M2 -10h1v1h-1zM5 -10h5v1h-5zM2 -9h2v1h-2zM5 -9h1v1h-1zM9 -9h1v1h-1zM3 -8h1v1h-1zM5 -8h5v2h-5zM1 -6h3v1h-3zM5 -6h1v3h-1zM10 -6h1v1h-1zM3 -5h1v3h-1zM7 -5h1v1h-1zM9 -5h1v1h-1zM8 -4h2v1h-2zM5 -3h3v1h-3zM10 -3h1v1h-1zM2 -2h1v1h-1zM4 -2h1v1h-1zM1 -1h1v1h-1zM5 -1h6v1h-6z"/><path id="g99" d="M9 -10h1v1h-1zM1 -9h1v1h-1zM4 -9h7v1h-7zM2 -8h1v1h-1zM4 -8h1v1h-1zM6 -8h1v1h-1zM8 -8h1v2h-1zM10 -8h1v2h-1zM4 -7h3v1h-3zM4 -6h1v1h-1zM7 -6h4v1h-4zM1 -5h2v1h-2zM4 -5h3v1h-3zM9 -5h1v1h-1zM2 -4h1v1h-1zM4 -4h1v1h-1zM6 -4h5v1h-5zM2 -3h3v1h-3zM6 -3h1v1h-1zM9 -3h1v2h-1zM2 -2h1v1h-1zM4 -2h3v1h-3zM1 -1h1v1h-1zM3 -1h8v1h-8z"/><path id="g100" d="M4 -10h1v2h-1zM1 -8h5v1h-5zM8 -8h1v1h-1zM3 -7h1v2h-1zM9 -7h1v1h-1zM7 -6h1v3h-1zM2 -5h1v2h-1zM1 -3h1v1h-1zM4 -3h4v1h-4zM4 -2h1v1h-1zM7 -2h3v1h-3zM5 -1h3v1h-3z"/><path id="g101" d="M2 -9h1v9h-1zM8 -3h1v1h-1zM7 -2h1v1h-1zM6 -1h1v1h-1zM3 0h3v1h-3z"/><path id="g102" d="M4 -15h2v1h-2zM4 -14h1v1h-1zM11 -14h5v1h-5zM3 -13h2v1h-2zM6 -13h6v1h-6zM3 -12h1v2h-1zM11 -12h1v4h-1zM2 -10h2v1h-2zM1 -9h3v1h-3zM1 -8h1v2h-1zM3 -8h1v8h-1zM5 -8h12v1h-12zM11 -7h1v6h-1zM6 -1h11v1h-11z"/><path id="g103" d="M8 -15h1v2h-1zM2 -13h14v1h-14zM6 -12h1v1h-1zM11 -12h1v1h-1zM1 -11h16v1h-16zM4 -9h10v1h-10zM4 -8h1v1h-1zM13 -8h1v1h-1zM4 -7h10v1h-10zM4 -6h1v1h-1zM13 -6h1v1h-1zM4 -5h10v1h-10zM8 -4h1v1h-1zM3 -3h1v2h-1zM6 -3h1v3h-1zM8 -3h2v1h-2zM13 -3h2v1h-2zM9 -2h1v1h-1zM12 -2h1v2h-1zM14 -2h2v1h-2zM2 -1h2v1h-2zM15 -1h2v1h-2zM1 0h2v1h-2zM6 0h7v1h-7zM16 0h1v1h-1z"/><path id="g104" d="M1 -14h1v1h-1zM5 -14h1v4h-1zM10 -14h6v1h-6zM1 -13h3v1h-3zM7 -13h2v2h-2zM10 -13h2v1h-2zM1 -12h1v3h-1zM3 -12h1v3h-1zM10 -12h1v3h-1zM7 -11h1v1h-1zM5 -10h3v1h-3zM1 -9h8v1h-8zM10 -9h7v1h-7zM1 -8h1v4h-1zM5 -8h1v1h-1zM10 -8h1v6h-1zM14 -8h1v9h-1zM4 -7h3v1h-3zM4 -6h2v1h-2zM7 -6h1v1h-1zM3 -5h1v1h-1zM5 -5h1v3h-1zM7 -5h2v1h-2zM1 -4h3v1h-3zM1 -3h1v2h-1zM9 -2h1v1h-1zM1 -1h9v1h-9zM1 0h1v1h-1zM9 0h1v1h-1z"/><path id="g105" d="M1 -14h16v1h-16zM8 -13h2v1h-2zM8 -12h1v1h-1zM7 -11h2v1h-2zM2 -10h14v1h-14zM2 -9h1v8h-1zM6 -9h1v2h-1zM11 -9h1v2h-1zM15 -9h1v8h-1zM6 -7h6v1h-6zM6 -6h1v2h-1zM11 -6h1v2h-1zM6 -4h6v1h-6zM6 -3h1v2h-1zM11 -3h1v2h-1zM2 -1h14v1h-14zM2 0h1v1h-1zM15 0h1v1h-1z"/><path id="g106" d="M6 -14h5v1h-5zM5 -13h2v1h-2zM10 -13h2v1h-2zM4 -12h2v1h-2zM11 -12h2v3h-2zM10 -9h2v1h-2zM7 -8h4v1h-4zM10 -7h2v1h-2zM11 -6h2v3h-2zM4 -4h2v1h-2zM5 -3h1v1h-1zM10 -3h2v1h-2zM6 -2h5v1h-5z"/><path id="g107" d="M6 -15h1v1h-1zM5 -14h1v1h-1zM4 -13h2v1h-2zM4 -12h1v2h-1zM3 -10h1v6h-1zM4 -4h1v2h-1zM4 -2h2v1h-2zM5 -1h1v1h-1zM6 0h1v1h-1z"/><path id="g108" d="M1 -8h16v1h-16z"/><path id="g109" d="M3 -15h1v2h-1zM10 -15h1v2h-1zM2 -13h15v1h-15zM1 -12h2v1h-2zM5 -12h1v1h-1zM8 -12h2v1h-2zM13 -12h1v1h-1zM1 -11h1v1h-1zM8 -11h1v1h-1zM3 -10h12v1h-12zM8 -9h1v1h-1zM14 -9h1v1h-1zM1 -8h16v1h-16zM8 -7h1v1h-1zM14 -7h1v1h-1zM3 -6h12v1h-12zM8 -5h1v1h-1zM2 -4h14v1h-14zM8 -3h1v1h-1zM1 -2h16v1h-16zM8 -1h1v2h-1z"/><path id="g110" d="M8 -15h1v1h-1zM3 -14h12v1h-12zM8 -13h1v1h-1zM14 -13h1v1h-1zM1 -12h16v1h-16zM8 -11h1v1h-1zM14 -11h1v1h-1zM3 -10h12v1h-12zM8 -9h1v1h-1zM2 -8h14v1h-14zM8 -7h1v1h-1zM1 -6h16v1h-16zM3 -4h12v1h-12zM3 -3h1v1h-1zM14 -3h1v1h-1zM3 -2h12v1h-12zM3 -1h1v1h-1zM14 -1h1v1h-1zM3 0h12v1h-12z"/><path id="g111" d="M7 -15h1v1h-1zM7 -14h2v1h-2zM11 -14h2v1h-2zM5 -13h7v1h-7zM3 -12h4v1h-4zM8 -12h2v1h-2zM9 -11h1v1h-1zM11 -11h4v1h-4zM6 -10h6v1h-6zM3 -9h5v1h-5zM10 -9h2v1h-2zM11 -8h1v1h-1zM9 -7h1v1h-1zM11 -7h2v1h-2zM10 -6h4v1h-4zM4 -5h1v2h-1zM12 -5h1v1h-1zM5 -3h2v1h-2zM7 -2h5v1h-5z"/><path id="g112" d="M2 -15h1v1h-1zM3 -14h1v1h-1zM3 -13h2v1h-2zM4 -12h1v2h-1zM5 -10h1v6h-1zM4 -4h1v2h-1zM3 -2h2v1h-2zM3 -1h1v1h-1zM2 0h1v1h-1z"/><path id="g113" d="M1 -10h1v1h-1zM5 -10h1v6h-1zM1 -9h2v2h-2zM1 -7h1v6h-1zM3 -7h1v3h-1zM4 -4h2v2h-2zM5 -2h1v1h-1z"/><path id="g114" d="M2 -7h3v1h-3zM1 -6h1v4h-1zM5 -6h1v4h-1zM2 -2h3v1h-3z"/><path id="g115" d="M3 -9h1v2h-1zM1 -7h4v1h-4zM3 -6h1v4h-1zM3 -2h2v1h-2z"/><path id="g116" d="M1 -7h1v2h-1zM5 -7h1v1h-1zM4 -6h1v3h-1zM2 -5h1v2h-1zM2 -3h2v1h-2zM3 -2h1v1h-1zM2 -1h1v1h-1zM1 0h2v1h-2z"/><path id="g117" d="M1 -7h4v1h-4zM1 -6h2v1h-2zM5 -6h1v4h-1zM1 -5h1v3h-1zM1 -2h4v1h-4zM1 -1h1v2h-1z"/><path id="g118" d="M2 -7h3v1h-3zM1 -6h1v2h-1zM4 -6h1v1h-1zM5 -5h1v1h-1zM1 -4h5v1h-5zM1 -3h1v1h-1zM4 -3h2v1h-2zM2 -2h3v1h-3z"/><path id="g119" d="M1 -10h1v2h-1zM5 -10h1v2h-1zM2 -8h1v2h-1zM4 -8h1v2h-1zM3 -6h1v5h-1z"/><path id="g120" d="M5 -10h1v1h-1zM4 -9h1v2h-1zM3 -7h1v2h-1zM2 -5h1v2h-1zM1 -3h1v2h-1zM0 -1h1v2h-1z"/><path id="g121" d="M2 -7h3v1h-3zM1 -6h1v4h-1zM4 -6h1v1h-1zM4 -3h2v1h-2zM2 -2h3v1h-3z"/><path id="g122" d="M1 -10h5v1h-5zM4 -9h2v1h-2zM4 -8h1v1h-1zM3 -7h2v1h-2zM3 -6h1v1h-1zM2 -5h1v2h-1zM1 -3h1v1h-1zM1 -2h5v1h-5z"/><path id="g123" d="M1 -5h5v1h-5z"/><path id="g124" d="M1 -10h4v1h-4zM1 -9h1v3h-1zM5 -9h1v3h-1zM1 -6h4v1h-4zM1 -5h1v4h-1zM3 -5h2v1h-2zM4 -4h1v2h-1zM5 -2h1v1h-1z"/><path id="g125" d="M6 -10h3v1h-3zM5 -9h1v1h-1zM9 -9h1v3h-1zM4 -8h1v2h-1zM3 -6h7v1h-7zM3 -5h1v3h-1zM8 -5h2v2h-2zM8 -3h1v1h-1zM3 -2h2v1h-2zM7 -2h1v1h-1zM4 -1h3v1h-3z"/><path id="g126" d="M3 -10h1v1h-1zM2 -9h2v1h-2zM3 -8h1v7h-1z"/><path id="g127" d="M2 -10h3v1h-3zM1 -9h1v2h-1zM5 -9h1v3h-1zM4 -6h1v1h-1zM2 -5h2v1h-2zM2 -4h1v1h-1zM1 -3h1v1h-1zM1 -2h5v1h-5z"/><path id="g128" d="M6 -12h1v1h-1zM5 -11h1v1h-1zM1 -10h11v1h-11zM1 -9h1v9h-1zM11 -9h1v8h-1zM4 -7h5v1h-5zM4 -6h1v2h-1zM8 -6h1v2h-1zM4 -4h5v1h-5zM4 -3h1v1h-1zM8 -1h4v1h-4z"/><path id="g129" d="M3 -10h2v1h-2zM2 -9h3v1h-3zM4 -8h1v8h-1z"/><path id="g130" d="M4 -10h2v2h-2zM3 -8h1v1h-1zM5 -8h1v5h-1zM2 -7h2v1h-2zM2 -6h1v1h-1zM1 -5h1v1h-1zM0 -4h2v1h-2zM0 -3h8v1h-8zM5 -2h1v2h-1z"/><path id="g131" d="M1 -1h1v1h-1z"/><path id="g132" d="M2 -9h5v1h-5zM2 -8h1v2h-1zM1 -6h1v1h-1zM3 -6h3v1h-3zM1 -5h2v1h-2zM5 -5h2v1h-2zM6 -4h1v2h-1zM1 -2h1v1h-1zM5 -2h2v1h-2zM2 -1h4v1h-4z"/><path id="g133" d="M3 -9h3v1h-3zM2 -8h1v1h-1zM6 -8h1v1h-1zM1 -7h1v5h-1zM7 -7h1v5h-1zM2 -2h1v1h-1zM6 -2h1v1h-1zM3 -1h3v1h-3z"/><path id="g134" d="M2 -9h4v1h-4zM1 -8h2v1h-2zM6 -8h1v2h-1zM5 -6h2v1h-2zM3 -5h2v1h-2zM5 -4h2v1h-2zM6 -3h1v2h-1zM1 -2h1v1h-1zM2 -1h4v1h-4z"/><path id="g135" d="M2 -9h4v1h-4zM1 -8h1v1h-1zM6 -8h1v2h-1zM5 -6h1v1h-1zM4 -5h1v1h-1zM3 -4h1v1h-1zM2 -3h1v1h-1zM1 -2h1v1h-1zM1 -1h6v1h-6z"/><path id="g136" d="M1 -9h6v1h-6zM5 -8h2v1h-2zM5 -7h1v1h-1zM4 -6h1v3h-1zM3 -3h1v2h-1zM2 -1h2v1h-2z"/><path id="g137" d="M1 -10h3v1h-3zM1 -9h1v1h-1zM4 -9h1v3h-1zM2 -6h2v1h-2zM4 -5h2v1h-2zM5 -4h1v2h-1zM0 -3h2v1h-2zM1 -2h4v1h-4z"/><path id="g138" d="M1 -4h3v1h-3z"/><path id="g139" d="M2 -9h4v1h-4zM1 -8h2v1h-2zM5 -8h1v1h-1zM1 -7h1v2h-1zM6 -7h1v2h-1zM1 -5h2v1h-2zM5 -5h2v1h-2zM2 -4h3v1h-3zM6 -4h1v2h-1zM1 -2h1v1h-1zM5 -2h1v1h-1zM2 -1h3v1h-3z"/><path id="g140" d="M2 -9h4v1h-4zM1 -8h1v2h-1zM6 -8h1v2h-1zM1 -6h2v1h-2zM5 -6h1v1h-1zM3 -5h3v1h-3zM1 -4h2v1h-2zM6 -4h2v1h-2zM1 -3h1v1h-1zM7 -3h1v1h-1zM1 -2h2v1h-2zM6 -2h2v1h-2zM2 -1h5v1h-5z"/><path id="g141" d="M4 -10h1v1h-1zM3 -9h2v1h-2zM2 -8h1v2h-1zM4 -8h1v4h-1zM1 -6h1v1h-1zM0 -5h1v1h-1zM0 -4h6v1h-6zM4 -3h1v2h-1z"/><path id="g142" d="M1 -10h4v1h-4zM1 -9h1v2h-1zM0 -7h1v1h-1zM2 -7h2v1h-2zM0 -6h2v1h-2zM4 -6h1v4h-1zM0 -3h1v1h-1zM1 -2h3v1h-3z"/><path id="g143" d="M2 -10h3v1h-3zM1 -9h1v2h-1zM5 -9h1v1h-1zM1 -7h4v1h-4zM1 -6h1v4h-1zM5 -6h1v4h-1zM2 -2h3v1h-3z"/><path id="g144" d="M1 -10h5v1h-5zM5 -9h1v1h-1zM4 -8h1v3h-1zM3 -5h1v3h-1zM2 -2h1v1h-1z"/><path id="g145" d="M2 -10h3v1h-3zM1 -9h1v3h-1zM5 -9h1v2h-1zM4 -7h1v1h-1zM1 -6h4v1h-4zM0 -5h1v3h-1zM5 -5h1v3h-1zM1 -2h4v1h-4z"/><path id="g146" d="M2 -10h3v1h-3zM1 -9h1v4h-1zM5 -9h1v4h-1zM2 -5h4v1h-4zM5 -4h1v1h-1zM1 -3h1v1h-1zM4 -3h1v1h-1zM2 -2h3v1h-3z"/><path id="g147" d="M2 -10h3v1h-3zM1 -9h2v1h-2zM4 -9h2v1h-2zM1 -8h1v3h-1zM3 -8h1v3h-1zM5 -8h1v5h-1zM1 -5h2v2h-2zM1 -3h1v1h-1zM4 -3h2v1h-2zM2 -2h3v1h-3z"/><path id="g148" d="M6 -10h1v2h-1zM3 -9h1v1h-1zM3 -8h7v1h-7zM2 -7h1v2h-1zM6 -7h1v2h-1zM1 -5h10v1h-10zM4 -4h1v3h-1zM7 -4h1v4h-1zM10 -2h1v2h-1zM3 -1h1v1h-1zM1 0h2v1h-2zM7 0h4v1h-4z"/><path id="g149" d="M1 -9h4v1h-4zM6 -9h5v1h-5zM8 -8h1v1h-1zM1 -7h4v1h-4zM6 -7h5v2h-5zM1 -6h1v1h-1zM4 -6h1v1h-1zM1 -5h4v1h-4zM6 -5h1v1h-1zM10 -5h1v1h-1zM6 -4h5v1h-5zM1 -3h1v1h-1zM3 -3h1v1h-1zM6 -3h1v1h-1zM10 -3h1v1h-1zM2 -2h2v1h-2zM6 -2h5v1h-5zM3 -1h3v1h-3zM7 -1h1v1h-1zM9 -1h1v1h-1zM1 0h2v1h-2zM5 0h2v1h-2zM10 0h1v1h-1z"/><path id="g150" d="M9 -10h1v1h-1zM11 -10h1v1h-1zM3 -9h6v1h-6zM10 -9h1v1h-1zM1 -6h10v1h-10zM6 -5h1v2h-1zM5 -3h2v1h-2zM5 -2h1v1h-1zM3 -1h2v1h-2z"/><path id="g151" d="M1 -5h10v1h-10z"/><path id="g152" d="M5 -10h1v1h-1zM4 -9h6v1h-6zM4 -8h1v1h-1zM9 -8h1v1h-1zM3 -7h2v1h-2zM8 -7h1v2h-1zM2 -6h1v1h-1zM5 -6h1v1h-1zM6 -5h2v2h-2zM5 -3h2v1h-2zM4 -2h1v1h-1zM3 -1h1v1h-1z"/><path id="g153" d="M1 -10h1v2h-1zM4 -10h7v1h-7zM6 -9h1v1h-1zM10 -9h1v1h-1zM2 -8h1v1h-1zM4 -8h7v1h-7zM4 -7h1v1h-1zM7 -7h1v1h-1zM5 -6h2v1h-2zM8 -6h3v1h-3zM1 -5h2v1h-2zM4 -5h7v1h-7zM2 -4h1v1h-1zM6 -4h1v1h-1zM8 -4h1v1h-1zM2 -3h9v1h-9zM2 -2h1v2h-1zM6 -2h3v1h-3zM4 -1h2v1h-2zM9 -1h2v1h-2zM1 0h1v1h-1zM3 0h8v1h-8z"/><path id="g154" d="M2 -10h1v2h-1zM5 -9h6v1h-6zM1 -8h5v1h-5zM10 -8h1v2h-1zM2 -7h1v2h-1zM5 -7h1v1h-1zM5 -6h6v1h-6zM2 -5h4v1h-4zM8 -5h1v2h-1zM1 -4h2v1h-2zM5 -4h1v3h-1zM2 -3h1v3h-1zM9 -3h1v2h-1zM4 -1h1v1h-1zM10 -1h2v1h-2zM1 0h2v1h-2z"/><path id="g155" d="M3 -9h4v1h-4zM6 -8h1v3h-1zM5 -5h1v3h-1zM7 -5h1v2h-1zM8 -3h1v1h-1zM4 -2h1v1h-1zM8 -2h2v1h-2zM3 -1h1v1h-1zM9 -1h2v1h-2zM1 0h2v1h-2zM10 0h1v1h-1z"/><path id="g156" d="M5 -10h1v3h-1zM1 -7h9v1h-9zM5 -6h1v3h-1zM9 -6h1v6h-1zM4 -3h1v1h-1zM3 -2h2v1h-2zM2 -1h2v1h-2zM1 0h2v1h-2zM6 0h4v1h-4z"/><path id="g157" d="M5 -9h1v2h-1zM8 -9h3v1h-3zM1 -7h8v1h-8zM5 -6h1v2h-1zM8 -6h1v5h-1zM4 -4h1v2h-1zM2 -2h2v1h-2zM1 -1h2v1h-2zM6 -1h2v1h-2z"/><path id="g158" d="M8 -11h2v1h-2zM4 -10h1v1h-1zM8 -10h1v1h-1zM10 -10h1v1h-1zM3 -9h6v1h-6zM3 -8h1v1h-1zM8 -8h1v1h-1zM2 -7h2v1h-2zM7 -7h1v2h-1zM1 -6h2v1h-2zM4 -6h1v1h-1zM1 -5h1v1h-1zM5 -5h2v2h-2zM4 -3h2v1h-2zM3 -2h2v1h-2zM2 -1h1v1h-1z"/><path id="g159" d="M1 -9h2v1h-2zM3 -8h1v1h-1zM8 -8h2v1h-2zM8 -7h1v1h-1zM7 -6h1v1h-1zM6 -5h2v1h-2zM5 -4h2v1h-2zM3 -3h2v1h-2zM2 -2h1v1h-1z"/><path id="g160" d="M2 -9h6v1h-6zM7 -8h1v1h-1zM6 -7h1v2h-1zM5 -5h2v1h-2zM4 -4h1v1h-1zM7 -4h1v1h-1zM2 -3h2v1h-2zM8 -3h1v1h-1zM1 -2h2v1h-2zM9 -2h1v1h-1z"/><path id="g161" d="M8 -10h3v2h-3zM1 -8h8v1h-8zM8 -7h1v1h-1zM7 -6h1v2h-1zM6 -4h1v1h-1zM5 -3h2v1h-2zM4 -2h2v1h-2zM2 -1h2v1h-2z"/><path id="g162" d="M2 -9h1v2h-1zM5 -8h5v1h-5zM1 -7h1v4h-1zM1 -3h2v1h-2zM5 -3h1v2h-1zM1 -2h1v2h-1zM6 -1h4v1h-4z"/><path id="g163" d="M3 -10h1v2h-1zM9 -10h1v3h-1zM1 -8h5v1h-5zM4 -7h1v3h-1zM6 -7h5v1h-5zM9 -6h1v6h-1zM2 -5h1v1h-1zM6 -5h1v1h-1zM3 -4h1v1h-1zM7 -4h1v2h-1zM3 -3h2v1h-2zM2 -2h1v2h-1zM4 -2h1v1h-1zM1 0h1v1h-1zM7 0h3v1h-3z"/><path id="g164" d="M6 -10h1v2h-1zM2 -8h9v1h-9zM2 -7h1v3h-1zM6 -6h2v1h-2zM5 -5h1v5h-1zM9 -5h1v2h-1zM2 -4h2v3h-2zM10 -3h1v2h-1zM8 -2h1v2h-1zM1 -1h1v2h-1zM3 -1h1v1h-1zM5 0h4v1h-4z"/><path id="g165" d="M4 -10h4v1h-4zM2 -9h8v2h-8zM1 -7h10v4h-10zM2 -3h8v2h-8zM4 -1h4v1h-4z"/><path id="g166" d="M4 -10h1v2h-1zM7 -10h1v2h-1zM1 -8h10v1h-10zM1 -7h1v3h-1zM4 -7h1v3h-1zM7 -7h1v3h-1zM10 -7h1v3h-1zM1 -4h10v1h-10zM1 -3h1v2h-1zM4 -3h1v2h-1zM7 -3h1v2h-1zM10 -3h1v2h-1zM1 -1h10v1h-10zM1 0h1v1h-1zM10 0h1v1h-1z"/><path id="g167" d="M3 -11h1v1h-1zM8 -11h1v1h-1zM2 -10h1v1h-1zM6 -10h5v1h-5zM1 -9h2v1h-2zM4 -9h1v1h-1zM6 -9h1v1h-1zM10 -9h1v1h-1zM2 -8h2v1h-2zM6 -8h5v1h-5zM3 -7h2v1h-2zM6 -7h1v1h-1zM10 -7h1v1h-1zM2 -6h1v1h-1zM4 -6h1v1h-1zM6 -6h5v1h-5zM3 -5h6v1h-6zM10 -5h1v1h-1zM1 -4h1v3h-1zM3 -4h2v2h-2zM6 -4h1v2h-1zM8 -4h2v1h-2zM8 -3h1v2h-1zM10 -3h1v1h-1zM3 -2h1v2h-1zM5 -2h1v1h-1zM11 -2h1v1h-1zM7 -1h2v1h-2z"/><path id="g168" d="M8 -10h1v2h-1zM7 -8h1v1h-1zM5 -7h2v1h-2zM4 -6h3v1h-3zM2 -5h2v1h-2zM6 -5h1v5h-1z"/><path id="g169" d="M9 -10h3v2h-3zM2 -8h8v1h-8zM9 -7h1v1h-1zM8 -6h1v2h-1zM7 -4h1v1h-1zM6 -3h2v1h-2zM5 -2h2v1h-2zM3 -1h2v1h-2z"/><path id="g170" d="M4 -10h1v1h-1zM3 -9h1v2h-1zM2 -7h1v5h-1zM3 -2h1v2h-1zM4 0h1v1h-1z"/><path id="g171" d="M5 -10h1v1h-1zM4 -9h1v1h-1zM1 -8h1v1h-1zM4 -8h6v1h-6zM2 -7h1v1h-1zM4 -7h1v1h-1zM6 -7h1v3h-1zM9 -7h1v2h-1zM3 -6h1v1h-1zM8 -5h1v1h-1zM2 -4h1v2h-1zM5 -4h1v3h-1zM7 -4h1v2h-1zM1 -2h1v1h-1zM8 -2h1v1h-1zM0 -1h1v1h-1zM4 -1h1v1h-1zM9 -1h1v1h-1zM3 0h1v1h-1z"/><path id="g172" d="M5 -10h1v2h-1zM5 -8h6v1h-6zM5 -7h1v1h-1zM2 -6h8v1h-8zM2 -5h1v1h-1zM9 -5h1v1h-1zM2 -4h8v1h-8zM2 -3h1v2h-1zM9 -3h1v1h-1zM4 -2h1v2h-1zM6 -2h1v1h-1zM9 -2h2v1h-2zM1 -1h1v1h-1zM7 -1h1v1h-1zM10 -1h1v1h-1z"/><path id="g173" d="M4 -7h2v1h-2zM3 -6h1v1h-1zM6 -6h1v1h-1zM2 -5h1v1h-1zM7 -5h1v1h-1zM1 -4h1v1h-1zM8 -4h2v1h-2zM9 -3h2v1h-2z"/><path id="g174" d="M4 -9h5v1h-5zM2 -8h3v1h-3zM6 -8h1v1h-1zM8 -8h2v1h-2zM2 -7h1v1h-1zM5 -7h1v4h-1zM9 -7h2v1h-2zM1 -6h1v4h-1zM10 -6h1v3h-1zM4 -3h1v1h-1zM9 -3h1v1h-1zM2 -2h2v1h-2zM8 -2h2v1h-2zM6 -1h2v1h-2z"/><path id="g175" d="M2 -10h1v2h-1zM5 -10h1v2h-1zM7 -9h4v1h-4zM1 -8h6v1h-6zM11 -8h1v2h-1zM2 -7h1v3h-1zM5 -7h1v1h-1zM5 -6h6v1h-6zM2 -4h9v1h-9zM2 -3h1v3h-1zM5 -3h6v1h-6zM5 -2h1v1h-1zM10 -2h1v1h-1zM5 -1h6v1h-6zM1 0h2v1h-2zM5 0h1v1h-1zM10 0h1v1h-1z"/><path id="g176" d="M6 -10h1v2h-1zM1 -8h10v1h-10zM1 -7h1v1h-1zM10 -7h1v1h-1zM3 -6h6v1h-6zM6 -5h1v1h-1zM3 -4h1v2h-1zM6 -4h4v1h-4zM6 -3h1v2h-1zM2 -2h1v1h-1zM4 -2h1v1h-1zM1 -1h2v1h-2zM5 -1h7v1h-7zM1 0h1v1h-1z"/><path id="g177" d="M1 -10h1v1h-1zM2 -9h1v2h-1zM3 -7h1v5h-1zM2 -2h1v2h-1zM1 0h1v1h-1z"/><path id="g178" d="M2 -9h2v1h-2zM1 -8h1v1h-1zM3 -8h1v7h-1z"/><path id="g179" d="M1 -5h4v1h-4z"/><path id="g180" d="M6 -10h1v1h-1zM1 -9h10v1h-10zM6 -8h1v1h-1zM4 -7h6v1h-6zM2 -6h1v5h-1zM4 -6h1v1h-1zM9 -6h1v1h-1zM4 -5h6v2h-6zM4 -3h1v1h-1zM9 -3h1v1h-1zM4 -2h6v1h-6zM2 -1h9v1h-9zM2 0h1v1h-1z"/><path id="g181" d="M10 -10h1v1h-1zM9 -9h1v2h-1zM8 -7h1v5h-1zM9 -2h1v2h-1zM10 0h1v1h-1z"/><path id="g182" d="M1 -9h4v1h-4zM4 -8h1v1h-1zM3 -7h1v2h-1zM2 -5h1v2h-1zM1 -3h1v1h-1zM1 -2h4v1h-4z"/><path id="g183" d="M6 -10h1v2h-1zM9 -9h1v1h-1zM2 -8h7v1h-7zM6 -7h1v1h-1zM3 -6h6v1h-6zM6 -5h1v2h-1zM3 -3h5v1h-5zM2 -2h1v1h-1zM6 -2h1v1h-1zM8 -2h1v1h-1zM3 -1h4v1h-4zM9 -1h1v1h-1z"/><path id="g184" d="M1 -8h9v1h-9zM5 -7h2v1h-2zM9 -7h1v1h-1zM5 -6h1v1h-1zM8 -6h1v1h-1zM10 -6h1v1h-1zM4 -5h1v3h-1zM9 -5h1v1h-1zM5 -2h1v1h-1zM6 -1h3v1h-3z"/><path id="g185" d="M3 -9h4v1h-4zM6 -8h1v3h-1zM5 -5h1v3h-1zM7 -5h1v2h-1zM8 -3h1v1h-1zM4 -2h1v1h-1zM8 -2h2v1h-2zM3 -1h1v1h-1zM9 -1h2v1h-2zM1 0h2v1h-2zM10 0h1v1h-1z"/><path id="g186" d="M5 -10h1v3h-1zM1 -7h9v1h-9zM5 -6h1v3h-1zM9 -6h1v6h-1zM4 -3h1v1h-1zM3 -2h2v1h-2zM2 -1h2v1h-2zM1 0h2v1h-2zM6 0h4v1h-4z"/><path id="g187" d="M3 -9h6v1h-6zM5 -8h2v1h-2zM2 -5h2v1h-2zM2 -4h1v1h-1zM2 -3h2v1h-2zM3 -2h7v1h-7z"/><path id="g188" d="M4 -10h1v3h-1zM8 -8h1v1h-1zM5 -7h3v1h-3zM4 -6h1v1h-1zM3 -5h1v1h-1zM2 -4h1v2h-1zM3 -2h7v1h-7z"/><path id="g189" d="M1 -10h1v1h-1zM2 -9h1v2h-1zM3 -7h1v5h-1zM2 -2h1v2h-1zM1 0h1v1h-1z"/><path id="g190" d="M1 -9h3v1h-3zM0 -8h2v1h-2zM4 -8h1v2h-1zM0 -7h1v1h-1zM3 -6h1v1h-1zM2 -5h1v1h-1zM1 -4h1v1h-1zM0 -3h1v1h-1zM0 -2h5v1h-5z"/><path id="g191" d="M1 -9h9v1h-9zM1 -8h1v3h-1zM6 -8h1v3h-1zM9 -8h1v3h-1zM1 -5h9v1h-9zM1 -4h1v5h-1zM9 -4h1v4h-1zM8 0h2v1h-2z"/><path id="g192" d="M1 -10h3v1h-3zM8 -10h3v1h-3zM3 -9h1v1h-1zM5 -9h3v1h-3zM9 -9h1v6h-1zM1 -8h3v1h-3zM5 -8h1v6h-1zM7 -8h1v5h-1zM1 -7h1v2h-1zM3 -7h1v1h-1zM1 -5h3v1h-3zM1 -4h1v1h-1zM3 -4h1v2h-1zM7 -3h2v1h-2zM10 -3h1v1h-1zM3 -2h2v1h-2zM6 -2h5v1h-5zM2 -1h3v1h-3z"/><path id="g193" d="M2 -9h9v1h-9zM2 -8h1v1h-1zM6 -8h1v1h-1zM10 -8h1v8h-1zM2 -7h7v1h-7zM2 -6h1v1h-1zM6 -6h1v1h-1zM2 -5h7v1h-7zM2 -4h1v4h-1zM4 -4h4v1h-4zM4 -3h1v1h-1zM7 -3h1v1h-1zM4 -2h4v1h-4zM4 -1h1v1h-1zM1 0h1v1h-1zM7 0h4v1h-4z"/><path id="g194" d="M5 -9h1v3h-1zM5 -6h5v1h-5zM5 -5h1v4h-1zM1 -1h10v1h-10z"/><path id="g195" d="M4 -9h4v1h-4zM3 -8h2v1h-2zM8 -8h1v2h-1zM7 -6h1v1h-1zM6 -5h2v1h-2zM8 -4h1v2h-1zM3 -3h1v1h-1zM3 -2h2v1h-2zM7 -2h2v1h-2zM4 -1h4v1h-4z"/><path id="g196" d="M1 -9h3v1h-3zM1 -8h1v1h-1zM4 -8h1v2h-1zM2 -6h2v1h-2zM4 -5h1v3h-1zM1 -3h1v1h-1zM1 -2h3v1h-3z"/><path id="g197" d="M5 -10h1v3h-1zM1 -7h10v1h-10zM1 -6h1v2h-1zM5 -6h1v2h-1zM10 -6h1v2h-1zM1 -4h10v1h-10zM1 -3h1v1h-1zM5 -3h1v4h-1zM10 -3h1v1h-1z"/><path id="g198" d="M4 -10h3v1h-3zM7 -9h1v1h-1zM4 -8h1v7h-1zM9 -7h1v2h-1zM2 -6h1v2h-1zM10 -5h1v2h-1zM1 -4h1v2h-1zM8 -3h1v2h-1zM5 -1h4v1h-4z"/><path id="g199" d="M1 -2h2v1h-2zM1 -1h1v2h-1z"/><path id="g200" d="M6 -10h1v4h-1zM3 -9h1v2h-1zM8 -9h1v3h-1zM2 -6h8v1h-8zM6 -5h1v1h-1zM1 -4h10v1h-10zM6 -3h1v4h-1z"/><path id="g201" d="M2 -9h1v1h-1zM4 -9h7v1h-7zM1 -8h1v1h-1zM5 -8h1v1h-1zM9 -8h1v1h-1zM3 -7h1v1h-1zM6 -7h3v1h-3zM2 -6h1v1h-1zM6 -6h1v1h-1zM8 -6h2v1h-2zM1 -5h2v1h-2zM4 -5h2v1h-2zM7 -5h1v2h-1zM10 -5h1v1h-1zM0 -4h1v1h-1zM2 -4h1v5h-1zM4 -3h7v1h-7zM7 -2h1v1h-1zM4 -1h7v1h-7z"/><path id="g202" d="M4 -10h1v1h-1zM3 -9h5v1h-5zM3 -8h1v1h-1zM7 -8h1v1h-1zM1 -7h9v1h-9zM2 -6h1v1h-1zM6 -6h1v1h-1zM9 -6h1v1h-1zM2 -5h8v1h-8zM2 -4h1v1h-1zM6 -4h1v1h-1zM9 -4h1v1h-1zM2 -3h8v1h-8zM2 -2h1v2h-1zM9 -2h1v2h-1zM1 0h1v1h-1zM7 0h3v1h-3z"/><path id="g203" d="M6 -10h1v2h-1zM1 -8h10v1h-10zM5 -7h1v2h-1zM5 -5h5v1h-5zM5 -4h1v1h-1zM9 -4h1v4h-1zM4 -3h1v2h-1zM3 -1h1v1h-1zM1 0h2v1h-2zM7 0h2v1h-2z"/><path id="g204" d="M5 -10h1v2h-1zM1 -8h10v1h-10zM1 -7h1v8h-1zM10 -7h1v7h-1zM4 -6h4v1h-4zM4 -5h1v2h-1zM7 -5h1v2h-1zM4 -3h4v1h-4zM4 -2h1v1h-1zM7 0h4v1h-4z"/><path id="g205" d="M1 -9h10v1h-10zM1 -8h1v7h-1zM10 -8h1v7h-1zM4 -7h4v1h-4zM4 -6h1v3h-1zM7 -6h1v3h-1zM4 -3h4v1h-4zM1 -1h10v1h-10zM1 0h1v1h-1zM10 0h1v1h-1z"/><path id="g206" d="M3 -10h1v1h-1zM1 -9h10v1h-10zM3 -8h1v1h-1zM1 -7h5v1h-5zM1 -6h1v1h-1zM3 -6h1v1h-1zM5 -6h1v1h-1zM1 -5h10v1h-10zM1 -4h1v1h-1zM3 -4h1v1h-1zM5 -4h1v1h-1zM7 -4h1v3h-1zM1 -3h5v2h-5zM10 -2h1v1h-1zM3 -1h1v2h-1zM6 -1h1v1h-1zM8 -1h3v1h-3zM6 0h2v1h-2z"/><path id="g207" d="M5 -10h1v2h-1zM2 -8h6v1h-6zM4 -7h1v1h-1zM3 -6h4v1h-4zM3 -5h1v1h-1zM6 -5h4v1h-4zM2 -4h1v1h-1zM5 -4h2v1h-2zM4 -3h1v2h-1zM6 -3h1v1h-1zM5 -1h5v1h-5z"/><path id="g208" d="M5 -11h1v2h-1zM1 -9h10v1h-10zM5 -8h1v1h-1zM4 -7h1v1h-1zM3 -6h7v1h-7zM2 -5h3v1h-3zM9 -5h1v3h-1zM1 -4h2v1h-2zM4 -4h1v2h-1zM4 -2h6v1h-6zM4 -1h1v1h-1zM9 -1h1v1h-1z"/><path id="g209" d="M3 -10h1v2h-1zM7 -10h1v3h-1zM5 -9h1v3h-1zM2 -8h1v2h-1zM7 -7h3v1h-3zM1 -6h7v1h-7zM9 -6h1v2h-1zM0 -5h1v1h-1zM2 -5h1v6h-1zM5 -5h1v5h-1zM7 -5h1v1h-1zM7 -4h3v1h-3zM7 -3h1v1h-1zM10 -2h1v2h-1zM5 0h5v1h-5z"/><path id="g210" d="M5 -11h1v1h-1zM4 -10h1v1h-1zM1 -9h10v1h-10zM4 -8h1v2h-1zM3 -6h7v1h-7zM2 -5h2v1h-2zM6 -5h1v3h-1zM2 -4h1v1h-1zM1 -3h1v1h-1zM3 -2h8v1h-8z"/><path id="g211" d="M6 -10h1v2h-1zM2 -8h8v1h-8zM6 -7h1v2h-1zM1 -5h10v1h-10zM5 -4h3v1h-3zM4 -3h1v1h-1zM6 -3h1v4h-1zM8 -3h1v1h-1zM3 -2h1v1h-1zM9 -2h1v1h-1zM1 -1h2v1h-2zM10 -1h1v1h-1z"/><path id="g212" d="M4 -11h1v1h-1zM8 -11h1v1h-1zM1 -10h10v1h-10zM6 -9h1v1h-1zM2 -8h8v1h-8zM1 -7h10v1h-10zM1 -6h5v1h-5zM7 -6h1v1h-1zM9 -6h1v1h-1zM4 -5h1v1h-1zM8 -5h3v1h-3zM1 -4h7v1h-7zM4 -3h1v1h-1zM8 -3h2v1h-2zM1 -2h6v1h-6zM8 -2h1v1h-1zM10 -2h1v1h-1zM4 -1h1v1h-1zM7 -1h1v1h-1zM9 -1h2v1h-2zM3 0h2v1h-2zM6 0h1v1h-1z"/><path id="g213" d="M5 -10h1v2h-1zM3 -8h5v1h-5zM4 -7h1v1h-1zM2 -6h3v1h-3zM6 -6h2v1h-2zM4 -5h2v1h-2zM9 -5h1v3h-1zM4 -4h1v2h-1zM5 -2h4v1h-4z"/><path id="g214" d="M6 -10h1v1h-1zM2 -9h9v1h-9zM2 -8h1v1h-1zM4 -8h1v1h-1zM7 -8h1v1h-1zM2 -7h9v1h-9zM2 -6h1v2h-1zM4 -6h1v1h-1zM7 -6h1v1h-1zM4 -5h4v1h-4zM2 -4h7v1h-7zM2 -3h1v2h-1zM4 -3h1v1h-1zM8 -3h1v1h-1zM5 -2h3v1h-3zM1 -1h1v2h-1zM5 -1h4v1h-4zM3 0h2v1h-2zM9 0h2v1h-2z"/><path id="g215" d="M4 -9h1v3h-1zM1 -6h4v1h-4zM0 -5h1v3h-1zM4 -5h1v3h-1zM1 -2h4v1h-4z"/><path id="g216" d="M2 -6h2v1h-2zM1 -5h1v1h-1zM4 -5h1v1h-1zM1 -4h4v1h-4zM1 -3h1v1h-1zM2 -2h3v1h-3z"/><path id="g217" d="M1 -6h4v1h-4zM0 -5h1v2h-1zM4 -5h1v2h-1zM1 -3h4v1h-4zM4 -2h1v2h-1zM1 -1h1v1h-1zM1 0h3v1h-3z"/><path id="g218" d="M3 -11h1v1h-1zM8 -11h1v1h-1zM1 -10h5v2h-5zM7 -10h4v1h-4zM7 -9h1v1h-1zM9 -9h1v1h-1zM1 -8h1v1h-1zM3 -8h1v1h-1zM5 -8h5v1h-5zM1 -7h5v1h-5zM8 -7h2v1h-2zM3 -6h1v1h-1zM5 -6h1v1h-1zM7 -6h2v1h-2zM10 -6h1v1h-1zM1 -4h10v1h-10zM3 -3h1v2h-1zM6 -3h4v1h-4zM6 -2h1v1h-1zM1 -1h10v1h-10z"/><path id="g219" d="M3 -10h1v2h-1zM5 -10h1v1h-1zM7 -10h1v2h-1zM1 -9h1v1h-1zM1 -8h5v1h-5zM7 -8h4v1h-4zM2 -7h3v1h-3zM6 -7h1v1h-1zM9 -7h1v3h-1zM1 -6h1v1h-1zM3 -6h1v1h-1zM5 -6h2v1h-2zM2 -5h1v1h-1zM7 -5h1v1h-1zM1 -4h5v1h-5zM7 -4h2v1h-2zM2 -3h1v1h-1zM4 -3h1v1h-1zM8 -3h1v1h-1zM2 -2h3v1h-3zM7 -2h3v1h-3zM3 -1h5v1h-5zM9 -1h2v1h-2zM1 0h2v1h-2zM10 0h1v1h-1z"/><path id="g220" d="M2 -10h1v2h-1zM6 -10h1v1h-1zM8 -10h1v1h-1zM4 -9h7v1h-7zM1 -8h3v1h-3zM6 -8h1v1h-1zM8 -8h1v1h-1zM2 -7h1v2h-1zM4 -7h7v1h-7zM7 -6h1v1h-1zM1 -5h3v1h-3zM5 -5h6v2h-6zM1 -4h2v2h-2zM5 -3h1v1h-1zM7 -3h1v1h-1zM10 -3h1v1h-1zM2 -2h1v3h-1zM5 -2h6v1h-6zM6 -1h1v1h-1zM8 -1h2v1h-2zM4 0h2v1h-2zM10 0h1v1h-1z"/><path id="g221" d="M5 -9h2v1h-2zM4 -8h1v1h-1zM7 -8h1v1h-1zM3 -7h1v5h-1zM8 -7h1v5h-1zM4 -2h1v1h-1zM7 -2h1v1h-1zM4 -1h3v1h-3z"/><path id="g222" d="M1 -10h2v3h-2z"/><path id="g223" d="M3 -9h1v5h-1zM8 -9h1v7h-1zM5 -5h1v1h-1zM3 -4h2v1h-2zM7 -2h1v1h-1zM6 -1h2v1h-2zM5 0h1v1h-1z"/><path id="g224" d="M2 -9h1v5h-1zM5 -8h5v1h-5zM2 -4h2v2h-2zM5 -3h1v2h-1zM2 -2h1v2h-1zM6 -1h5v1h-5z"/><path id="g225" d="M2 -9h2v1h-2zM1 -8h1v2h-1zM4 -8h1v1h-1zM3 -7h2v1h-2zM1 -6h2v3h-2zM4 -6h1v4h-1zM1 -3h1v1h-1zM2 -2h2v1h-2z"/><path id="g226" d="M2 -6h3v1h-3zM1 -5h1v1h-1zM5 -5h2v1h-2zM10 -5h1v1h-1zM7 -4h3v1h-3z"/><path id="g227" d="M2 -9h3v1h-3zM1 -8h1v2h-1zM4 -8h1v1h-1zM1 -6h3v1h-3zM1 -5h1v3h-1zM4 -5h1v3h-1zM2 -2h2v1h-2z"/><path id="g228" d="M5 -10h1v3h-1zM1 -7h10v1h-10zM5 -6h1v1h-1zM5 -5h2v1h-2zM4 -4h1v2h-1zM6 -4h1v1h-1zM7 -3h1v1h-1zM3 -2h1v1h-1zM8 -2h2v1h-2zM2 -1h1v1h-1zM9 -1h2v1h-2z"/><path id="g229" d="M6 -9h1v9h-1zM3 -7h1v3h-1zM8 -7h1v1h-1zM9 -6h1v1h-1zM10 -5h1v3h-1zM2 -4h1v2h-1zM4 0h3v1h-3z"/><path id="g230" d="M1 -10h10v1h-10zM1 -9h1v1h-1zM5 -9h2v1h-2zM10 -9h1v1h-1zM1 -8h10v2h-10zM1 -6h1v7h-1zM4 -6h1v1h-1zM7 -6h1v1h-1zM10 -6h1v6h-1zM3 -5h6v1h-6zM6 -4h1v1h-1zM3 -3h6v1h-6zM6 -2h1v1h-1zM4 -1h2v1h-2zM7 -1h2v1h-2zM3 0h1v1h-1zM9 0h2v1h-2z"/><path id="g231" d="M3 -10h1v1h-1zM3 -9h7v1h-7zM2 -8h1v2h-1zM6 -8h2v1h-2zM4 -7h3v1h-3zM9 -7h1v1h-1zM1 -6h2v2h-2zM6 -6h1v1h-1zM8 -6h1v1h-1zM6 -5h2v1h-2zM10 -5h1v1h-1zM2 -4h1v5h-1zM4 -4h6v1h-6zM11 -4h1v1h-1zM5 -3h1v2h-1zM7 -3h1v4h-1zM9 -3h1v1h-1zM10 -2h1v2h-1zM4 -1h1v1h-1z"/><path id="g232" d="M5 -10h1v2h-1zM9 -9h1v1h-1zM2 -8h7v1h-7zM5 -7h1v1h-1zM7 -7h1v1h-1zM1 -6h10v1h-10zM5 -5h1v1h-1zM2 -4h7v1h-7zM1 -3h1v1h-1zM4 -3h6v1h-6zM3 -2h1v1h-1zM9 -2h1v1h-1zM8 -1h1v1h-1zM6 0h3v1h-3z"/><path id="g233" d="M5 -10h1v1h-1zM5 -9h5v1h-5zM2 -8h9v1h-9zM2 -7h7v1h-7zM10 -7h1v1h-1zM2 -6h1v1h-1zM5 -6h5v1h-5zM2 -5h8v3h-8zM2 -2h2v1h-2zM5 -2h2v1h-2zM9 -2h2v1h-2zM1 -1h1v1h-1zM3 -1h1v1h-1zM5 -1h4v1h-4zM10 -1h1v1h-1z"/><path id="g234" d="M1 -9h10v1h-10zM5 -8h1v2h-1zM4 -6h2v1h-2zM7 -6h1v1h-1zM3 -5h1v1h-1zM5 -5h1v6h-1zM8 -5h2v1h-2zM2 -4h1v1h-1zM9 -4h2v1h-2zM1 -3h1v1h-1z"/><path id="g235" d="M1 -9h10v1h-10zM2 -8h8v1h-8zM2 -7h1v2h-1zM4 -7h1v2h-1zM7 -7h1v2h-1zM9 -7h1v2h-1zM2 -5h8v1h-8zM1 -4h10v1h-10zM3 -3h1v1h-1zM7 -3h1v2h-1zM4 -2h2v1h-2zM5 -1h4v1h-4zM2 0h3v1h-3zM9 0h1v1h-1z"/><path id="g236" d="M1 -3h1v1h-1zM2 -2h1v2h-1z"/><path id="g237" d="M6 -10h1v2h-1zM1 -8h10v1h-10zM1 -7h1v8h-1zM6 -7h1v2h-1zM10 -7h1v4h-1zM5 -5h1v2h-1zM7 -5h1v1h-1zM8 -4h1v1h-1zM3 -3h2v1h-2zM9 -3h2v1h-2zM10 -2h1v2h-1zM8 0h3v1h-3z"/><path id="g238" d="M3 -10h1v2h-1zM7 -9h4v1h-4zM1 -8h5v1h-5zM7 -8h1v3h-1zM10 -8h1v1h-1zM2 -7h1v2h-1zM4 -7h1v2h-1zM9 -7h1v3h-1zM1 -5h7v1h-7zM2 -4h4v1h-4zM7 -4h1v5h-1zM10 -4h1v2h-1zM2 -3h1v2h-1zM5 -3h1v2h-1zM9 -2h2v1h-2zM2 -1h4v1h-4zM2 0h1v1h-1zM5 0h1v1h-1z"/><path id="g239" d="M1 -9h3v2h-3zM5 -9h6v1h-6zM5 -8h1v1h-1zM7 -8h1v1h-1zM10 -8h1v1h-1zM5 -7h6v2h-6zM1 -6h3v2h-3zM5 -5h1v1h-1zM10 -5h1v1h-1zM5 -4h6v1h-6zM1 -3h3v1h-3zM5 -3h2v1h-2zM9 -3h2v1h-2zM1 -2h1v1h-1zM3 -2h1v1h-1zM5 -2h6v1h-6zM1 -1h5v1h-5zM10 -1h1v1h-1zM1 0h1v1h-1zM4 0h1v1h-1zM9 0h2v1h-2z"/><path id="g240" d="M5 -9h1v1h-1zM8 -9h1v1h-1zM2 -8h6v1h-6zM6 -7h1v1h-1zM8 -7h2v1h-2zM2 -6h6v1h-6zM7 -5h1v1h-1zM6 -4h1v1h-1zM8 -4h1v1h-1zM3 -3h1v2h-1zM7 -3h2v1h-2zM4 -1h4v1h-4z"/><path id="g241" d="M1 -9h1v1h-1zM6 -9h2v1h-2zM2 -8h2v1h-2zM4 -7h7v1h-7zM0 -6h2v1h-2zM7 -6h1v2h-1zM2 -5h1v1h-1zM4 -4h7v1h-7zM2 -3h2v1h-2zM7 -3h1v3h-1zM2 -2h1v1h-1zM1 -1h1v2h-1zM3 0h8v1h-8z"/><path id="g242" d="M6 -10h1v1h-1zM1 -9h10v1h-10zM4 -8h1v1h-1zM8 -8h1v1h-1zM1 -7h10v1h-10zM2 -6h8v3h-8zM6 -3h1v1h-1zM2 -2h1v1h-1zM4 -2h1v2h-1zM6 -2h2v1h-2zM9 -2h1v1h-1zM1 -1h1v1h-1zM8 -1h1v1h-1zM10 -1h1v1h-1zM4 0h5v1h-5z"/><path id="g243" d="M4 -9h4v1h-4zM3 -8h2v1h-2zM8 -8h1v2h-1zM3 -7h1v1h-1zM7 -6h2v1h-2zM6 -5h1v1h-1zM4 -4h2v1h-2zM3 -3h1v1h-1zM3 -2h6v1h-6z"/><path id="g244" d="M3 -11h1v2h-1zM8 -11h1v2h-1zM1 -9h2v1h-2zM4 -9h7v1h-7zM2 -8h2v1h-2zM8 -8h1v1h-1zM2 -7h1v1h-1zM4 -7h7v1h-7zM1 -6h4v1h-4zM3 -5h2v2h-2zM6 -5h5v1h-5zM1 -4h1v3h-1zM6 -4h1v2h-1zM10 -4h1v2h-1zM3 -3h1v3h-1zM6 -2h5v1h-5zM6 -1h1v1h-1zM10 -1h1v1h-1z"/><path id="g245" d="M9 -9h2v1h-2zM3 -8h3v1h-3zM8 -8h1v2h-1zM1 -7h2v1h-2zM4 -7h1v1h-1zM3 -6h1v1h-1zM8 -6h2v1h-2zM2 -5h1v3h-1zM8 -5h1v3h-1zM10 -5h1v2h-1zM2 -2h2v1h-2zM7 -2h1v1h-1zM3 -1h4v1h-4z"/><path id="g246" d="M6 -10h1v2h-1zM1 -8h10v1h-10zM6 -7h1v1h-1zM4 -6h3v1h-3zM3 -5h1v2h-1zM6 -5h1v2h-1zM4 -3h3v1h-3zM6 -2h1v1h-1zM5 -1h1v1h-1zM4 0h1v1h-1z"/><path id="g247" d="M1 -2h3v1h-3zM1 -1h1v1h-1zM3 -1h1v1h-1zM1 0h3v1h-3z"/><path id="g248" d="M2 -10h1v2h-1zM2 -8h3v1h-3zM2 -7h1v1h-1zM4 -7h1v3h-1zM1 -6h1v1h-1zM1 -5h2v1h-2zM3 -4h1v3h-1zM2 -1h1v1h-1z"/><path id="g249" d="M4 -10h1v2h-1zM3 -8h1v2h-1zM2 -6h2v1h-2zM1 -5h1v1h-1zM3 -5h1v5h-1z"/><path id="g250" d="M1 -9h4v1h-4zM4 -8h1v3h-1zM3 -5h1v2h-1zM2 -3h1v2h-1z"/><path id="g251" d="M1 -10h2v3h-2z"/><path id="g252" d="M2 -10h1v5h-1zM8 -10h1v2h-1zM5 -8h6v1h-6zM8 -7h1v3h-1zM2 -5h2v2h-2zM5 -4h4v1h-4zM2 -3h1v2h-1zM5 -3h1v1h-1zM8 -3h3v1h-3zM5 -2h4v1h-4z"/><path id="g253" d="M2 -10h1v1h-1zM0 -9h3v1h-3zM1 -8h1v1h-1z"/><path id="g254" d="M2 -10h1v1h-1zM3 -9h1v1h-1zM4 -8h1v1h-1zM2 -7h1v1h-1zM3 -6h1v1h-1zM1 -4h2v1h-2zM3 -3h1v1h-1zM4 -2h1v1h-1z"/><path id="g255" d="M1 -5h4v1h-4z"/><path id="g256" d="M5 -9h2v1h-2zM4 -8h1v1h-1zM6 -8h1v7h-1z"/><path id="g257" d="M6 -10h1v3h-1zM1 -7h10v1h-10zM5 -6h3v1h-3zM4 -5h1v1h-1zM6 -5h2v1h-2zM3 -4h2v1h-2zM6 -4h1v1h-1zM8 -4h2v1h-2zM2 -3h6v1h-6zM9 -3h2v1h-2zM1 -2h1v1h-1zM6 -2h1v3h-1zM10 -2h1v1h-1z"/><path id="g258" d="M9 -9h2v1h-2zM7 -8h2v1h-2zM5 -7h2v1h-2zM3 -6h2v1h-2zM1 -5h2v1h-2zM2 -4h3v1h-3zM5 -3h2v1h-2zM7 -2h2v1h-2zM9 -1h2v1h-2z"/><path id="g259" d="M2 -9h2v1h-2zM1 -8h1v2h-1zM4 -8h1v2h-1zM2 -6h2v1h-2zM0 -5h2v1h-2zM4 -5h2v1h-2zM0 -4h1v2h-1zM5 -4h1v2h-1zM1 -2h4v1h-4z"/><path id="g260" d="M2 -10h1v2h-1zM5 -9h6v2h-6zM1 -8h1v1h-1zM3 -8h1v1h-1zM1 -7h3v1h-3zM5 -7h1v1h-1zM10 -7h1v1h-1zM2 -6h2v1h-2zM5 -6h6v1h-6zM0 -5h3v1h-3zM4 -5h7v1h-7zM2 -4h2v1h-2zM5 -4h4v1h-4zM10 -4h1v1h-1zM0 -3h1v3h-1zM2 -3h1v4h-1zM4 -3h7v1h-7zM5 -2h4v1h-4zM10 -2h1v3h-1zM4 -1h1v2h-1zM6 -1h3v2h-3z"/><path id="g261" d="M3 -11h1v1h-1zM6 -11h1v1h-1zM2 -10h9v1h-9zM2 -9h1v1h-1zM6 -9h1v1h-1zM1 -8h9v1h-9zM2 -7h8v1h-8zM2 -6h9v1h-9zM6 -5h1v1h-1zM1 -4h10v1h-10zM5 -3h3v1h-3zM3 -2h2v1h-2zM6 -2h1v2h-1zM8 -2h2v1h-2zM1 -1h2v1h-2zM10 -1h1v1h-1z"/><path id="g262" d="M2 -10h1v3h-1zM5 -10h1v2h-1zM7 -10h1v2h-1zM9 -10h1v2h-1zM4 -8h1v1h-1zM6 -8h3v1h-3zM10 -8h1v1h-1zM1 -7h5v1h-5zM7 -7h1v1h-1zM9 -7h1v1h-1zM2 -6h1v1h-1zM5 -6h4v1h-4zM10 -6h1v1h-1zM2 -5h3v1h-3zM6 -5h2v1h-2zM9 -5h2v1h-2zM1 -4h2v2h-2zM4 -4h7v1h-7zM5 -3h1v1h-1zM7 -3h1v1h-1zM2 -2h1v3h-1zM5 -2h2v1h-2zM8 -2h2v1h-2zM4 -1h1v2h-1zM8 -1h1v1h-1zM10 -1h1v1h-1zM6 0h2v1h-2zM9 0h2v1h-2z"/><path id="g263" d="M2 -11h2v1h-2zM6 -11h1v2h-1zM2 -10h1v1h-1zM4 -10h1v1h-1zM8 -10h2v1h-2zM0 -9h8v1h-8zM6 -8h1v1h-1zM10 -8h1v1h-1zM1 -7h10v1h-10zM1 -6h1v1h-1zM5 -6h1v1h-1zM1 -5h6v1h-6zM1 -4h9v1h-9zM1 -3h1v3h-1zM5 -3h2v2h-2zM10 -3h1v2h-1zM3 -1h8v1h-8z"/><path id="g264" d="M1 -9h1v6h-1zM4 -9h1v7h-1zM3 -2h1v1h-1zM2 -1h2v1h-2zM2 0h1v1h-1z"/><path id="g265" d="M1 -8h1v1h-1zM2 -7h1v1h-1zM4 -7h1v3h-1zM3 -4h2v1h-2zM3 -3h1v1h-1zM2 -2h1v1h-1zM1 -1h1v1h-1z"/><path id="g266" d="M0 -9h6v1h-6zM3 -8h1v7h-1z"/><path id="g267" d="M2 -9h2v3h-2zM1 -6h1v2h-1zM4 -6h1v2h-1zM1 -4h4v1h-4zM1 -3h1v1h-1zM4 -3h1v1h-1zM0 -2h1v1h-1zM5 -2h1v1h-1z"/><path id="g268" d="M1 -9h4v1h-4zM1 -8h1v3h-1zM4 -8h1v3h-1zM1 -5h3v1h-3zM1 -4h1v2h-1zM4 -4h2v1h-2zM5 -3h1v1h-1zM1 -2h4v1h-4z"/><path id="g269" d="M3 -7h1v1h-1zM2 -6h1v1h-1zM0 -5h11v1h-11zM2 -4h1v1h-1zM3 -3h1v1h-1z"/><path id="g270" d="M8 -7h1v1h-1zM9 -6h1v1h-1zM1 -5h11v1h-11zM9 -4h1v1h-1zM8 -3h1v1h-1z"/><path id="g271" d="M6 -10h1v2h-1zM5 -8h3v1h-3zM4 -7h1v1h-1zM6 -7h1v8h-1z"/><path id="g272" d="M6 -10h1v8h-1zM4 -3h1v1h-1zM5 -2h3v1h-3zM6 -1h1v2h-1z"/><path id="g273" d="M2 -10h1v2h-1zM1 -8h3v1h-3zM2 -7h1v2h-1zM4 -6h1v1h-1zM0 -5h4v1h-4zM3 -4h1v3h-1z"/><path id="g274" d="M2 -9h1v2h-1zM2 -7h4v1h-4zM1 -6h2v1h-2zM5 -6h1v1h-1zM2 -5h1v4h-1zM4 -5h1v2h-1zM2 -1h4v1h-4z"/><path id="g275" d="M3 -9h1v6h-1zM1 -8h1v6h-1zM5 -5h1v2h-1zM3 -3h2v2h-2zM0 -2h1v2h-1zM3 -1h1v1h-1z"/><path id="g276" d="M4 -10h1v1h-1zM7 -10h1v1h-1zM1 -9h4v1h-4zM7 -9h4v1h-4zM3 -8h1v1h-1zM6 -8h1v1h-1zM9 -8h1v1h-1zM1 -7h5v1h-5zM7 -7h2v2h-2zM3 -6h1v1h-1zM2 -5h5v1h-5zM8 -5h3v1h-3zM2 -4h3v1h-3zM7 -4h1v1h-1zM10 -4h1v1h-1zM1 -3h1v1h-1zM3 -3h1v4h-1zM6 -3h2v1h-2zM9 -3h1v1h-1zM8 -2h2v1h-2zM7 -1h1v1h-1zM5 0h2v1h-2z"/><path id="g277" d="M4 -10h3v1h-3zM8 -10h1v3h-1zM1 -9h3v1h-3zM1 -8h6v1h-6zM3 -7h1v1h-1zM7 -7h4v1h-4zM1 -6h6v3h-6zM8 -6h1v4h-1zM10 -6h1v5h-1zM1 -3h5v1h-5zM3 -2h1v1h-1zM7 -2h1v1h-1zM1 -1h9v1h-9z"/><path id="g278" d="M1 -9h10v1h-10zM9 -8h1v8h-1zM2 -6h5v1h-5zM2 -5h1v2h-1zM6 -5h1v2h-1zM2 -3h5v1h-5zM2 -2h1v1h-1zM6 0h4v1h-4z"/><path id="g279" d="M2 -9h3v1h-3zM1 -8h1v6h-1zM4 -8h1v1h-1zM4 -3h1v1h-1zM2 -2h3v1h-3z"/><path id="g280" d="M1 -6h4v1h-4zM1 -5h1v4h-1zM4 -5h1v4h-1z"/><path id="g281" d="M2 -8h1v2h-1zM1 -6h4v1h-4zM2 -5h1v3h-1zM2 -2h3v1h-3z"/><path id="g282" d="M2 -7h1v1h-1zM4 -7h1v1h-1zM2 -6h2v1h-2zM2 -5h1v3h-1z"/><path id="g283" d="M3 -9h1v7h-1zM3 -2h2v1h-2z"/><path id="g284" d="M3 -8h1v3h-1zM1 -5h4v1h-4zM3 -4h1v3h-1z"/><path id="g285" d="M1 -10h2v1h-2zM2 -9h1v1h-1zM1 -8h1v1h-1z"/><path id="g286" d="M3 -9h1v1h-1zM5 -9h6v1h-6zM2 -8h1v1h-1zM1 -7h1v1h-1zM3 -6h8v1h-8zM2 -5h2v1h-2zM8 -5h1v5h-1zM1 -4h3v1h-3zM3 -3h1v4h-1zM6 0h3v1h-3z"/><path id="g287" d="M1 -8h4v1h-4zM4 -7h1v5h-1zM1 -2h4v1h-4zM4 -1h1v1h-1z"/><path id="g288" d="M1 -9h1v3h-1zM3 -7h1v1h-1zM1 -6h2v1h-2zM1 -5h1v3h-1zM1 -2h4v1h-4z"/><path id="g289" d="M2 -10h1v1h-1zM5 -10h5v1h-5zM2 -9h2v1h-2zM5 -9h1v1h-1zM9 -9h1v1h-1zM3 -8h1v1h-1zM5 -8h5v2h-5zM1 -6h3v1h-3zM5 -6h1v3h-1zM10 -6h1v1h-1zM3 -5h1v3h-1zM7 -5h1v1h-1zM9 -5h1v1h-1zM8 -4h2v1h-2zM5 -3h3v1h-3zM10 -3h1v1h-1zM2 -2h1v1h-1zM4 -2h1v1h-1zM1 -1h1v1h-1zM5 -1h6v1h-6z"/><path id="g290" d="M9 -10h1v1h-1zM1 -9h1v1h-1zM4 -9h7v1h-7zM2 -8h1v1h-1zM4 -8h1v1h-1zM6 -8h1v1h-1zM8 -8h1v2h-1zM10 -8h1v2h-1zM4 -7h3v1h-3zM4 -6h1v1h-1zM7 -6h4v1h-4zM1 -5h2v1h-2zM4 -5h3v1h-3zM9 -5h1v1h-1zM2 -4h1v1h-1zM4 -4h1v1h-1zM6 -4h5v1h-5zM2 -3h3v1h-3zM6 -3h1v1h-1zM9 -3h1v2h-1zM2 -2h1v1h-1zM4 -2h3v1h-3zM1 -1h1v1h-1zM3 -1h8v1h-8z"/><path id="g291" d="M7 -10h1v2h-1zM1 -9h4v1h-4zM1 -8h1v1h-1zM4 -8h1v1h-1zM7 -8h4v1h-4zM1 -7h4v1h-4zM7 -7h1v2h-1zM1 -6h1v1h-1zM4 -6h1v1h-1zM1 -5h4v1h-4zM6 -5h5v1h-5zM1 -4h1v1h-1zM4 -4h1v1h-1zM6 -4h1v3h-1zM10 -4h1v3h-1zM1 -3h4v1h-4zM2 -2h2v1h-2zM1 -1h1v1h-1zM4 -1h1v1h-1zM6 -1h5v1h-5zM0 0h1v1h-1zM6 0h1v1h-1zM10 0h1v1h-1z"/><path id="g292" d="M3 -11h1v2h-1zM9 -11h1v3h-1zM2 -9h1v2h-1zM4 -8h7v1h-7zM1 -7h2v2h-2zM9 -7h1v6h-1zM5 -6h1v1h-1zM2 -5h1v5h-1zM6 -5h1v1h-1zM6 -4h2v1h-2zM7 -1h3v1h-3z"/><path id="g293" d="M2 -9h1v5h-1zM8 -9h1v2h-1zM8 -7h3v1h-3zM5 -6h4v1h-4zM8 -5h1v3h-1zM2 -4h2v2h-2zM2 -2h1v2h-1zM7 -2h1v1h-1zM6 -1h2v1h-2z"/><path id="g294" d="M4 -10h1v2h-1zM2 -8h5v1h-5zM8 -8h1v1h-1zM3 -7h1v3h-1zM9 -7h2v1h-2zM7 -6h1v3h-1zM10 -6h1v1h-1zM2 -4h1v1h-1zM1 -3h1v1h-1zM5 -3h3v1h-3zM4 -2h1v1h-1zM7 -2h4v1h-4zM5 -1h3v1h-3z"/><path id="g295" d="M3 -9h1v9h-1zM9 -3h1v1h-1zM8 -2h1v1h-1zM7 -1h1v1h-1zM4 0h3v1h-3z"/><path id="g296" d="M1 -9h4v1h-4zM1 -8h1v3h-1zM5 -8h1v3h-1zM1 -5h4v1h-4zM1 -4h1v3h-1z"/><path id="g297" d="M4 -10h1v2h-1zM8 -9h1v1h-1zM2 -8h5v1h-5zM9 -8h1v1h-1zM1 -7h1v1h-1zM4 -7h1v1h-1zM7 -7h1v4h-1zM9 -7h2v1h-2zM3 -6h1v2h-1zM10 -6h1v2h-1zM2 -4h1v2h-1zM6 -3h2v1h-2zM1 -2h1v1h-1zM4 -2h3v1h-3z"/><path id="g298" d="M4 -10h1v1h-1zM5 -9h2v1h-2zM3 -8h1v4h-1zM5 -5h4v1h-4zM3 -4h2v1h-2zM9 -4h1v2h-1zM3 -3h1v1h-1zM8 -2h2v1h-2zM5 -1h4v1h-4z"/><path id="g299" d="M2 -9h1v7h-1zM9 -9h1v5h-1zM5 -8h1v1h-1zM6 -7h1v1h-1zM8 -4h1v2h-1zM4 -3h2v1h-2zM2 -2h2v1h-2zM7 -2h1v1h-1zM9 -2h2v1h-2zM1 -1h1v1h-1zM5 -1h2v1h-2zM10 -1h2v1h-2zM4 0h1v1h-1z"/><path id="g300" d="M3 -11h1v1h-1zM7 -11h1v1h-1zM2 -10h1v1h-1zM6 -10h1v1h-1zM9 -10h1v1h-1zM1 -9h1v1h-1zM3 -9h1v2h-1zM5 -9h1v1h-1zM8 -9h1v1h-1zM6 -8h2v1h-2zM9 -8h1v1h-1zM2 -7h1v1h-1zM4 -7h7v1h-7zM1 -6h2v1h-2zM6 -6h1v1h-1zM10 -6h1v1h-1zM0 -5h1v1h-1zM2 -5h1v5h-1zM5 -5h5v1h-5zM5 -4h2v1h-2zM9 -4h1v1h-1zM4 -3h1v1h-1zM7 -3h2v1h-2zM6 -2h3v1h-3zM4 -1h2v1h-2zM9 -1h2v1h-2z"/><path id="g301" d="M3 -10h1v2h-1zM6 -9h4v1h-4zM2 -8h1v2h-1zM5 -8h1v1h-1zM7 -8h1v3h-1zM1 -6h2v2h-2zM4 -5h7v1h-7zM2 -4h1v5h-1zM7 -4h1v3h-1zM4 -1h7v1h-7z"/><path id="g302" d="M6 -10h1v1h-1zM1 -9h10v1h-10zM4 -8h1v1h-1zM8 -8h1v1h-1zM1 -7h10v1h-10zM2 -6h8v3h-8zM6 -3h1v1h-1zM2 -2h1v1h-1zM4 -2h1v2h-1zM6 -2h2v1h-2zM9 -2h1v1h-1zM1 -1h1v1h-1zM8 -1h1v1h-1zM10 -1h1v1h-1zM4 0h5v1h-5z"/><path id="g303" d="M1 -5h10v1h-10z"/><path id="g304" d="M2 -11h1v1h-1zM7 -11h1v1h-1zM2 -10h4v1h-4zM7 -10h4v1h-4zM1 -9h1v1h-1zM4 -9h1v1h-1zM6 -9h1v2h-1zM8 -9h1v1h-1zM2 -7h8v1h-8zM1 -6h10v1h-10zM2 -5h8v1h-8zM1 -4h10v2h-10zM6 -2h1v2h-1z"/><path id="g305" d="M4 -9h1v1h-1zM7 -9h1v1h-1zM1 -8h6v1h-6zM5 -7h1v1h-1zM7 -7h2v1h-2zM1 -6h6v1h-6zM6 -5h1v1h-1zM5 -4h1v1h-1zM7 -4h1v1h-1zM2 -3h1v2h-1zM6 -3h2v1h-2zM3 -1h4v1h-4z"/><path id="g306" d="M3 -10h1v2h-1zM7 -10h1v2h-1zM2 -8h1v2h-1zM4 -8h7v1h-7zM5 -7h1v1h-1zM8 -7h1v2h-1zM1 -6h2v2h-2zM6 -6h1v1h-1zM4 -5h7v1h-7zM2 -4h1v5h-1zM5 -4h5v1h-5zM5 -3h1v2h-1zM9 -3h1v2h-1zM5 -1h5v1h-5zM5 0h1v1h-1zM9 0h1v1h-1z"/><path id="g307" d="M3 -9h2v1h-2zM2 -8h1v1h-1zM4 -8h1v8h-1z"/><path id="g308" d="M1 -10h4v1h-4zM3 -9h1v7h-1zM1 -2h4v1h-4z"/><path id="g309" d="M11 -11h1v1h-1zM10 -10h1v2h-1zM9 -8h1v6h-1zM10 -2h1v2h-1zM11 0h1v1h-1z"/><path id="g310" d="M2 -12h1v2h-1zM7 -12h2v1h-2zM10 -12h2v1h-2zM6 -11h1v1h-1zM8 -11h1v1h-1zM10 -11h1v2h-1zM0 -10h2v1h-2zM3 -10h1v2h-1zM5 -10h2v1h-2zM1 -9h1v1h-1zM5 -9h1v1h-1zM7 -9h5v1h-5zM2 -8h2v1h-2zM6 -8h1v2h-1zM9 -8h1v1h-1zM0 -7h5v1h-5zM8 -7h2v1h-2zM2 -6h1v1h-1zM5 -6h2v1h-2zM8 -6h4v1h-4zM2 -5h2v1h-2zM6 -5h2v2h-2zM9 -5h1v2h-1zM0 -4h1v3h-1zM2 -4h1v4h-1zM4 -4h1v2h-1zM6 -3h1v1h-1zM8 -3h2v1h-2zM6 -2h2v2h-2zM9 -2h1v1h-1zM10 -1h2v1h-2z"/><path id="g311" d="M4 -10h1v2h-1zM7 -10h1v2h-1zM1 -8h11v1h-11zM1 -7h1v2h-1zM5 -7h1v2h-1zM7 -7h1v2h-1zM11 -7h1v2h-1zM1 -5h11v1h-11zM1 -4h1v3h-1zM5 -4h1v3h-1zM7 -4h1v3h-1zM11 -4h1v3h-1zM1 -1h11v1h-11zM1 0h1v1h-1zM11 0h1v1h-1z"/><path id="g312" d="M10 -12h2v1h-2zM3 -11h1v1h-1zM9 -11h2v1h-2zM12 -11h1v1h-1zM2 -10h1v5h-1zM9 -10h1v2h-1zM11 -9h1v1h-1zM5 -8h6v1h-6zM9 -7h1v4h-1zM2 -5h2v3h-2zM8 -3h1v1h-1zM2 -2h1v1h-1zM7 -2h1v1h-1zM6 -1h1v1h-1z"/><path id="g313" d="M1 -3h1v1h-1zM2 -2h1v2h-1z"/><path id="g314" d="M1 -10h3v1h-3zM7 -10h1v2h-1zM3 -9h1v2h-1zM10 -9h1v1h-1zM6 -8h1v1h-1zM10 -8h2v1h-2zM1 -7h3v1h-3zM5 -7h5v1h-5zM11 -7h1v1h-1zM1 -6h1v1h-1zM5 -6h7v1h-7zM1 -5h3v1h-3zM5 -5h1v2h-1zM8 -5h1v2h-1zM11 -5h1v2h-1zM1 -4h1v2h-1zM3 -4h1v4h-1zM5 -3h7v1h-7zM8 -2h1v1h-1zM11 -2h1v1h-1zM8 -1h4v1h-4zM1 0h7v1h-7zM12 0h1v1h-1z"/><path id="g315" d="M3 -11h1v2h-1zM9 -11h1v3h-1zM1 -9h5v1h-5zM3 -8h1v1h-1zM7 -8h5v1h-5zM1 -7h5v2h-5zM7 -7h1v2h-1zM9 -7h1v2h-1zM11 -7h1v2h-1zM1 -5h1v1h-1zM3 -5h1v1h-1zM5 -5h1v1h-1zM7 -5h5v1h-5zM1 -4h5v1h-5zM7 -4h1v3h-1zM9 -4h1v3h-1zM11 -4h1v3h-1zM3 -3h1v1h-1zM1 -2h5v1h-5zM3 -1h1v2h-1zM7 -1h5v1h-5zM7 0h1v1h-1zM11 0h1v1h-1z"/><path id="g316" d="M2 -10h9v1h-9zM2 -9h1v2h-1zM6 -9h1v2h-1zM10 -9h1v2h-1zM2 -7h9v1h-9zM2 -6h1v2h-1zM6 -6h1v2h-1zM10 -6h1v2h-1zM2 -4h9v1h-9zM2 -3h1v2h-1zM6 -3h1v3h-1zM10 -3h1v2h-1zM1 -1h1v2h-1zM8 -1h3v1h-3z"/><path id="g317" d="M1 -11h1v1h-1zM2 -10h1v2h-1zM3 -8h1v6h-1zM2 -2h1v2h-1zM1 0h1v1h-1z"/><path id="g318" d="M2 -7h2v1h-2zM2 -2h2v1h-2z"/><path id="g319" d="M1 -2h2v2h-2z"/><path id="g320" d="M3 -9h1v4h-1zM1 -5h5v1h-5zM3 -4h1v3h-1z"/><path id="g321" d="M1 -7h4v1h-4zM3 -6h2v1h-2zM3 -5h1v1h-1zM2 -4h1v1h-1zM1 -3h1v1h-1zM1 -2h5v1h-5z"/><path id="g322" d="M2 -11h1v3h-1zM6 -11h1v2h-1zM9 -11h1v2h-1zM5 -9h7v1h-7zM1 -8h4v1h-4zM6 -8h1v1h-1zM9 -8h1v1h-1zM2 -7h1v1h-1zM5 -7h7v2h-7zM2 -6h2v1h-2zM1 -5h2v3h-2zM4 -5h2v1h-2zM8 -5h1v1h-1zM11 -5h1v1h-1zM5 -4h7v1h-7zM5 -3h1v1h-1zM8 -3h1v1h-1zM11 -3h1v1h-1zM2 -2h1v3h-1zM5 -2h7v1h-7zM6 -1h2v1h-2zM9 -1h2v1h-2zM5 0h1v1h-1zM11 0h1v1h-1z"/><path id="g323" d="M1 -10h5v1h-5zM7 -10h5v1h-5zM5 -9h1v1h-1zM11 -9h1v1h-1zM1 -8h5v1h-5zM7 -8h5v1h-5zM1 -7h1v1h-1zM5 -7h1v1h-1zM7 -7h1v1h-1zM11 -7h1v1h-1zM1 -6h5v1h-5zM7 -6h5v1h-5zM1 -5h1v1h-1zM5 -5h1v2h-1zM7 -5h2v1h-2zM11 -5h1v2h-1zM2 -4h2v1h-2zM8 -4h1v1h-1zM4 -3h2v1h-2zM10 -3h2v1h-2zM2 -2h2v1h-2zM5 -2h1v2h-1zM8 -2h2v1h-2zM11 -2h1v2h-1zM1 -1h1v1h-1zM7 -1h1v1h-1zM3 0h3v1h-3zM9 0h3v1h-3z"/><path id="g324" d="M2 -10h2v2h-2zM2 -8h1v2h-1zM4 -8h1v3h-1zM1 -6h1v1h-1zM1 -5h4v1h-4zM1 -4h1v2h-1zM5 -4h1v3h-1zM0 -2h2v1h-2z"/><path id="g325" d="M1 -7h1v1h-1zM4 -7h1v2h-1zM2 -6h1v1h-1zM3 -5h1v1h-1zM2 -4h2v1h-2zM2 -3h1v1h-1zM4 -3h1v1h-1zM1 -2h1v1h-1zM4 -2h2v1h-2z"/><path id="g326" d="M1 -10h1v1h-1zM4 -10h1v1h-1zM7 -10h4v1h-4zM1 -9h2v1h-2zM4 -9h2v1h-2zM7 -9h1v2h-1zM1 -8h1v2h-1zM3 -8h3v1h-3zM4 -7h1v1h-1zM7 -7h5v1h-5zM1 -6h7v1h-7zM10 -6h1v7h-1zM1 -5h1v2h-1zM4 -5h1v1h-1zM7 -5h1v4h-1zM3 -4h3v1h-3zM1 -3h2v2h-2zM4 -3h1v2h-1zM1 -1h7v1h-7zM1 0h1v1h-1zM6 0h1v1h-1z"/><path id="g327" d="M1 -10h11v1h-11zM6 -9h1v1h-1zM5 -8h1v1h-1zM2 -7h9v1h-9zM2 -6h1v5h-1zM4 -6h1v1h-1zM8 -6h1v1h-1zM10 -6h1v5h-1zM4 -5h5v1h-5zM4 -4h1v1h-1zM8 -4h1v1h-1zM4 -3h5v1h-5zM4 -2h1v1h-1zM8 -2h1v1h-1zM2 -1h9v1h-9zM2 0h1v1h-1zM10 0h1v1h-1z"/><path id="g328" d="M4 -11h1v1h-1zM8 -11h1v1h-1zM1 -10h3v1h-3zM5 -10h7v1h-7zM3 -9h1v1h-1zM8 -9h1v1h-1zM1 -8h11v1h-11zM3 -7h1v1h-1zM5 -7h7v1h-7zM2 -6h2v2h-2zM6 -6h5v1h-5zM6 -5h1v1h-1zM10 -5h1v1h-1zM1 -4h1v2h-1zM3 -4h1v5h-1zM6 -4h5v1h-5zM6 -3h1v1h-1zM10 -3h1v1h-1zM6 -2h5v1h-5zM7 -1h1v1h-1zM9 -1h2v1h-2zM5 0h2v1h-2zM11 0h1v1h-1z"/><path id="g329" d="M5 -11h1v2h-1zM1 -9h11v1h-11zM5 -8h1v1h-1zM4 -7h1v1h-1zM4 -6h7v1h-7zM3 -5h1v1h-1zM7 -5h1v3h-1zM2 -4h1v1h-1zM1 -3h1v1h-1zM3 -2h9v1h-9z"/><path id="g330" d="M6 -11h1v1h-1zM5 -10h1v1h-1zM1 -9h11v1h-11zM5 -8h1v1h-1zM4 -7h1v1h-1zM3 -6h8v1h-8zM2 -5h3v1h-3zM10 -5h1v3h-1zM1 -4h2v1h-2zM4 -4h1v2h-1zM4 -2h7v1h-7zM4 -1h1v1h-1zM10 -1h1v1h-1z"/><path id="g331" d="M4 -11h1v1h-1zM8 -11h1v1h-1zM1 -10h11v1h-11zM2 -9h6v1h-6zM10 -9h1v3h-1zM2 -8h2v1h-2zM6 -8h2v2h-2zM2 -7h3v1h-3zM2 -6h1v1h-1zM4 -6h3v1h-3zM8 -6h3v1h-3zM1 -4h10v1h-10zM6 -3h1v1h-1zM10 -3h1v2h-1zM5 -2h1v1h-1zM1 -1h4v1h-4zM7 -1h4v1h-4z"/><path id="g332" d="M6 -10h1v3h-1zM6 -7h5v1h-5zM6 -6h1v5h-1zM1 -1h11v1h-11z"/><path id="g333" d="M1 -10h11v1h-11zM6 -9h1v2h-1zM6 -7h2v1h-2zM6 -6h1v7h-1zM8 -6h1v1h-1zM9 -5h2v1h-2zM10 -4h1v1h-1z"/><path id="g334" d="M1 -10h1v5h-1zM4 -7h1v1h-1zM3 -6h1v1h-1zM1 -5h3v1h-3zM1 -4h1v3h-1zM3 -4h1v1h-1zM4 -3h1v1h-1zM4 -2h2v1h-2z"/><path id="g335" d="M1 -10h11v1h-11zM1 -9h1v8h-1zM11 -9h1v8h-1zM4 -7h5v1h-5zM4 -6h1v3h-1zM8 -6h1v3h-1zM4 -3h5v1h-5zM1 -1h11v1h-11zM1 0h1v1h-1zM11 0h1v1h-1z"/><path id="g336" d="M3 -11h1v2h-1zM7 -10h5v1h-5zM1 -9h5v1h-5zM3 -8h1v1h-1zM1 -7h5v1h-5zM1 -6h11v1h-11zM1 -5h1v1h-1zM3 -5h1v1h-1zM5 -5h1v1h-1zM8 -5h1v4h-1zM1 -4h5v1h-5zM3 -3h1v1h-1zM10 -3h1v1h-1zM1 -2h5v1h-5zM11 -2h1v1h-1zM3 -1h1v2h-1zM7 -1h1v1h-1zM9 -1h3v1h-3zM6 0h3v1h-3z"/><path id="g337" d="M6 -11h1v5h-1zM2 -10h2v1h-2zM9 -10h1v3h-1zM3 -9h1v1h-1zM4 -8h1v1h-1zM2 -6h9v1h-9zM6 -5h1v1h-1zM1 -4h11v1h-11zM6 -3h1v4h-1z"/><path id="g338" d="M2 -10h2v1h-2zM5 -10h6v1h-6zM2 -9h1v1h-1zM6 -9h1v1h-1zM9 -9h1v2h-1zM0 -8h2v1h-2zM3 -8h2v1h-2zM7 -8h1v1h-1zM3 -7h1v1h-1zM8 -7h1v1h-1zM2 -6h1v1h-1zM6 -6h2v1h-2zM9 -6h2v1h-2zM1 -5h2v1h-2zM4 -5h2v1h-2zM8 -5h1v2h-1zM11 -5h1v1h-1zM0 -4h1v1h-1zM2 -4h1v5h-1zM5 -3h6v1h-6zM8 -2h1v1h-1zM4 -1h8v1h-8z"/><path id="g339" d="M1 -7h4v1h-4zM1 -6h1v1h-1zM4 -6h1v1h-1zM2 -5h1v1h-1zM3 -4h3v1h-3zM1 -3h1v1h-1zM5 -3h1v1h-1zM2 -2h3v1h-3z"/><path id="g340" d="M1 -7h3v1h-3zM1 -6h1v1h-1zM4 -6h1v1h-1zM3 -5h2v1h-2zM0 -4h3v1h-3zM4 -4h1v2h-1zM0 -3h1v1h-1zM0 -2h6v1h-6z"/><path id="g341" d="M1 -7h4v1h-4zM1 -6h1v5h-1zM5 -6h1v5h-1z"/><path id="g342" d="M2 -11h1v3h-1zM8 -11h1v3h-1zM5 -10h1v2h-1zM11 -10h1v2h-1zM1 -8h11v1h-11zM3 -7h1v5h-1zM1 -6h1v4h-1zM5 -6h7v1h-7zM7 -5h1v1h-1zM5 -4h7v1h-7zM5 -3h1v1h-1zM7 -3h1v4h-1zM9 -3h1v3h-1zM11 -3h1v3h-1zM3 -2h3v1h-3zM1 -1h2v1h-2zM5 -1h1v2h-1zM9 0h3v1h-3z"/><path id="g343" d="M1 -6h6v1h-6zM11 -6h1v1h-1zM1 -5h1v1h-1zM6 -5h6v1h-6z"/><path id="g344" d="M6 -11h1v3h-1zM2 -8h9v1h-9zM2 -7h1v3h-1zM6 -7h1v3h-1zM10 -7h1v3h-1zM2 -4h9v1h-9zM2 -3h1v1h-1zM6 -3h1v4h-1zM10 -3h1v1h-1z"/><path id="g345" d="M2 -11h1v2h-1zM8 -11h1v3h-1zM6 -10h1v1h-1zM2 -9h2v1h-2zM5 -9h1v1h-1zM1 -8h2v1h-2zM4 -8h8v1h-8zM0 -7h1v3h-1zM2 -7h1v8h-1zM4 -7h2v1h-2zM8 -7h1v3h-1zM4 -6h1v1h-1zM5 -4h7v1h-7zM8 -3h1v3h-1zM5 0h7v1h-7z"/><path id="g346" d="M2 -11h1v4h-1zM4 -11h4v1h-4zM11 -11h1v10h-1zM4 -10h1v1h-1zM7 -10h1v1h-1zM9 -10h1v7h-1zM4 -9h4v1h-4zM4 -8h1v2h-1zM7 -8h1v2h-1zM1 -7h2v2h-2zM4 -6h4v1h-4zM2 -5h1v4h-1zM4 -5h1v1h-1zM7 -5h1v1h-1zM4 -4h4v1h-4zM5 -3h2v1h-2zM4 -2h1v1h-1zM7 -2h1v1h-1zM2 -1h2v1h-2zM9 -1h3v1h-3z"/><path id="g347" d="M3 -11h1v1h-1zM7 -11h4v1h-4zM3 -10h5v1h-5zM2 -9h1v2h-1zM6 -9h1v1h-1zM9 -9h1v1h-1zM5 -8h1v1h-1zM8 -8h2v1h-2zM1 -7h2v2h-2zM6 -7h3v1h-3zM6 -6h2v1h-2zM10 -6h1v1h-1zM2 -5h1v5h-1zM4 -5h6v1h-6zM11 -5h1v1h-1zM5 -4h1v2h-1zM7 -4h1v4h-1zM9 -4h1v1h-1zM10 -3h1v1h-1zM4 -2h1v1h-1zM10 -2h2v1h-2z"/><path id="g348" d="M3 -11h1v3h-1zM5 -11h1v2h-1zM8 -11h1v2h-1zM1 -10h1v1h-1zM8 -9h4v1h-4zM1 -8h7v1h-7zM10 -8h1v4h-1zM2 -7h3v1h-3zM7 -7h1v2h-1zM1 -6h1v1h-1zM3 -6h1v1h-1zM5 -6h1v1h-1zM2 -5h1v1h-1zM8 -5h1v1h-1zM1 -4h6v1h-6zM8 -4h2v1h-2zM2 -3h1v2h-1zM5 -3h1v1h-1zM9 -3h1v1h-1zM4 -2h1v1h-1zM8 -2h2v1h-2zM3 -1h3v1h-3zM7 -1h2v1h-2zM10 -1h2v1h-2zM1 0h2v1h-2zM6 0h2v1h-2zM11 0h1v1h-1z"/><path id="g349" d="M1 -10h4v1h-4zM1 -9h1v3h-1zM5 -9h1v3h-1zM1 -6h4v1h-4zM1 -5h1v3h-1zM4 -5h2v1h-2zM5 -4h1v2h-1zM1 -2h4v1h-4z"/><path id="g350" d="M6 -11h1v1h-1zM5 -10h1v1h-1zM7 -10h1v1h-1zM4 -9h2v1h-2zM8 -9h1v1h-1zM4 -8h1v1h-1zM8 -8h2v1h-2zM3 -7h1v1h-1zM10 -7h1v1h-1zM1 -6h9v1h-9zM11 -6h1v1h-1zM6 -5h1v1h-1zM2 -4h9v1h-9zM6 -3h1v2h-1zM1 -1h11v1h-11z"/><path id="g351" d="M2 -11h1v3h-1zM5 -10h7v1h-7zM6 -9h5v1h-5zM1 -8h4v1h-4zM6 -8h1v2h-1zM10 -8h1v2h-1zM1 -7h2v4h-2zM4 -7h1v2h-1zM6 -6h5v1h-5zM4 -5h8v1h-8zM4 -4h2v1h-2zM8 -4h1v1h-1zM11 -4h1v1h-1zM1 -3h11v1h-11zM2 -2h1v3h-1zM5 -2h1v1h-1zM8 -2h1v1h-1zM11 -2h1v1h-1zM5 -1h7v1h-7zM5 0h1v1h-1zM11 0h1v1h-1z"/><path id="g352" d="M0 -10h4v1h-4zM1 -9h1v7h-1zM4 -9h1v1h-1zM5 -8h1v5h-1zM4 -3h1v1h-1zM0 -2h4v1h-4z"/><path id="g353" d="M1 -11h2v1h-2zM4 -11h8v1h-8zM2 -10h3v1h-3zM6 -10h1v2h-1zM8 -10h1v2h-1zM11 -10h1v2h-1zM1 -9h1v1h-1zM1 -8h2v1h-2zM5 -8h1v1h-1zM8 -8h4v1h-4zM2 -7h1v1h-1zM4 -7h1v1h-1zM7 -7h1v2h-1zM4 -5h8v1h-8zM3 -4h1v1h-1zM7 -4h2v1h-2zM2 -3h1v1h-1zM6 -3h2v1h-2zM9 -3h1v1h-1zM1 -2h1v2h-1zM4 -2h2v1h-2zM7 -2h1v2h-1zM10 -2h2v1h-2z"/><path id="g354" d="M5 -11h1v1h-1zM6 -10h1v1h-1zM9 -10h1v1h-1zM5 -9h4v1h-4zM3 -8h2v1h-2zM7 -8h1v1h-1zM8 -7h1v1h-1zM7 -6h2v1h-2zM8 -5h2v1h-2zM3 -4h1v1h-1zM3 -3h2v1h-2zM5 -2h4v1h-4z"/><path id="g355" d="M1 -9h1v1h-1zM4 -9h1v5h-1zM1 -8h2v4h-2zM1 -4h1v3h-1zM3 -4h2v2h-2zM4 -2h1v1h-1z"/><path id="g356" d="M1 -2h2v2h-2z"/><path id="g357" d="M1 -5h3v1h-3zM3 -4h1v1h-1zM2 -3h1v1h-1zM1 -2h1v1h-1zM1 -1h3v1h-3z"/><path id="g358" d="M1 -5h1v2h-1zM3 -5h1v2h-1zM1 -3h2v1h-2zM2 -2h1v2h-1zM1 0h1v1h-1z"/><path id="g359" d="M2 -9h1v8h-1zM8 -5h1v1h-1zM7 -4h1v1h-1zM6 -3h1v1h-1zM4 -2h2v1h-2zM2 -1h2v1h-2z"/><path id="g360" d="M5 -7h1v1h-1zM4 -6h1v1h-1zM2 -5h3v1h-3zM1 -4h1v1h-1zM4 -4h1v4h-1z"/><path id="g361" d="M1 -9h1v7h-1zM7 -9h1v7h-1zM1 -2h2v1h-2zM6 -2h2v1h-2zM2 -1h5v1h-5z"/><path id="g362" d="M1 -9h2v2h-2zM8 -9h2v2h-2zM1 -7h3v1h-3zM7 -7h1v3h-1zM9 -7h1v7h-1zM1 -6h1v6h-1zM3 -6h1v2h-1zM4 -4h1v3h-1zM6 -4h1v3h-1zM5 -1h1v1h-1z"/><path id="g363" d="M3 -7h1v3h-1zM3 -4h3v1h-3zM3 -3h1v3h-1zM6 -3h1v1h-1z"/><path id="g364" d="M2 -6h5v1h-5zM1 -4h7v1h-7zM6 -3h1v2h-1zM5 -1h1v1h-1zM3 0h2v1h-2z"/><path id="g365" d="M2 -6h1v2h-1zM4 -6h1v2h-1zM6 -6h1v2h-1zM5 -4h1v2h-1zM3 -2h2v1h-2z"/><path id="g366" d="M4 -7h1v2h-1zM1 -5h6v1h-6zM4 -4h1v1h-1zM6 -4h1v3h-1zM3 -3h2v1h-2zM3 -2h1v1h-1zM1 -1h2v1h-2zM5 -1h2v1h-2z"/><path id="g367" d="M3 -6h1v2h-1zM3 -4h2v1h-2zM3 -3h1v3h-1zM5 -3h2v1h-2z"/><path id="g368" d="M2 -6h4v1h-4zM1 -4h6v1h-6zM5 -3h1v2h-1zM4 -1h1v1h-1zM3 0h1v1h-1z"/><path id="g369" d="M1 -4h2v4h-2z"/><path id="g370" d="M2 -5h4v1h-4zM1 -2h6v1h-6z"/><clipPath id="cg"><rect x="12" y="490" width="404" height="199"/></clipPath></defs><g fill="#fff"><use href="#g0" x="23" y="18"/><use href="#g1" x="34" y="18"/><use href="#g2" x="46" y="18"/><use href="#g3" x="57" y="18"/><use href="#g4" x="68" y="18"/><use href="#g5" x="79" y="18"/><use href="#g6" x="83" y="18"/><use href="#g7" x="98" y="18"/><use href="#g8" x="105" y="18"/><use href="#g9" x="112" y="18"/><use href="#g10" x="115" y="18"/><use href="#g11" x="122" y="18"/><use href="#g12" x="129" y="18"/><use href="#g13" x="141" y="18"/><use href="#g14" x="149" y="18"/><use href="#g15" x="156" y="18"/><use href="#g16" x="163" y="18"/><use href="#g17" x="168" y="18"/><use href="#g18" x="176" y="18"/><use href="#g19" x="179" y="18"/><use href="#g20" x="185" y="18"/><use href="#g21" x="192" y="18"/><use href="#g22" x="196" y="18"/><use href="#g23" x="202" y="18"/><use href="#g24" x="213" y="18"/><use href="#g25" x="224" y="18"/><use href="#g26" x="233" y="18"/><use href="#g27" x="240" y="18"/><use href="#g28" x="250" y="18"/><use href="#g29" x="260" y="18"/><use href="#g30" x="271" y="18"/><use href="#g12" x="279" y="18"/><use href="#g31" x="291" y="18"/><use href="#g1" x="302" y="18"/><use href="#g32" x="313" y="18"/><use href="#g33" x="324" y="18"/><use href="#g34" x="336" y="18"/><use href="#g35" x="347" y="18"/><use href="#g36" x="358" y="18"/><use href="#g37" x="364" y="18"/><use href="#g38" x="375" y="18"/><use href="#g8" x="382" y="18"/><use href="#g39" x="389" y="18"/><use href="#g40" x="396" y="18"/><use href="#g12" x="408" y="18"/><use href="#g10" x="419" y="18"/><use href="#g5" x="426" y="18"/><use href="#g10" x="430" y="18"/></g><g fill="#000"><use href="#g41" x="9" y="35"/><use href="#g42" x="17" y="35"/><use href="#g43" x="24" y="35"/><use href="#g44" x="32" y="35"/><use href="#g45" x="42" y="35"/><use href="#g46" x="45" y="35"/><use href="#g47" x="51" y="35"/><path d="M45 36h7v1h-7z"/></g><g fill="#000"><use href="#g48" x="66" y="35"/><use href="#g49" x="79" y="35"/><use href="#g45" x="92" y="35"/><use href="#g50" x="96" y="35"/><use href="#g47" x="104" y="35"/><path d="M96 36h7v1h-7z"/></g><g fill="#000"><use href="#g0" x="119" y="35"/><use href="#g1" x="132" y="35"/><use href="#g51" x="145" y="35"/><use href="#g52" x="157" y="35"/><use href="#g45" x="170" y="35"/><use href="#g53" x="175" y="35"/><use href="#g47" x="182" y="35"/><path d="M175 36h7v1h-7z"/></g><g fill="#000"><use href="#g54" x="198" y="35"/><use href="#g55" x="211" y="35"/><use href="#g56" x="217" y="35"/><use href="#g45" x="230" y="35"/><use href="#g57" x="234" y="35"/><use href="#g47" x="242" y="35"/><path d="M234 36h7v1h-7z"/></g><g fill="#000"><use href="#g58" x="257" y="35"/><use href="#g59" x="269" y="35"/><use href="#g45" x="282" y="35"/><use href="#g60" x="286" y="35"/><use href="#g47" x="293" y="35"/><path d="M286 36h7v1h-7z"/></g><g fill="#000"><use href="#g61" x="309" y="35"/><use href="#g62" x="320" y="35"/><use href="#g63" x="330" y="35"/><use href="#g45" x="339" y="35"/><use href="#g64" x="343" y="35"/><use href="#g47" x="351" y="35"/><path d="M343 36h7v1h-7z"/></g><g fill="#000"><use href="#g0" x="367" y="35"/><use href="#g1" x="379" y="35"/><use href="#g2" x="392" y="35"/><use href="#g3" x="404" y="35"/><use href="#g45" x="416" y="35"/><use href="#g13" x="420" y="35"/><use href="#g47" x="429" y="35"/><path d="M420 36h7v1h-7z"/></g><g fill="#000"><use href="#g65" x="445" y="35"/><use href="#g64" x="448" y="35"/><use href="#g66" x="457" y="35"/><use href="#g64" x="469" y="35"/><use href="#g46" x="478" y="35"/><use href="#g45" x="485" y="35"/><use href="#g65" x="489" y="35"/><use href="#g47" x="492" y="35"/><path d="M489 36h7v1h-7z"/></g><g fill="#000"><use href="#g67" x="507" y="35"/><use href="#g68" x="519" y="35"/><use href="#g13" x="531" y="35"/><use href="#g53" x="540" y="35"/><use href="#g7" x="546" y="35"/><use href="#g69" x="554" y="35"/><use href="#g70" x="566" y="35"/><use href="#g45" x="578" y="35"/><use href="#g71" x="582" y="35"/><use href="#g47" x="593" y="35"/><path d="M582 36h7v1h-7z"/></g><g fill="#000"><use href="#g67" x="609" y="35"/><use href="#g68" x="621" y="35"/><use href="#g72" x="634" y="35"/><use href="#g73" x="646" y="35"/><use href="#g45" x="658" y="35"/><use href="#g57" x="662" y="35"/><use href="#g47" x="670" y="35"/><path d="M662 36h7v1h-7z"/></g><g fill="#000"><use href="#g74" x="686" y="35"/><use href="#g75" x="699" y="35"/><use href="#g76" x="711" y="35"/><use href="#g77" x="724" y="35"/><use href="#g45" x="737" y="35"/><use href="#g78" x="741" y="35"/><use href="#g47" x="749" y="35"/><path d="M741 36h7v1h-7z"/></g><g fill="#000"><use href="#g79" x="65" y="63"/><use href="#g80" x="70" y="63"/><use href="#g81" x="75" y="63"/></g><g fill="#000"><use href="#g82" x="249" y="55"/><use href="#g83" x="261" y="55"/></g><g fill="#000"><use href="#g84" x="249" y="63"/><use href="#g85" x="260" y="63"/></g><g fill="#fff"><use href="#g86" x="29" y="87"/><use href="#g87" x="40" y="87"/><use href="#g88" x="51" y="87"/><use href="#g89" x="63" y="87"/><use href="#g90" x="74" y="87"/><use href="#g38" x="77" y="87"/><use href="#g10" x="84" y="87"/><use href="#g10" x="91" y="87"/><use href="#g91" x="98" y="87"/><use href="#g86" x="102" y="87"/><use href="#g41" x="113" y="87"/><use href="#g42" x="122" y="87"/><use href="#g43" x="130" y="87"/><use href="#g44" x="138" y="87"/><use href="#g90" x="149" y="87"/><use href="#g53" x="153" y="87"/><use href="#g17" x="159" y="87"/><use href="#g92" x="167" y="87"/><use href="#g93" x="174" y="87"/><use href="#g11" x="183" y="87"/><use href="#g91" x="190" y="87"/><use href="#g94" x="194" y="87"/><use href="#g86" x="201" y="87"/><use href="#g65" x="212" y="87"/><use href="#g64" x="215" y="87"/><use href="#g95" x="224" y="87"/><use href="#g2" x="231" y="87"/><use href="#g3" x="242" y="87"/><use href="#g96" x="253" y="87"/><use href="#g97" x="264" y="87"/><use href="#g49" x="275" y="87"/><use href="#g86" x="287" y="87"/><use href="#g98" x="298" y="87"/><use href="#g99" x="309" y="87"/><use href="#g56" x="320" y="87"/><use href="#g100" x="331" y="87"/><use href="#g101" x="342" y="87"/><use href="#g86" x="351" y="87"/><use href="#g9" x="362" y="87"/><use href="#g9" x="365" y="87"/><use href="#g9" x="368" y="87"/></g><g fill="#f0f0f0"><use href="#g102" x="127" y="121"/><use href="#g103" x="143" y="121"/><use href="#g104" x="159" y="121"/><use href="#g105" x="176" y="121"/><use href="#g106" x="192" y="121"/><use href="#g107" x="208" y="121"/><use href="#g108" x="216" y="121"/><use href="#g109" x="232" y="121"/><use href="#g110" x="249" y="121"/><use href="#g111" x="265" y="121"/><use href="#g112" x="281" y="121"/></g><g fill="#e0e0e0"><use href="#g113" x="36" y="148"/><use href="#g114" x="44" y="148"/></g><g fill="#e0e0e0"><use href="#g115" x="60" y="148"/><use href="#g116" x="68" y="148"/><use href="#g117" x="75" y="148"/><use href="#g118" x="83" y="148"/></g><g fill="#e0e0e0"><use href="#g119" x="116" y="148"/><use href="#g120" x="124" y="148"/><use href="#g119" x="131" y="148"/><use href="#g121" x="139" y="148"/></g><g fill="#e0e0e0"><use href="#g122" x="188" y="148"/><use href="#g120" x="195" y="148"/><use href="#g122" x="203" y="148"/><use href="#g121" x="210" y="148"/></g><g fill="#e0e0e0"><use href="#g123" x="251" y="148"/><use href="#g120" x="266" y="148"/><use href="#g124" x="281" y="148"/></g><g fill="#e0e0e0"><use href="#g123" x="308" y="148"/><use href="#g120" x="315" y="148"/><use href="#g125" x="322" y="148"/><use href="#g126" x="337" y="148"/></g><g fill="#e0e0e0"><use href="#g123" x="348" y="148"/><use href="#g120" x="355" y="148"/><use href="#g125" x="362" y="148"/><use href="#g127" x="376" y="148"/></g><g fill="#e0e0e0"><use href="#g123" x="388" y="148"/><use href="#g120" x="396" y="148"/><use href="#g128" x="403" y="148"/></g><g fill="#000"><use href="#g126" x="43" y="167"/></g><g fill="#000"><use href="#g129" x="85" y="167"/></g><g fill="#000"><use href="#g130" x="143" y="167"/><use href="#g131" x="151" y="167"/><use href="#g132" x="155" y="167"/></g><g fill="#000"><use href="#g130" x="206" y="167"/><use href="#g131" x="214" y="167"/><use href="#g132" x="218" y="167"/><use href="#g133" x="226" y="167"/></g><g fill="#000"><use href="#g127" x="41" y="185"/></g><g fill="#000"><use href="#g134" x="83" y="185"/></g><g fill="#000"><use href="#g133" x="154" y="185"/></g><g fill="#000"><use href="#g130" x="206" y="185"/><use href="#g131" x="214" y="185"/><use href="#g132" x="218" y="185"/><use href="#g133" x="226" y="185"/></g><g fill="#000"><use href="#g132" x="299" y="185"/></g><g fill="#000"><use href="#g133" x="338" y="185"/></g><g fill="#000"><use href="#g135" x="362" y="185"/><use href="#g136" x="370" y="185"/><use href="#g133" x="378" y="185"/></g><g fill="#000"><use href="#g133" x="402" y="185"/></g><g fill="#000"><use href="#g137" x="41" y="203"/></g><g fill="#000"><use href="#g134" x="83" y="203"/></g><g fill="#000"><use href="#g133" x="154" y="203"/></g><g fill="#000"><use href="#g138" x="202" y="203"/><use href="#g130" x="207" y="203"/><use href="#g131" x="215" y="203"/><use href="#g132" x="218" y="203"/><use href="#g133" x="226" y="203"/></g><g fill="#000"><use href="#g130" x="286" y="203"/><use href="#g131" x="294" y="203"/><use href="#g133" x="298" y="203"/></g><g fill="#000"><use href="#g139" x="330" y="203"/><use href="#g133" x="338" y="203"/></g><g fill="#000"><use href="#g129" x="362" y="203"/><use href="#g140" x="370" y="203"/><use href="#g133" x="378" y="203"/></g><g fill="#000"><use href="#g129" x="405" y="203"/></g><g fill="#000"><use href="#g141" x="41" y="221"/></g><g fill="#000"><use href="#g129" x="85" y="221"/></g><g fill="#000"><use href="#g138" x="150" y="221"/><use href="#g132" x="155" y="221"/></g><g fill="#000"><use href="#g138" x="202" y="221"/><use href="#g130" x="207" y="221"/><use href="#g131" x="215" y="221"/><use href="#g132" x="218" y="221"/><use href="#g133" x="226" y="221"/></g><g fill="#000"><use href="#g142" x="42" y="239"/></g><g fill="#000"><use href="#g134" x="83" y="239"/></g><g fill="#000"><use href="#g133" x="142" y="239"/><use href="#g131" x="150" y="239"/><use href="#g133" x="154" y="239"/></g><g fill="#000"><use href="#g138" x="202" y="239"/><use href="#g130" x="207" y="239"/><use href="#g131" x="215" y="239"/><use href="#g132" x="218" y="239"/><use href="#g133" x="226" y="239"/></g><g fill="#000"><use href="#g132" x="286" y="239"/><use href="#g131" x="294" y="239"/><use href="#g133" x="298" y="239"/></g><g fill="#000"><use href="#g129" x="322" y="239"/><use href="#g140" x="330" y="239"/><use href="#g133" x="338" y="239"/></g><g fill="#000"><use href="#g139" x="370" y="239"/><use href="#g133" x="378" y="239"/></g><g fill="#000"><use href="#g133" x="402" y="239"/></g><g fill="#000"><use href="#g143" x="41" y="257"/></g><g fill="#000"><use href="#g134" x="83" y="257"/></g><g fill="#000"><use href="#g133" x="154" y="257"/></g><g fill="#000"><use href="#g130" x="206" y="257"/><use href="#g131" x="214" y="257"/><use href="#g132" x="218" y="257"/><use href="#g133" x="226" y="257"/></g><g fill="#000"><use href="#g130" x="286" y="257"/><use href="#g131" x="294" y="257"/><use href="#g133" x="298" y="257"/></g><g fill="#000"><use href="#g135" x="322" y="257"/><use href="#g136" x="330" y="257"/><use href="#g133" x="338" y="257"/></g><g fill="#000"><use href="#g133" x="378" y="257"/></g><g fill="#000"><use href="#g129" x="405" y="257"/></g><g fill="#000"><use href="#g144" x="41" y="275"/></g><g fill="#000"><use href="#g145" x="41" y="293"/></g><g fill="#000"><use href="#g146" x="41" y="311"/></g><g fill="#000"><use href="#g126" x="35" y="329"/><use href="#g147" x="41" y="329"/></g><g fill="#000"><use href="#g126" x="37" y="347"/><use href="#g126" x="43" y="347"/></g><g fill="#000"><use href="#g126" x="35" y="365"/><use href="#g127" x="41" y="365"/></g><g fill="#000"><use href="#g126" x="35" y="383"/><use href="#g137" x="41" y="383"/></g><g fill="#000"><use href="#g126" x="35" y="401"/><use href="#g141" x="41" y="401"/></g><g fill="#000"><use href="#g126" x="36" y="419"/><use href="#g142" x="42" y="419"/></g><g fill="#000"><use href="#g148" x="43" y="451"/><use href="#g149" x="57" y="451"/><use href="#g150" x="72" y="451"/><use href="#g151" x="86" y="451"/><use href="#g152" x="100" y="451"/><use href="#g153" x="115" y="451"/><use href="#g154" x="129" y="451"/></g><g fill="#c0c0c0"><use href="#g86" x="29" y="483"/><use href="#g155" x="40" y="483"/><use href="#g156" x="52" y="483"/><use href="#g157" x="63" y="483"/><use href="#g43" x="74" y="483"/><use href="#g158" x="83" y="483"/><use href="#g159" x="93" y="483"/><use href="#g160" x="103" y="483"/><use href="#g86" x="113" y="483"/><use href="#g51" x="125" y="483"/><use href="#g52" x="136" y="483"/><use href="#g0" x="147" y="483"/><use href="#g1" x="159" y="483"/><use href="#g63" x="170" y="483"/><use href="#g43" x="180" y="483"/><use href="#g161" x="188" y="483"/><use href="#g162" x="199" y="483"/><use href="#g163" x="209" y="483"/><use href="#g164" x="221" y="483"/><use href="#g86" x="232" y="483"/></g><g fill="#000"><g clip-path="url(#cg)"><use href="#g165" x="19" y="502"/><use href="#g166" x="33" y="502"/><use href="#g167" x="47" y="502"/><use href="#g152" x="61" y="502"/><use href="#g168" x="76" y="502"/><use href="#g169" x="90" y="502"/><use href="#g170" x="104" y="502"/><use href="#g171" x="111" y="502"/><use href="#g172" x="125" y="502"/><use href="#g173" x="139" y="502"/><use href="#g174" x="153" y="502"/><use href="#g166" x="167" y="502"/><use href="#g167" x="182" y="502"/><use href="#g175" x="196" y="502"/><use href="#g176" x="210" y="502"/><use href="#g177" x="224" y="502"/></g></g><g fill="#005a20"><g clip-path="url(#cg)"><use href="#g178" x="26" y="515"/><use href="#g179" x="33" y="515"/><use href="#g180" x="40" y="515"/><use href="#g167" x="54" y="515"/><use href="#g181" x="69" y="515"/><use href="#g182" x="83" y="515"/><use href="#g183" x="90" y="515"/><use href="#g184" x="104" y="515"/><use href="#g185" x="118" y="515"/><use href="#g186" x="132" y="515"/><use href="#g174" x="146" y="515"/><use href="#g187" x="161" y="515"/><use href="#g188" x="175" y="515"/><use href="#g189" x="189" y="515"/></g></g><g fill="#005a20"><g clip-path="url(#cg)"><use href="#g190" x="27" y="528"/><use href="#g179" x="34" y="528"/><use href="#g191" x="41" y="528"/><use href="#g192" x="55" y="528"/><use href="#g181" x="70" y="528"/><use href="#g191" x="84" y="528"/><use href="#g193" x="98" y="528"/><use href="#g194" x="112" y="528"/><use href="#g174" x="126" y="528"/><use href="#g195" x="140" y="528"/><use href="#g172" x="154" y="528"/><use href="#g175" x="169" y="528"/><use href="#g176" x="183" y="528"/><use href="#g189" x="197" y="528"/></g></g><g fill="#005a20"><g clip-path="url(#cg)"><use href="#g196" x="26" y="541"/><use href="#g179" x="33" y="541"/><use href="#g191" x="40" y="541"/><use href="#g192" x="54" y="541"/><use href="#g181" x="68" y="541"/><use href="#g197" x="83" y="541"/><use href="#g198" x="97" y="541"/><use href="#g199" x="111" y="541"/><use href="#g200" x="118" y="541"/><use href="#g201" x="132" y="541"/><use href="#g199" x="146" y="541"/><use href="#g191" x="153" y="541"/><use href="#g193" x="167" y="541"/><use href="#g202" x="182" y="541"/><use href="#g175" x="196" y="541"/><use href="#g176" x="210" y="541"/><use href="#g189" x="224" y="541"/></g></g><g fill="#000"><g clip-path="url(#cg)"><use href="#g165" x="19" y="554"/><use href="#g203" x="33" y="554"/><use href="#g204" x="48" y="554"/><use href="#g170" x="62" y="554"/><use href="#g205" x="69" y="554"/><use href="#g206" x="83" y="554"/><use href="#g203" x="98" y="554"/><use href="#g204" x="112" y="554"/><use href="#g207" x="126" y="554"/><use href="#g175" x="140" y="554"/><use href="#g176" x="155" y="554"/><use href="#g177" x="169" y="554"/></g></g><g fill="#005a20"><g clip-path="url(#cg)"><use href="#g178" x="26" y="567"/><use href="#g179" x="41" y="567"/><use href="#g208" x="48" y="567"/><use href="#g205" x="62" y="567"/><use href="#g206" x="77" y="567"/></g></g><g fill="#005a20"><g clip-path="url(#cg)"><use href="#g209" x="27" y="580"/><use href="#g179" x="41" y="580"/><use href="#g210" x="48" y="580"/><use href="#g205" x="63" y="580"/><use href="#g206" x="77" y="580"/><use href="#g181" x="91" y="580"/><use href="#g211" x="105" y="580"/><use href="#g176" x="119" y="580"/><use href="#g212" x="134" y="580"/><use href="#g213" x="148" y="580"/><use href="#g189" x="162" y="580"/></g></g><g fill="#000"><g clip-path="url(#cg)"><use href="#g165" x="19" y="593"/><use href="#g202" x="33" y="593"/><use href="#g214" x="47" y="593"/><use href="#g170" x="61" y="593"/><use href="#g215" x="68" y="593"/><use href="#g216" x="75" y="593"/><use href="#g217" x="82" y="593"/><use href="#g199" x="90" y="593"/><use href="#g218" x="97" y="593"/><use href="#g219" x="111" y="593"/><use href="#g175" x="125" y="593"/><use href="#g176" x="139" y="593"/><use href="#g177" x="153" y="593"/></g></g><g fill="#005a20"><g clip-path="url(#cg)"><use href="#g208" x="26" y="606"/><use href="#g220" x="39" y="606"/><use href="#g221" x="52" y="606"/><use href="#g222" x="65" y="606"/><use href="#g210" x="91" y="606"/><use href="#g205" x="104" y="606"/><use href="#g223" x="118" y="606"/><use href="#g224" x="131" y="606"/><use href="#g225" x="144" y="606"/><use href="#g226" x="150" y="606"/><use href="#g196" x="163" y="606"/><use href="#g227" x="170" y="606"/><use href="#g225" x="176" y="606"/><use href="#g222" x="183" y="606"/><use href="#g228" x="209" y="606"/><use href="#g229" x="222" y="606"/><use href="#g230" x="235" y="606"/><use href="#g231" x="248" y="606"/><use href="#g232" x="261" y="606"/><use href="#g233" x="274" y="606"/><use href="#g234" x="287" y="606"/><use href="#g235" x="301" y="606"/><use href="#g236" x="314" y="606"/><use href="#g237" x="327" y="606"/><use href="#g238" x="340" y="606"/><use href="#g184" x="353" y="606"/><use href="#g239" x="366" y="606"/><use href="#g218" x="379" y="606"/></g></g><g fill="#000"><g clip-path="url(#cg)"><use href="#g165" x="19" y="619"/><use href="#g195" x="33" y="619"/><use href="#g172" x="48" y="619"/><use href="#g175" x="62" y="619"/><use href="#g176" x="76" y="619"/><use href="#g191" x="90" y="619"/><use href="#g192" x="104" y="619"/><use href="#g174" x="119" y="619"/><use href="#g188" x="133" y="619"/><use href="#g240" x="147" y="619"/><use href="#g174" x="162" y="619"/><use href="#g241" x="176" y="619"/><use href="#g242" x="190" y="619"/></g></g><g fill="#005a20"><g clip-path="url(#cg)"><use href="#g171" x="27" y="632"/><use href="#g243" x="41" y="632"/><use href="#g172" x="55" y="632"/><use href="#g183" x="69" y="632"/><use href="#g184" x="83" y="632"/><use href="#g207" x="97" y="632"/><use href="#g191" x="111" y="632"/><use href="#g192" x="126" y="632"/><use href="#g184" x="140" y="632"/><use href="#g244" x="154" y="632"/><use href="#g245" x="168" y="632"/><use href="#g183" x="182" y="632"/><use href="#g246" x="196" y="632"/><use href="#g247" x="210" y="632"/><use href="#g171" x="224" y="632"/><use href="#g172" x="238" y="632"/><use href="#g174" x="252" y="632"/><use href="#g166" x="266" y="632"/><use href="#g167" x="280" y="632"/><use href="#g248" x="294" y="632"/><use href="#g249" x="302" y="632"/><use href="#g250" x="309" y="632"/><use href="#g251" x="316" y="632"/><use href="#g252" x="323" y="632"/><use href="#g248" x="337" y="632"/><use href="#g253" x="344" y="632"/><use href="#g254" x="351" y="632"/><use href="#g255" x="358" y="632"/><use href="#g184" x="365" y="632"/><use href="#g246" x="379" y="632"/><use href="#g247" x="393" y="632"/></g></g><g fill="#005a20"><g clip-path="url(#cg)"><use href="#g256" x="26" y="645"/><use href="#g257" x="39" y="645"/><use href="#g174" x="53" y="645"/><use href="#g191" x="66" y="645"/><use href="#g192" x="79" y="645"/><use href="#g252" x="92" y="645"/><use href="#g197" x="106" y="645"/><use href="#g198" x="119" y="645"/><use href="#g202" x="132" y="645"/><use href="#g258" x="152" y="645"/><use href="#g178" x="172" y="645"/><use href="#g259" x="179" y="645"/><use href="#g225" x="186" y="645"/><use href="#g222" x="192" y="645"/><use href="#g174" x="212" y="645"/><use href="#g187" x="225" y="645"/><use href="#g188" x="239" y="645"/><use href="#g247" x="252" y="645"/></g></g><g fill="#000"><g clip-path="url(#cg)"><use href="#g165" x="19" y="658"/><use href="#g260" x="34" y="658"/><use href="#g261" x="48" y="658"/><use href="#g262" x="63" y="658"/><use href="#g263" x="78" y="658"/></g></g><g fill="#005a20"><g clip-path="url(#cg)"><use href="#g264" x="19" y="671"/><use href="#g248" x="26" y="671"/><use href="#g255" x="33" y="671"/><use href="#g265" x="40" y="671"/><use href="#g199" x="48" y="671"/><use href="#g266" x="55" y="671"/><use href="#g267" x="62" y="671"/><use href="#g268" x="69" y="671"/><use href="#g199" x="76" y="671"/><use href="#g269" x="83" y="671"/><use href="#g270" x="98" y="671"/><use href="#g271" x="112" y="671"/><use href="#g272" x="126" y="671"/><use href="#g273" x="140" y="671"/><use href="#g255" x="147" y="671"/><use href="#g184" x="155" y="671"/><use href="#g274" x="169" y="671"/><use href="#g275" x="176" y="671"/><use href="#g276" x="183" y="671"/><use href="#g277" x="197" y="671"/><use href="#g278" x="212" y="671"/><use href="#g247" x="226" y="671"/></g></g><g fill="#005a20"><g clip-path="url(#cg)"><use href="#g279" x="19" y="684"/><use href="#g280" x="26" y="684"/><use href="#g281" x="33" y="684"/><use href="#g282" x="40" y="684"/><use href="#g283" x="47" y="684"/><use href="#g284" x="54" y="684"/><use href="#g285" x="60" y="684"/><use href="#g279" x="67" y="684"/><use href="#g285" x="74" y="684"/><use href="#g179" x="88" y="684"/><use href="#g179" x="95" y="684"/><use href="#g256" x="109" y="684"/><use href="#g286" x="123" y="684"/><use href="#g287" x="136" y="684"/><use href="#g288" x="143" y="684"/><use href="#g251" x="150" y="684"/><use href="#g255" x="157" y="684"/><use href="#g289" x="164" y="684"/><use href="#g290" x="178" y="684"/><use href="#g181" x="219" y="684"/><use href="#g291" x="233" y="684"/><use href="#g292" x="247" y="684"/><use href="#g293" x="261" y="684"/><use href="#g294" x="274" y="684"/><use href="#g295" x="288" y="684"/><use href="#g189" x="302" y="684"/></g></g><g fill="#005a20"><g clip-path="url(#cg)"><use href="#g279" x="19" y="697"/><use href="#g280" x="26" y="697"/><use href="#g281" x="32" y="697"/><use href="#g282" x="39" y="697"/><use href="#g283" x="45" y="697"/><use href="#g284" x="52" y="697"/><use href="#g285" x="59" y="697"/><use href="#g296" x="65" y="697"/><use href="#g285" x="72" y="697"/><use href="#g179" x="85" y="697"/><use href="#g179" x="92" y="697"/><use href="#g256" x="105" y="697"/><use href="#g286" x="118" y="697"/><use href="#g289" x="132" y="697"/><use href="#g290" x="145" y="697"/><use href="#g297" x="158" y="697"/><use href="#g298" x="171" y="697"/><use href="#g174" x="184" y="697"/><use href="#g291" x="198" y="697"/><use href="#g292" x="211" y="697"/><use href="#g293" x="224" y="697"/><use href="#g170" x="237" y="697"/><use href="#g299" x="244" y="697"/><use href="#g300" x="257" y="697"/><use href="#g289" x="271" y="697"/><use href="#g290" x="284" y="697"/><use href="#g177" x="297" y="697"/></g></g><g fill="#c0c0c0"><use href="#g301" x="461" y="87"/><use href="#g302" x="473" y="87"/><use href="#g0" x="485" y="87"/><use href="#g1" x="497" y="87"/><use href="#g11" x="509" y="87"/><use href="#g45" x="516" y="87"/><use href="#g303" x="520" y="87"/><use href="#g304" x="532" y="87"/><use href="#g69" x="544" y="87"/><use href="#g305" x="556" y="87"/><use href="#g47" x="566" y="87"/><use href="#g74" x="574" y="87"/><use href="#g75" x="585" y="87"/><use href="#g306" x="597" y="87"/><use href="#g89" x="609" y="87"/><use href="#g95" x="621" y="87"/><use href="#g307" x="629" y="87"/></g><g fill="#000"><use href="#g308" x="467" y="121"/><use href="#g116" x="474" y="121"/><use href="#g309" x="481" y="121"/><use href="#g310" x="496" y="121"/><use href="#g311" x="510" y="121"/><use href="#g312" x="525" y="121"/><use href="#g313" x="539" y="121"/><use href="#g314" x="554" y="121"/><use href="#g315" x="568" y="121"/><use href="#g316" x="583" y="121"/><use href="#g317" x="597" y="121"/></g><g fill="#000"><use href="#g318" x="600" y="121"/></g><g fill="#000"><use href="#g126" x="620" y="121"/><use href="#g319" x="627" y="121"/><use href="#g143" x="634" y="121"/><use href="#g142" x="642" y="121"/><use href="#g146" x="649" y="121"/><use href="#g143" x="656" y="121"/><use href="#g118" x="663" y="121"/><use href="#g320" x="670" y="121"/><use href="#g147" x="678" y="121"/><use href="#g147" x="685" y="121"/><use href="#g137" x="692" y="121"/></g><g fill="#000"><use href="#g308" x="467" y="134"/><use href="#g321" x="474" y="134"/><use href="#g309" x="481" y="134"/><use href="#g322" x="496" y="134"/><use href="#g311" x="510" y="134"/><use href="#g312" x="525" y="134"/><use href="#g313" x="539" y="134"/><use href="#g323" x="554" y="134"/><use href="#g315" x="568" y="134"/><use href="#g316" x="583" y="134"/><use href="#g317" x="597" y="134"/></g><g fill="#000"><use href="#g318" x="600" y="134"/></g><g fill="#000"><use href="#g141" x="622" y="134"/><use href="#g319" x="629" y="134"/><use href="#g137" x="636" y="134"/><use href="#g141" x="643" y="134"/><use href="#g144" x="650" y="134"/><use href="#g127" x="657" y="134"/><use href="#g118" x="664" y="134"/><use href="#g320" x="671" y="134"/><use href="#g147" x="678" y="134"/><use href="#g147" x="685" y="134"/><use href="#g127" x="692" y="134"/></g><g fill="#000"><use href="#g308" x="467" y="147"/><use href="#g116" x="475" y="147"/><use href="#g320" x="482" y="147"/><use href="#g308" x="490" y="147"/><use href="#g321" x="498" y="147"/></g><g fill="#000"><use href="#g318" x="600" y="147"/></g><g fill="#000"><use href="#g127" x="621" y="147"/><use href="#g319" x="628" y="147"/><use href="#g147" x="635" y="147"/><use href="#g146" x="642" y="147"/><use href="#g141" x="649" y="147"/><use href="#g137" x="656" y="147"/><use href="#g118" x="664" y="147"/><use href="#g320" x="671" y="147"/><use href="#g147" x="678" y="147"/><use href="#g147" x="685" y="147"/><use href="#g137" x="692" y="147"/></g><g fill="#000"><use href="#g324" x="468" y="160"/><use href="#g325" x="475" y="160"/><use href="#g309" x="482" y="160"/><use href="#g326" x="496" y="160"/><use href="#g327" x="511" y="160"/><use href="#g328" x="525" y="160"/><use href="#g317" x="539" y="160"/></g><g fill="#000"><use href="#g318" x="600" y="160"/></g><g fill="#000"><use href="#g141" x="615" y="160"/><use href="#g127" x="622" y="160"/><use href="#g319" x="629" y="160"/><use href="#g141" x="636" y="160"/><use href="#g126" x="644" y="160"/><use href="#g126" x="651" y="160"/><use href="#g142" x="658" y="160"/></g><g fill="#000"><use href="#g324" x="468" y="173"/><use href="#g116" x="475" y="173"/><use href="#g309" x="482" y="173"/><use href="#g329" x="496" y="173"/><use href="#g330" x="511" y="173"/><use href="#g331" x="525" y="173"/><use href="#g326" x="539" y="173"/><use href="#g327" x="554" y="173"/><use href="#g328" x="568" y="173"/><use href="#g317" x="582" y="173"/></g><g fill="#000"><use href="#g318" x="600" y="173"/></g><g fill="#000"><use href="#g141" x="615" y="173"/><use href="#g127" x="622" y="173"/><use href="#g319" x="629" y="173"/><use href="#g141" x="636" y="173"/><use href="#g126" x="644" y="173"/><use href="#g126" x="651" y="173"/><use href="#g142" x="658" y="173"/></g><g fill="#000"><use href="#g324" x="468" y="186"/><use href="#g321" x="475" y="186"/><use href="#g309" x="482" y="186"/><use href="#g332" x="496" y="186"/><use href="#g333" x="511" y="186"/><use href="#g331" x="525" y="186"/><use href="#g326" x="539" y="186"/><use href="#g327" x="554" y="186"/><use href="#g328" x="568" y="186"/><use href="#g317" x="582" y="186"/></g><g fill="#000"><use href="#g318" x="600" y="186"/></g><g fill="#000"><use href="#g141" x="615" y="186"/><use href="#g127" x="622" y="186"/><use href="#g319" x="629" y="186"/><use href="#g141" x="636" y="186"/><use href="#g126" x="644" y="186"/><use href="#g126" x="651" y="186"/><use href="#g142" x="658" y="186"/></g><g fill="#000"><use href="#g334" x="467" y="199"/><use href="#g116" x="474" y="199"/><use href="#g309" x="481" y="199"/><use href="#g310" x="496" y="199"/><use href="#g311" x="510" y="199"/><use href="#g312" x="525" y="199"/><use href="#g335" x="539" y="199"/><use href="#g336" x="554" y="199"/><use href="#g337" x="568" y="199"/><use href="#g338" x="583" y="199"/><use href="#g317" x="597" y="199"/></g><g fill="#000"><use href="#g318" x="600" y="199"/></g><g fill="#000"><use href="#g143" x="621" y="199"/><use href="#g319" x="628" y="199"/><use href="#g127" x="635" y="199"/><use href="#g142" x="642" y="199"/><use href="#g142" x="649" y="199"/><use href="#g141" x="656" y="199"/><use href="#g118" x="664" y="199"/><use href="#g320" x="671" y="199"/><use href="#g147" x="678" y="199"/><use href="#g147" x="685" y="199"/><use href="#g147" x="692" y="199"/></g><g fill="#000"><use href="#g334" x="467" y="212"/><use href="#g321" x="474" y="212"/><use href="#g309" x="481" y="212"/><use href="#g322" x="496" y="212"/><use href="#g311" x="510" y="212"/><use href="#g312" x="525" y="212"/><use href="#g335" x="539" y="212"/><use href="#g336" x="554" y="212"/><use href="#g337" x="568" y="212"/><use href="#g338" x="583" y="212"/><use href="#g317" x="597" y="212"/></g><g fill="#000"><use href="#g318" x="600" y="212"/></g><g fill="#000"><use href="#g137" x="622" y="212"/><use href="#g319" x="629" y="212"/><use href="#g127" x="636" y="212"/><use href="#g147" x="643" y="212"/><use href="#g126" x="650" y="212"/><use href="#g143" x="657" y="212"/><use href="#g118" x="664" y="212"/><use href="#g320" x="671" y="212"/><use href="#g147" x="678" y="212"/><use href="#g147" x="685" y="212"/><use href="#g147" x="692" y="212"/></g><g fill="#000"><use href="#g339" x="467" y="238"/><use href="#g117" x="474" y="238"/><use href="#g340" x="481" y="238"/><use href="#g341" x="489" y="238"/><use href="#g309" x="496" y="238"/><use href="#g332" x="510" y="238"/><use href="#g342" x="525" y="238"/><use href="#g343" x="539" y="238"/><use href="#g344" x="554" y="238"/><use href="#g345" x="568" y="238"/><use href="#g315" x="583" y="238"/><use href="#g317" x="597" y="238"/></g><g fill="#000"><use href="#g318" x="600" y="238"/></g><g fill="#000"><use href="#g146" x="656" y="238"/><use href="#g319" x="664" y="238"/><use href="#g142" x="672" y="238"/></g><g fill="#000"><use href="#g339" x="467" y="251"/><use href="#g117" x="474" y="251"/><use href="#g340" x="481" y="251"/><use href="#g341" x="489" y="251"/><use href="#g309" x="496" y="251"/><use href="#g344" x="510" y="251"/><use href="#g345" x="525" y="251"/><use href="#g315" x="539" y="251"/><use href="#g343" x="554" y="251"/><use href="#g333" x="568" y="251"/><use href="#g342" x="583" y="251"/><use href="#g317" x="597" y="251"/></g><g fill="#000"><use href="#g318" x="600" y="251"/></g><g fill="#000"><use href="#g146" x="656" y="251"/><use href="#g319" x="664" y="251"/><use href="#g142" x="672" y="251"/></g><g fill="#000"><use href="#g122" x="467" y="264"/><use href="#g309" x="481" y="264"/><use href="#g332" x="496" y="264"/><use href="#g342" x="510" y="264"/><use href="#g346" x="525" y="264"/><use href="#g326" x="539" y="264"/><use href="#g327" x="554" y="264"/><use href="#g347" x="568" y="264"/><use href="#g348" x="583" y="264"/><use href="#g317" x="597" y="264"/></g><g fill="#000"><use href="#g318" x="600" y="264"/></g><g fill="#000"><use href="#g126" x="620" y="264"/><use href="#g319" x="627" y="264"/><use href="#g144" x="634" y="264"/><use href="#g141" x="642" y="264"/><use href="#g143" x="649" y="264"/><use href="#g146" x="656" y="264"/><use href="#g118" x="663" y="264"/><use href="#g320" x="670" y="264"/><use href="#g147" x="678" y="264"/><use href="#g147" x="685" y="264"/><use href="#g127" x="692" y="264"/></g><g fill="#000"><use href="#g122" x="467" y="277"/><use href="#g309" x="481" y="277"/><use href="#g333" x="496" y="277"/><use href="#g342" x="510" y="277"/><use href="#g346" x="525" y="277"/><use href="#g326" x="539" y="277"/><use href="#g327" x="554" y="277"/><use href="#g347" x="568" y="277"/><use href="#g348" x="583" y="277"/><use href="#g317" x="597" y="277"/></g><g fill="#000"><use href="#g318" x="600" y="277"/></g><g fill="#000"><use href="#g126" x="620" y="277"/><use href="#g319" x="627" y="277"/><use href="#g144" x="634" y="277"/><use href="#g141" x="642" y="277"/><use href="#g143" x="649" y="277"/><use href="#g146" x="656" y="277"/><use href="#g118" x="663" y="277"/><use href="#g320" x="670" y="277"/><use href="#g147" x="678" y="277"/><use href="#g147" x="685" y="277"/><use href="#g127" x="692" y="277"/></g><g fill="#000"><use href="#g339" x="467" y="290"/><use href="#g117" x="474" y="290"/><use href="#g340" x="481" y="290"/><use href="#g341" x="489" y="290"/><use href="#g309" x="496" y="290"/><use href="#g329" x="510" y="290"/><use href="#g342" x="525" y="290"/><use href="#g343" x="539" y="290"/><use href="#g344" x="554" y="290"/><use href="#g345" x="568" y="290"/><use href="#g315" x="583" y="290"/><use href="#g317" x="597" y="290"/></g><g fill="#000"><use href="#g318" x="600" y="290"/></g><g fill="#000"><use href="#g142" x="671" y="290"/></g><g fill="#000"><use href="#g339" x="467" y="303"/><use href="#g117" x="474" y="303"/><use href="#g340" x="481" y="303"/><use href="#g341" x="489" y="303"/><use href="#g309" x="496" y="303"/><use href="#g344" x="510" y="303"/><use href="#g345" x="525" y="303"/><use href="#g315" x="539" y="303"/><use href="#g343" x="554" y="303"/><use href="#g330" x="568" y="303"/><use href="#g342" x="583" y="303"/><use href="#g317" x="597" y="303"/></g><g fill="#000"><use href="#g318" x="600" y="303"/></g><g fill="#000"><use href="#g142" x="671" y="303"/></g><g fill="#000"><use href="#g122" x="467" y="316"/><use href="#g309" x="482" y="316"/><use href="#g329" x="496" y="316"/><use href="#g342" x="510" y="316"/><use href="#g326" x="525" y="316"/><use href="#g327" x="540" y="316"/><use href="#g347" x="554" y="316"/><use href="#g348" x="568" y="316"/><use href="#g317" x="583" y="316"/></g><g fill="#000"><use href="#g318" x="600" y="316"/></g><g fill="#000"><use href="#g145" x="622" y="316"/><use href="#g319" x="629" y="316"/><use href="#g143" x="636" y="316"/><use href="#g146" x="644" y="316"/><use href="#g141" x="651" y="316"/><use href="#g141" x="658" y="316"/><use href="#g118" x="665" y="316"/><use href="#g320" x="672" y="316"/><use href="#g147" x="680" y="316"/><use href="#g147" x="687" y="316"/><use href="#g126" x="694" y="316"/></g><g fill="#000"><use href="#g122" x="467" y="329"/><use href="#g309" x="482" y="329"/><use href="#g330" x="496" y="329"/><use href="#g342" x="510" y="329"/><use href="#g326" x="525" y="329"/><use href="#g327" x="540" y="329"/><use href="#g347" x="554" y="329"/><use href="#g348" x="568" y="329"/><use href="#g317" x="583" y="329"/></g><g fill="#000"><use href="#g318" x="600" y="329"/></g><g fill="#000"><use href="#g145" x="622" y="329"/><use href="#g319" x="629" y="329"/><use href="#g143" x="636" y="329"/><use href="#g146" x="644" y="329"/><use href="#g141" x="651" y="329"/><use href="#g141" x="658" y="329"/><use href="#g118" x="665" y="329"/><use href="#g320" x="672" y="329"/><use href="#g147" x="680" y="329"/><use href="#g147" x="687" y="329"/><use href="#g126" x="694" y="329"/></g><g fill="#000"><use href="#g349" x="467" y="342"/><use href="#g309" x="482" y="342"/><use href="#g350" x="496" y="342"/><use href="#g351" x="511" y="342"/><use href="#g317" x="526" y="342"/></g><g fill="#000"><use href="#g318" x="600" y="342"/></g><g fill="#000"><use href="#g126" x="662" y="342"/><use href="#g147" x="671" y="342"/></g><g fill="#000"><use href="#g352" x="468" y="355"/><use href="#g309" x="482" y="355"/><use href="#g350" x="497" y="355"/><use href="#g353" x="511" y="355"/><use href="#g354" x="526" y="355"/><use href="#g317" x="540" y="355"/></g><g fill="#000"><use href="#g318" x="600" y="355"/></g><g fill="#000"><use href="#g126" x="662" y="355"/><use href="#g146" x="671" y="355"/></g><g fill="#ff0000"><use href="#g355" x="739" y="522"/><use href="#g356" x="747" y="522"/><use href="#g267" x="755" y="522"/><use href="#g356" x="763" y="522"/></g><g fill="#0000ff"><use href="#g357" x="458" y="650"/></g><g fill="#0000ff"><use href="#g358" x="480" y="667"/></g><g fill="#000"><use href="#g359" x="5" y="712"/><use href="#g61" x="13" y="712"/><use href="#g360" x="22" y="712"/></g><g fill="#000"><use href="#g6" x="872" y="711"/><use href="#g361" x="880" y="711"/><use href="#g362" x="887" y="711"/></g><g fill="#fff"><use href="#g363" x="934" y="378"/><use href="#g364" x="941" y="378"/></g><g fill="#808080"><use href="#g363" x="933" y="377"/><use href="#g364" x="940" y="377"/></g><g fill="#fff"><use href="#g365" x="938" y="387"/><use href="#g366" x="945" y="387"/></g><g fill="#808080"><use href="#g365" x="937" y="386"/><use href="#g366" x="944" y="386"/></g><g fill="#fff"><use href="#g367" x="933" y="408"/><use href="#g368" x="941" y="408"/><use href="#g369" x="949" y="408"/></g><g fill="#808080"><use href="#g367" x="932" y="407"/><use href="#g368" x="940" y="407"/><use href="#g369" x="948" y="407"/></g><g fill="#fff"><use href="#g370" x="935" y="437"/><use href="#g369" x="949" y="437"/></g><g fill="#808080"><use href="#g370" x="934" y="436"/><use href="#g369" x="948" y="436"/></g></svg><script>(function(){var W={"t1":11,"t2":11,"t3":16,"t4":16,"t5":16,"t6":18,"t7":18,"t8":18,"t9":16,"t10":8,"t11":11};for(var id in W){var e=document.getElementById(id);if(!e)continue;var old=e.style.transform;e.style.transform="none";var r=document.createRange();r.selectNodeContents(e);var b=r.getBoundingClientRect().width;if(b>0){e.style.transform="scaleX("+(W[id]/b).toFixed(4)+")";e.style.transformOrigin="0 0";}else{e.style.transform=old;}}})();</script></body></html>
